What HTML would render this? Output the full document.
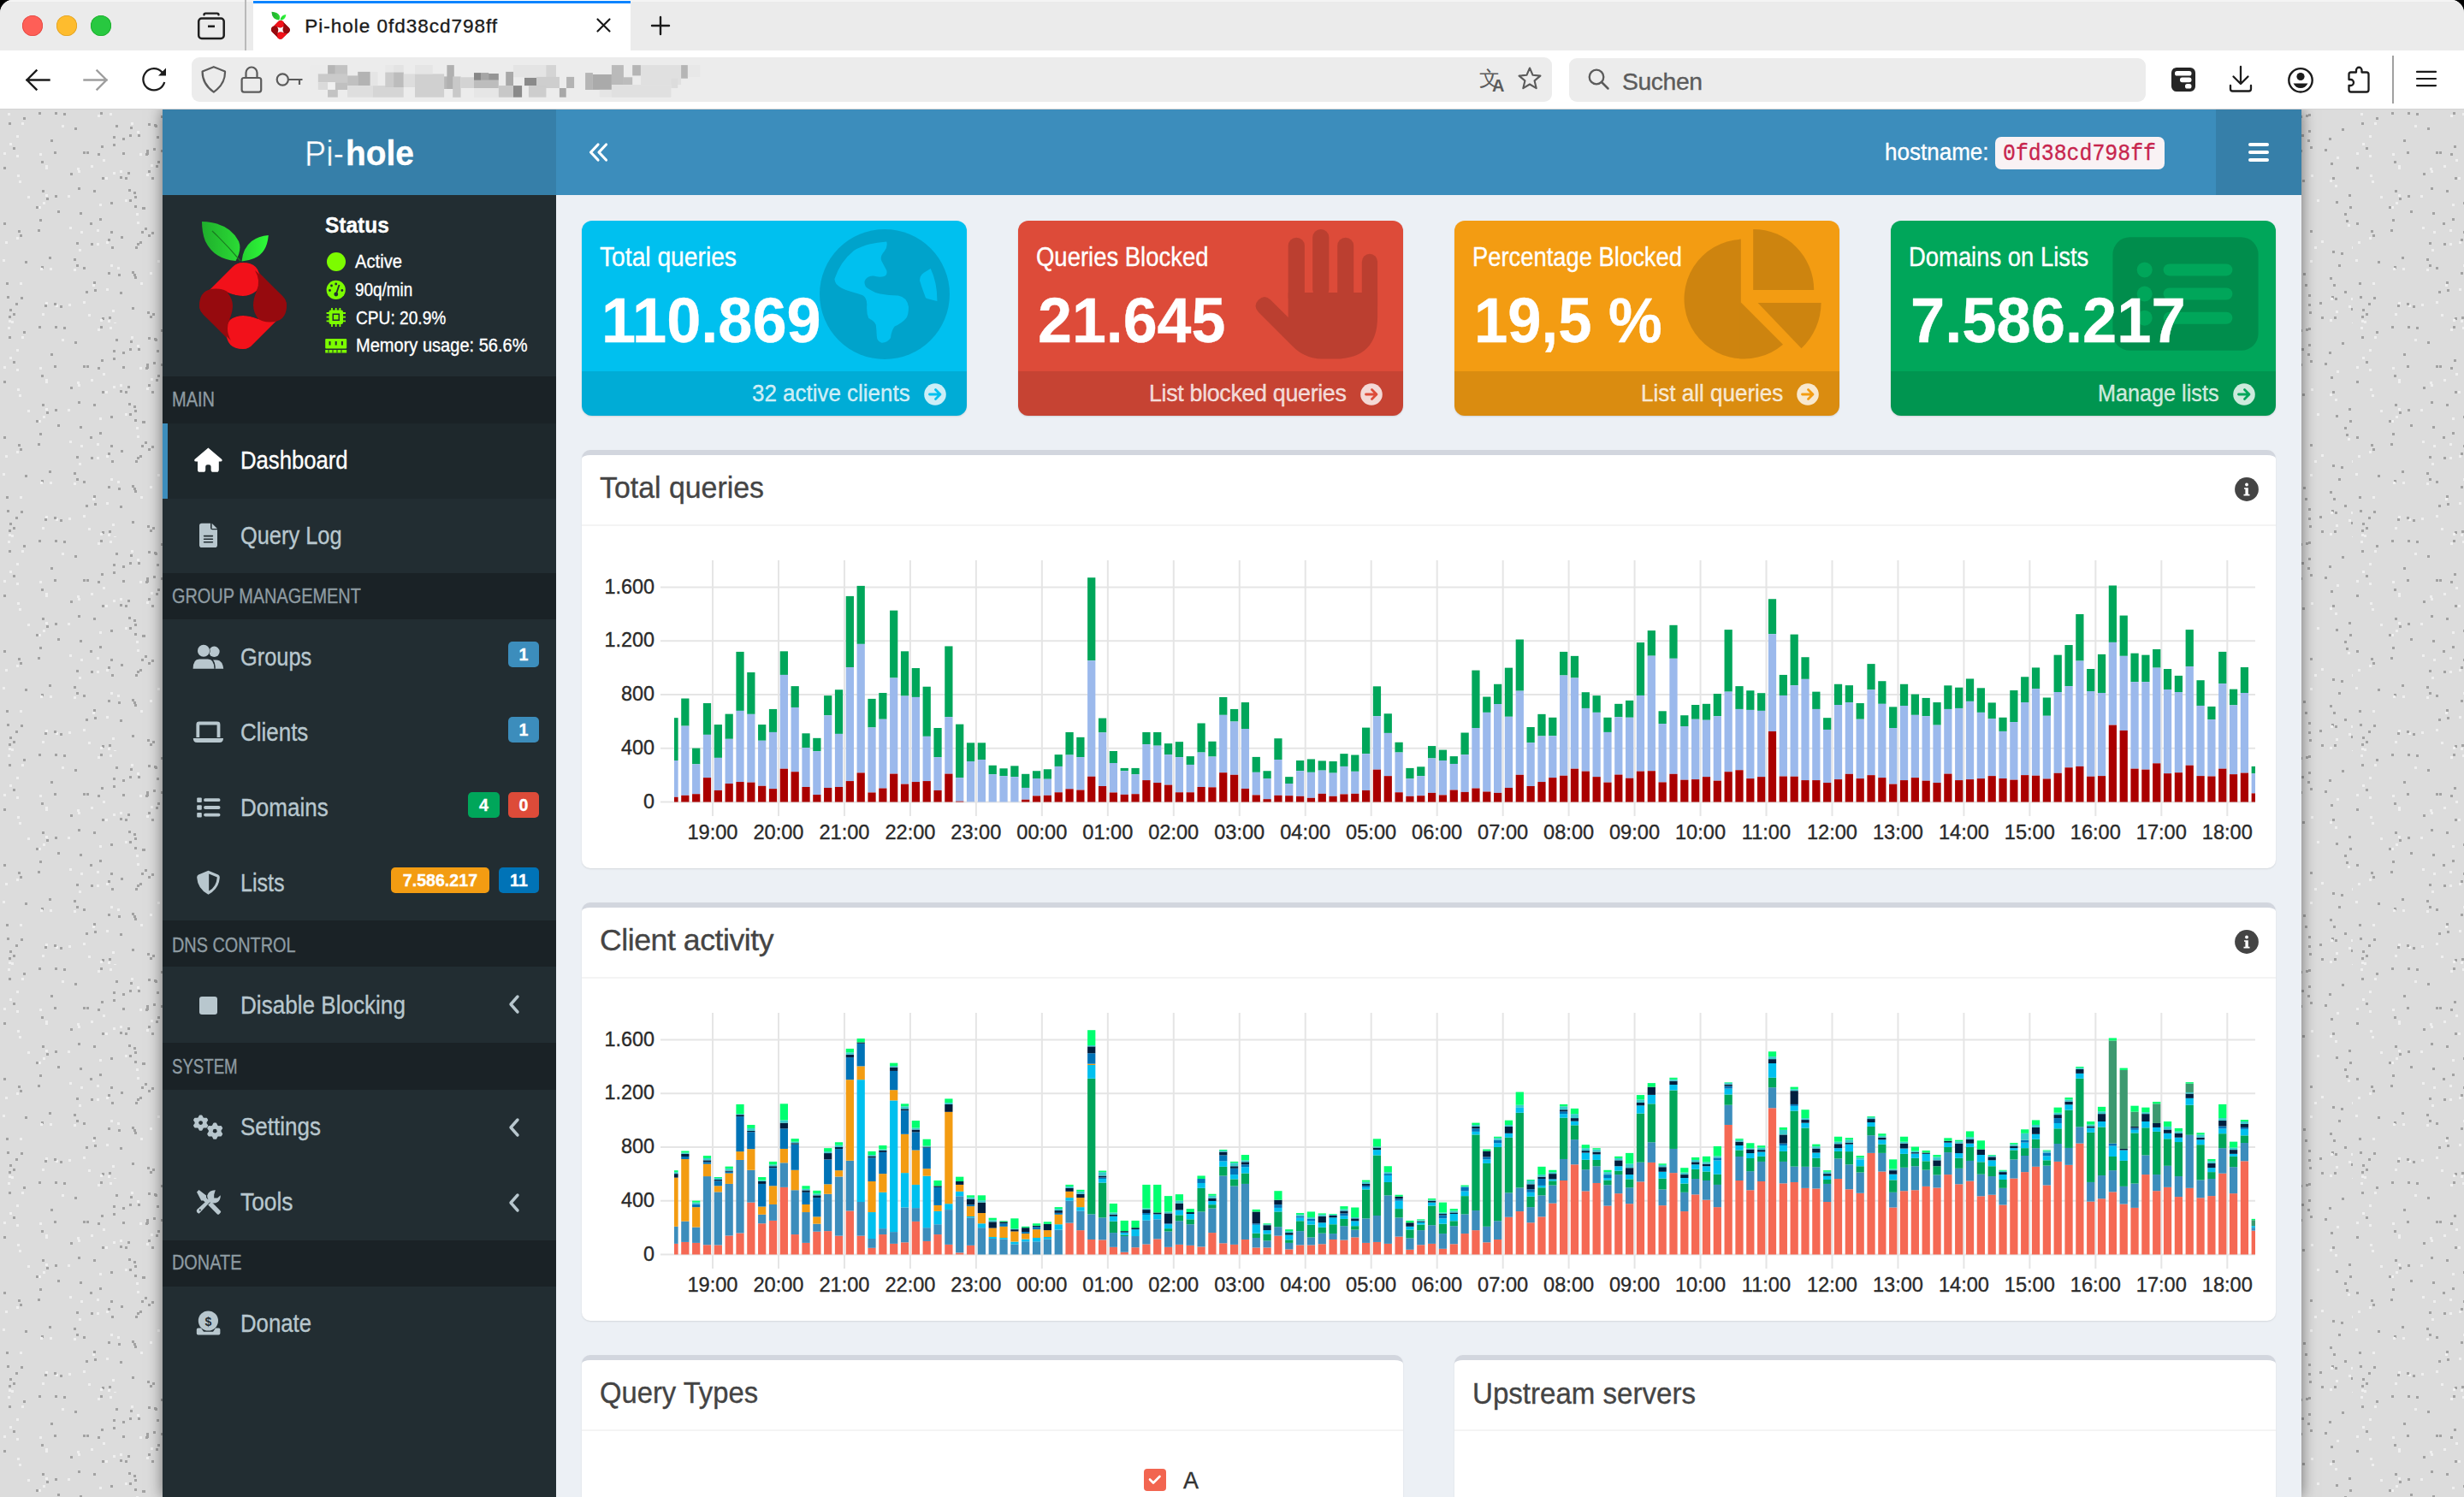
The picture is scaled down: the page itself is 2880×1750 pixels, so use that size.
<!DOCTYPE html><html><head><meta charset="utf-8"><title>Pi-hole</title><style>
*{box-sizing:border-box;margin:0;padding:0}
html,body{width:2880px;height:1750px;overflow:hidden;background:#000}
.t{position:absolute;white-space:nowrap;-webkit-text-stroke:0.35px currentColor}
.abs{position:absolute}
svg{position:absolute;overflow:visible}
</style></head><body>
<div class="abs" style="left:0;top:0;width:2880px;height:1750px;border-radius:15px 15px 0 0;overflow:hidden;background:#dcdcdc">
<div class="abs" style="left:0;top:0;width:2880px;height:59px;background:#ebebeb"></div>
<div class="abs" style="left:0;top:0;width:2880px;height:2px;background:#f4f4f4"></div>
<div class="abs" style="left:25.8px;top:17.7px;width:24px;height:24px;border-radius:50%;background:#fe5f57;box-shadow:inset 0 0 0 0.8px #e14640"></div>
<div class="abs" style="left:65.9px;top:17.7px;width:24px;height:24px;border-radius:50%;background:#febc2e;box-shadow:inset 0 0 0 0.8px #dfa023"></div>
<div class="abs" style="left:106.0px;top:17.7px;width:24px;height:24px;border-radius:50%;background:#28c840;box-shadow:inset 0 0 0 0.8px #1aab29"></div>
<svg style="left:228px;top:12px" width="40" height="38" viewBox="228 12 40 38"><path d="M238.5 17.2 Q238.5 15.6 240.2 15.6 L253.8 15.6 Q255.5 15.6 255.5 17.2" fill="none" stroke="#1f1f1f" stroke-width="2.4" stroke-linecap="round"/><rect x="232.2" y="21.5" width="29.5" height="23.5" rx="3.5" fill="none" stroke="#1f1f1f" stroke-width="2.5"/><rect x="243" y="29.5" width="8" height="2.6" fill="#1f1f1f"/></svg>
<div class="abs" style="left:286px;top:0;width:1.5px;height:59px;background:#b9b9b9"></div>
<div class="abs" style="left:296px;top:0;width:441px;height:59px;background:#fff"></div>
<div class="abs" style="left:296px;top:0.5px;width:441px;height:3.2px;background:#0a84ff"></div>
<div class="t" style="left:356.3px;top:19.9px;font:400 22.53px/22.53px 'Liberation Sans', sans-serif;color:#1b1b1b;letter-spacing:0.98px;">Pi-hole 0fd38cd798ff</div>
<svg style="left:695px;top:19px" width="22" height="22" viewBox="695 19 22 22"><path d="M698.5 22.5 L712.5 36.5 M712.5 22.5 L698.5 36.5" stroke="#1b1b1b" stroke-width="2.2" stroke-linecap="round"/></svg>
<svg style="left:760px;top:18px" width="24" height="24" viewBox="760 18 24 24"><path d="M772 20 V40 M762 30 H782" stroke="#1b1b1b" stroke-width="2.4" stroke-linecap="round"/></svg>
<div class="abs" style="left:0;top:59px;width:2880px;height:68px;background:#fff"></div>
<div class="abs" style="left:0;top:127px;width:2880px;height:1px;background:#d4d4d4"></div>
<svg style="left:26px;top:78px" width="36" height="32" viewBox="26 78 36 32"><path d="M57.5 93.5 H31.5 M42.5 82.5 L31.5 93.5 L42.5 104.5" fill="none" stroke="#1c1c1c" stroke-width="2.4" stroke-linecap="square"/></svg>
<svg style="left:94px;top:78px" width="36" height="32" viewBox="94 78 36 32"><path d="M98.5 93.5 H124.5 M113.5 82.5 L124.5 93.5 L113.5 104.5" fill="none" stroke="#9e9e9e" stroke-width="2.4" stroke-linecap="square"/></svg>
<svg style="left:162px;top:75px" width="36" height="36" viewBox="162 75 36 36"><path d="M192.2 96 A12.6 12.6 0 1 1 189.5 84.5" fill="none" stroke="#1c1c1c" stroke-width="2.3"/><path d="M194 79.5 L194 88.5 L185 88.5Z" fill="#1c1c1c"/></svg>
<div class="abs" style="left:224px;top:67px;width:1590px;height:52px;border-radius:9px;background:#ececec"></div>
<svg style="left:232px;top:74px" width="36" height="38" viewBox="232 74 36 38"><path d="M249.8 78.2 L263 83.5 Q263.5 98 249.8 107.6 Q236.3 98 236.6 83.5Z" fill="none" stroke="#5b5b5b" stroke-width="2.2" stroke-linejoin="round"/></svg>
<svg style="left:279px;top:74px" width="30" height="38" viewBox="279 74 30 38"><path d="M287.5 91 V85 A6.5 6.5 0 0 1 300.5 85 V91" fill="none" stroke="#5b5b5b" stroke-width="2.2"/><rect x="282.6" y="91" width="22.6" height="16.6" rx="2.5" fill="none" stroke="#5b5b5b" stroke-width="2.2"/></svg>
<svg style="left:320px;top:82px" width="38" height="22" viewBox="320 82 38 22"><circle cx="330.3" cy="93" r="6.6" fill="none" stroke="#5b5b5b" stroke-width="2.2"/><path d="M337 93 H353.5 M350 93 V99" fill="none" stroke="#5b5b5b" stroke-width="2.2"/></svg>
<svg style="left:0;top:0" width="2880" height="130" viewBox="0 0 2880 130"><rect x="362.1" y="76.1" width="21.0" height="28.8" fill="#ebebeb"/><rect x="383.1" y="76.1" width="8.8" height="12.3" fill="#b5b5b5"/><rect x="391.9" y="76.1" width="14.2" height="12.3" fill="#c2c2c2"/><rect x="371.8" y="86.4" width="34.3" height="9.7" fill="#cacaca"/><rect x="406.1" y="88.4" width="12.1" height="11.7" fill="#c0c0c0"/><rect x="418.2" y="83.9" width="14.6" height="16.2" fill="#b3b3b3"/><rect x="371.8" y="96.2" width="11.3" height="8.8" fill="#dadada"/><rect x="383.1" y="96.2" width="8.8" height="8.8" fill="#f0f0f0"/><rect x="391.9" y="96.2" width="14.2" height="8.8" fill="#c0c0c0"/><rect x="383.1" y="104.9" width="11.7" height="8.8" fill="#c3c3c3"/><rect x="406.1" y="100.1" width="29.6" height="13.6" fill="#dedede"/><rect x="435.7" y="100.1" width="36.0" height="13.6" fill="#d5d5d5"/><rect x="432.8" y="83.9" width="8.8" height="16.2" fill="#e5e5e5"/><rect x="450.3" y="76.1" width="9.7" height="8.4" fill="#e8e8e8"/><rect x="460.1" y="76.1" width="11.7" height="8.4" fill="#e3e3e3"/><rect x="450.3" y="84.5" width="9.7" height="17.5" fill="#cbcbcb"/><rect x="460.1" y="84.5" width="11.7" height="17.5" fill="#bcbcbc"/><rect x="471.8" y="86.4" width="13.2" height="15.6" fill="#dddddd"/><rect x="485.0" y="86.4" width="34.1" height="27.3" fill="#d0d0d0"/><rect x="485.0" y="76.1" width="20.8" height="10.3" fill="#e5e5e5"/><rect x="519.1" y="89.4" width="10.1" height="14.6" fill="#b8b8b8"/><rect x="522.4" y="76.1" width="8.4" height="27.9" fill="#b0b0b0"/><rect x="529.2" y="89.4" width="9.4" height="24.4" fill="#c8c8c8"/><rect x="538.6" y="90.3" width="15.4" height="12.7" fill="#d3d3d3"/><rect x="554.0" y="85.1" width="8.0" height="8.8" fill="#878787"/><rect x="562.0" y="85.1" width="9.2" height="8.8" fill="#a5a5a5"/><rect x="571.1" y="86.0" width="11.7" height="7.8" fill="#959595"/><rect x="554.0" y="93.8" width="28.8" height="9.2" fill="#bdbdbd"/><rect x="554.0" y="103.0" width="28.8" height="10.7" fill="#e6e6e6"/><rect x="582.8" y="100.1" width="17.5" height="13.6" fill="#c8c8c8"/><rect x="591.2" y="83.9" width="8.8" height="16.2" fill="#a8a8a8"/><rect x="600.0" y="100.1" width="10.1" height="13.6" fill="#8a8a8a"/><rect x="600.0" y="76.1" width="38.4" height="14.2" fill="#e4e4e4"/><rect x="638.3" y="76.1" width="11.7" height="14.2" fill="#d4d4d4"/><rect x="613.0" y="90.9" width="14.0" height="9.2" fill="#8a8a8a"/><rect x="627.0" y="89.9" width="26.9" height="13.1" fill="#cecece"/><rect x="617.9" y="100.1" width="20.5" height="13.6" fill="#cdcdcd"/><rect x="653.9" y="103.0" width="7.8" height="10.7" fill="#a8a8a8"/><rect x="662.1" y="89.9" width="9.0" height="13.1" fill="#b3b3b3"/><rect x="684.1" y="85.1" width="8.8" height="19.9" fill="#b5b5b5"/><rect x="692.9" y="87.0" width="22.0" height="17.9" fill="#aaaaaa"/><rect x="714.9" y="76.1" width="14.0" height="23.0" fill="#bababa"/><rect x="728.9" y="90.3" width="10.3" height="8.8" fill="#bcbcbc"/><rect x="700.7" y="104.9" width="14.2" height="8.8" fill="#e5e5e5"/><rect x="714.9" y="99.1" width="69.5" height="14.6" fill="#e0e0e0"/><rect x="739.2" y="76.1" width="9.7" height="12.3" fill="#b5b5b5"/><rect x="749.0" y="76.1" width="47.1" height="23.0" fill="#e0e0e0"/><rect x="796.1" y="76.1" width="7.8" height="15.6" fill="#b5b5b5"/><rect x="803.9" y="76.1" width="14.6" height="13.8" fill="#e8e8e8"/><rect x="784.4" y="91.7" width="7.8" height="11.3" fill="#dcdcdc"/></svg>
<svg style="left:1728px;top:75px" width="80" height="36" viewBox="1728 75 80 36"><text x="1729" y="100" font-family="Liberation Sans" font-size="24" fill="#5b5b5b">文</text><text x="1744" y="107" font-family="Liberation Sans" font-size="20" font-weight="700" fill="#5b5b5b">A</text><path d="M1788 79.5 L1791.6 87.8 L1800.4 88.6 L1793.6 94.4 L1795.7 103.2 L1788 98.5 L1780.3 103.2 L1782.4 94.4 L1775.6 88.6 L1784.4 87.8Z" fill="none" stroke="#5b5b5b" stroke-width="2.1" stroke-linejoin="round"/></svg>
<div class="abs" style="left:1834px;top:67.5px;width:674px;height:51px;border-radius:9px;background:#ececec"></div>
<svg style="left:1855px;top:78px" width="30" height="30" viewBox="1855 78 30 30"><circle cx="1866" cy="90" r="8.3" fill="none" stroke="#5b5b5b" stroke-width="2.3"/><path d="M1872 96 L1879.5 103.5" stroke="#5b5b5b" stroke-width="2.5" stroke-linecap="round"/></svg>
<div class="t" style="left:1896.0px;top:81.0px;font:400 28.34px/28.34px 'Liberation Sans', sans-serif;color:#5b5b5b;letter-spacing:-0.42px;">Suchen</div>
<svg style="left:2530px;top:72px" width="330" height="50" viewBox="2530 72 330 50"><rect x="2538" y="79" width="28" height="28" rx="6" fill="#252525"/><rect x="2542" y="83" width="19.5" height="5.6" rx="2.6" fill="#fff"/><rect x="2548" y="90.6" width="13.5" height="5.6" rx="2.6" fill="#fff"/><rect x="2554" y="98" width="7.5" height="5.6" rx="2.6" fill="#fff"/><path d="M2619 78 V98 M2610.5 89.5 L2619 98 L2627.5 89.5 M2607 100 V104 Q2607 106.5 2609.5 106.5 H2628.5 Q2631 106.5 2631 104 V100" fill="none" stroke="#1c1c1c" stroke-width="2.3" stroke-linecap="round" stroke-linejoin="round"/><circle cx="2689" cy="93.8" r="13.7" fill="none" stroke="#1c1c1c" stroke-width="2.4"/><circle cx="2689" cy="89.5" r="4.6" fill="#1c1c1c"/><path d="M2680.5 97.5 H2697.5 Q2694.5 103 2689 103 Q2683.5 103 2680.5 97.5Z" fill="#1c1c1c"/><path d="M2754 84.5 V82 A3.2 3.2 0 0 1 2760.5 82 V84.5 H2766 Q2768.5 84.5 2768.5 87 V105 Q2768.5 107.5 2766 107.5 H2748 Q2745.5 107.5 2745.5 105 V100 H2747.5 A3.5 3.5 0 0 0 2747.5 93 H2745.5 V87 Q2745.5 84.5 2748 84.5Z" fill="none" stroke="#1c1c1c" stroke-width="2.3" stroke-linejoin="round"/><rect x="2796.2" y="65" width="1.6" height="56" fill="#8a8a8a"/><path d="M2825 83.9 H2847 M2825 92 H2847 M2825 100.1 H2847" stroke="#1c1c1c" stroke-width="2.2" stroke-linecap="round"/></svg>
<div class="abs" style="left:0;top:128px;width:2880px;height:1622px;overflow:hidden"><div class="abs" style="left:0;top:-128px;width:2880px;height:1750px">
<svg style="left:0;top:128px" width="2880" height="1622"><defs><pattern id="sp" width="250" height="250" patternUnits="userSpaceOnUse"><rect x="113" y="140" width="3" height="3" fill="#efefef"/><rect x="116" y="127" width="3" height="3" fill="#a2a2a2"/><rect x="46" y="128" width="3" height="3" fill="#a2a2a2"/><rect x="198" y="24" width="3" height="3" fill="#a2a2a2"/><rect x="23" y="202" width="3" height="3" fill="#efefef"/><rect x="10" y="246" width="3" height="3" fill="#efefef"/><rect x="163" y="154" width="3" height="3" fill="#a2a2a2"/><rect x="4" y="132" width="3" height="3" fill="#a2a2a2"/><rect x="48" y="60" width="3" height="3" fill="#a2a2a2"/><rect x="116" y="110" width="3" height="3" fill="#efefef"/><rect x="130" y="160" width="3" height="3" fill="#a2a2a2"/><rect x="166" y="114" width="3" height="3" fill="#a2a2a2"/><rect x="249" y="249" width="3" height="3" fill="#efefef"/><rect x="177" y="79" width="3" height="3" fill="#a2a2a2"/><rect x="72" y="18" width="3" height="3" fill="#efefef"/><rect x="100" y="212" width="3" height="3" fill="#a2a2a2"/><rect x="240" y="212" width="3" height="3" fill="#a2a2a2"/><rect x="52" y="228" width="3" height="3" fill="#a2a2a2"/><rect x="245" y="99" width="3" height="3" fill="#a2a2a2"/><rect x="157" y="195" width="3" height="3" fill="#a2a2a2"/><rect x="22" y="83" width="3" height="3" fill="#efefef"/><rect x="190" y="29" width="3" height="3" fill="#a2a2a2"/><rect x="25" y="15" width="3" height="3" fill="#efefef"/><rect x="44" y="140" width="3" height="3" fill="#a2a2a2"/><rect x="48" y="183" width="3" height="3" fill="#a2a2a2"/><rect x="161" y="29" width="3" height="3" fill="#a2a2a2"/><rect x="53" y="67" width="3" height="3" fill="#efefef"/><rect x="201" y="76" width="3" height="3" fill="#efefef"/><rect x="53" y="99" width="3" height="3" fill="#efefef"/><rect x="160" y="25" width="3" height="3" fill="#efefef"/><rect x="53" y="65" width="3" height="3" fill="#efefef"/><rect x="82" y="74" width="3" height="3" fill="#a2a2a2"/><rect x="23" y="146" width="3" height="3" fill="#a2a2a2"/><rect x="150" y="93" width="3" height="3" fill="#a2a2a2"/><rect x="240" y="121" width="3" height="3" fill="#a2a2a2"/><rect x="217" y="46" width="3" height="3" fill="#a2a2a2"/><rect x="227" y="204" width="3" height="3" fill="#a2a2a2"/><rect x="47" y="185" width="3" height="3" fill="#efefef"/><rect x="49" y="238" width="3" height="3" fill="#efefef"/><rect x="151" y="105" width="3" height="3" fill="#a2a2a2"/><rect x="10" y="241" width="3" height="3" fill="#a2a2a2"/><rect x="176" y="64" width="3" height="3" fill="#efefef"/><rect x="149" y="73" width="3" height="3" fill="#a2a2a2"/><rect x="180" y="17" width="3" height="3" fill="#a2a2a2"/><rect x="140" y="213" width="3" height="3" fill="#a2a2a2"/><rect x="70" y="229" width="3" height="3" fill="#a2a2a2"/><rect x="4" y="67" width="3" height="3" fill="#a2a2a2"/><rect x="15" y="44" width="3" height="3" fill="#a2a2a2"/><rect x="143" y="33" width="3" height="3" fill="#a2a2a2"/><rect x="223" y="245" width="3" height="3" fill="#efefef"/><rect x="173" y="146" width="3" height="3" fill="#a2a2a2"/><rect x="9" y="4" width="3" height="3" fill="#efefef"/><rect x="175" y="241" width="3" height="3" fill="#a2a2a2"/><rect x="159" y="121" width="3" height="3" fill="#efefef"/><rect x="80" y="250" width="3" height="3" fill="#a2a2a2"/><rect x="137" y="184" width="3" height="3" fill="#efefef"/><rect x="184" y="176" width="3" height="3" fill="#efefef"/><rect x="229" y="88" width="3" height="3" fill="#efefef"/><rect x="225" y="218" width="3" height="3" fill="#a2a2a2"/><rect x="198" y="216" width="3" height="3" fill="#a2a2a2"/><rect x="156" y="96" width="3" height="3" fill="#a2a2a2"/><rect x="152" y="20" width="3" height="3" fill="#a2a2a2"/><rect x="248" y="220" width="3" height="3" fill="#efefef"/><rect x="97" y="184" width="3" height="3" fill="#a2a2a2"/><rect x="110" y="210" width="3" height="3" fill="#a2a2a2"/><rect x="188" y="7" width="3" height="3" fill="#a2a2a2"/><rect x="120" y="58" width="3" height="3" fill="#efefef"/><rect x="124" y="154" width="3" height="3" fill="#efefef"/><rect x="64" y="3" width="3" height="3" fill="#a2a2a2"/><rect x="170" y="51" width="3" height="3" fill="#a2a2a2"/><rect x="226" y="165" width="3" height="3" fill="#a2a2a2"/><rect x="223" y="82" width="3" height="3" fill="#efefef"/><rect x="50" y="108" width="3" height="3" fill="#efefef"/><rect x="229" y="220" width="3" height="3" fill="#a2a2a2"/><rect x="146" y="79" width="3" height="3" fill="#a2a2a2"/><rect x="124" y="209" width="3" height="3" fill="#efefef"/><rect x="178" y="238" width="3" height="3" fill="#a2a2a2"/><rect x="42" y="113" width="3" height="3" fill="#a2a2a2"/><rect x="54" y="103" width="3" height="3" fill="#a2a2a2"/><rect x="123" y="79" width="3" height="3" fill="#efefef"/><rect x="246" y="113" width="3" height="3" fill="#a2a2a2"/><rect x="8" y="218" width="3" height="3" fill="#a2a2a2"/><rect x="177" y="143" width="3" height="3" fill="#a2a2a2"/><rect x="198" y="5" width="3" height="3" fill="#a2a2a2"/><rect x="114" y="6" width="3" height="3" fill="#efefef"/><rect x="59" y="35" width="3" height="3" fill="#a2a2a2"/><rect x="157" y="112" width="3" height="3" fill="#a2a2a2"/><rect x="164" y="202" width="3" height="3" fill="#efefef"/><rect x="171" y="50" width="3" height="3" fill="#a2a2a2"/><rect x="45" y="3" width="3" height="3" fill="#a2a2a2"/><rect x="179" y="45" width="3" height="3" fill="#a2a2a2"/><rect x="86" y="174" width="3" height="3" fill="#a2a2a2"/><rect x="154" y="189" width="3" height="3" fill="#a2a2a2"/><rect x="198" y="227" width="3" height="3" fill="#a2a2a2"/><rect x="233" y="181" width="3" height="3" fill="#a2a2a2"/><rect x="113" y="156" width="3" height="3" fill="#efefef"/><rect x="94" y="142" width="3" height="3" fill="#efefef"/><rect x="199" y="236" width="3" height="3" fill="#a2a2a2"/><rect x="163" y="51" width="3" height="3" fill="#efefef"/><rect x="205" y="160" width="3" height="3" fill="#efefef"/><rect x="53" y="225" width="3" height="3" fill="#efefef"/><rect x="244" y="134" width="3" height="3" fill="#efefef"/><rect x="80" y="227" width="3" height="3" fill="#efefef"/><rect x="87" y="21" width="3" height="3" fill="#a2a2a2"/><rect x="138" y="192" width="3" height="3" fill="#a2a2a2"/><rect x="7" y="202" width="3" height="3" fill="#a2a2a2"/><rect x="200" y="43" width="3" height="3" fill="#a2a2a2"/><rect x="197" y="35" width="3" height="3" fill="#a2a2a2"/><rect x="129" y="181" width="3" height="3" fill="#efefef"/><rect x="172" y="236" width="3" height="3" fill="#a2a2a2"/><rect x="237" y="22" width="3" height="3" fill="#a2a2a2"/><rect x="132" y="73" width="3" height="3" fill="#efefef"/><rect x="160" y="131" width="3" height="3" fill="#efefef"/><rect x="140" y="78" width="3" height="3" fill="#a2a2a2"/><rect x="211" y="225" width="3" height="3" fill="#a2a2a2"/><rect x="213" y="242" width="3" height="3" fill="#a2a2a2"/><rect x="143" y="50" width="3" height="3" fill="#a2a2a2"/><rect x="126" y="151" width="3" height="3" fill="#a2a2a2"/><rect x="242" y="129" width="3" height="3" fill="#a2a2a2"/><rect x="200" y="141" width="3" height="3" fill="#a2a2a2"/><rect x="173" y="16" width="3" height="3" fill="#a2a2a2"/><rect x="103" y="239" width="3" height="3" fill="#efefef"/><rect x="67" y="118" width="3" height="3" fill="#a2a2a2"/><rect x="108" y="204" width="3" height="3" fill="#efefef"/><rect x="119" y="79" width="3" height="3" fill="#a2a2a2"/><rect x="154" y="231" width="3" height="3" fill="#a2a2a2"/><rect x="195" y="6" width="3" height="3" fill="#a2a2a2"/><rect x="57" y="172" width="3" height="3" fill="#a2a2a2"/><rect x="89" y="155" width="3" height="3" fill="#a2a2a2"/><rect x="183" y="31" width="3" height="3" fill="#a2a2a2"/><rect x="63" y="49" width="3" height="3" fill="#a2a2a2"/><rect x="109" y="94" width="3" height="3" fill="#a2a2a2"/><rect x="132" y="40" width="3" height="3" fill="#a2a2a2"/><rect x="158" y="160" width="3" height="3" fill="#a2a2a2"/><rect x="213" y="153" width="3" height="3" fill="#efefef"/><rect x="58" y="185" width="3" height="3" fill="#efefef"/><rect x="226" y="79" width="3" height="3" fill="#a2a2a2"/><rect x="231" y="55" width="3" height="3" fill="#efefef"/><rect x="222" y="33" width="3" height="3" fill="#a2a2a2"/><rect x="182" y="65" width="3" height="3" fill="#a2a2a2"/><rect x="208" y="105" width="3" height="3" fill="#efefef"/><rect x="32" y="101" width="3" height="3" fill="#efefef"/><rect x="4" y="50" width="3" height="3" fill="#efefef"/><rect x="228" y="242" width="3" height="3" fill="#a2a2a2"/><rect x="126" y="190" width="3" height="3" fill="#a2a2a2"/><rect x="171" y="47" width="3" height="3" fill="#a2a2a2"/><rect x="27" y="9" width="3" height="3" fill="#a2a2a2"/><rect x="129" y="142" width="3" height="3" fill="#a2a2a2"/><rect x="46" y="51" width="3" height="3" fill="#efefef"/><rect x="248" y="232" width="3" height="3" fill="#a2a2a2"/><rect x="15" y="238" width="3" height="3" fill="#a2a2a2"/><rect x="191" y="82" width="3" height="3" fill="#a2a2a2"/><rect x="129" y="108" width="3" height="3" fill="#a2a2a2"/><rect x="3" y="175" width="3" height="3" fill="#efefef"/><rect x="45" y="113" width="3" height="3" fill="#efefef"/><rect x="101" y="49" width="3" height="3" fill="#a2a2a2"/><rect x="128" y="4" width="3" height="3" fill="#efefef"/><rect x="200" y="176" width="3" height="3" fill="#efefef"/><rect x="157" y="101" width="3" height="3" fill="#a2a2a2"/><rect x="126" y="246" width="3" height="3" fill="#efefef"/><rect x="65" y="228" width="3" height="3" fill="#efefef"/><rect x="194" y="204" width="3" height="3" fill="#a2a2a2"/><rect x="224" y="220" width="3" height="3" fill="#efefef"/><rect x="192" y="191" width="3" height="3" fill="#a2a2a2"/><rect x="181" y="18" width="3" height="3" fill="#a2a2a2"/><rect x="117" y="3" width="3" height="3" fill="#a2a2a2"/><rect x="160" y="156" width="3" height="3" fill="#a2a2a2"/><rect x="236" y="167" width="3" height="3" fill="#a2a2a2"/><rect x="165" y="142" width="3" height="3" fill="#a2a2a2"/><rect x="97" y="250" width="3" height="3" fill="#a2a2a2"/><rect x="175" y="190" width="3" height="3" fill="#efefef"/><rect x="6" y="154" width="3" height="3" fill="#efefef"/><rect x="64" y="100" width="3" height="3" fill="#a2a2a2"/><rect x="49" y="94" width="3" height="3" fill="#a2a2a2"/><rect x="63" y="226" width="3" height="3" fill="#a2a2a2"/><rect x="127" y="242" width="3" height="3" fill="#a2a2a2"/><rect x="249" y="160" width="3" height="3" fill="#efefef"/><rect x="19" y="149" width="3" height="3" fill="#efefef"/><rect x="11" y="233" width="3" height="3" fill="#a2a2a2"/><rect x="118" y="42" width="3" height="3" fill="#a2a2a2"/><rect x="153" y="15" width="3" height="3" fill="#efefef"/><rect x="105" y="132" width="3" height="3" fill="#a2a2a2"/><rect x="91" y="71" width="3" height="3" fill="#efefef"/><rect x="140" y="71" width="3" height="3" fill="#efefef"/><rect x="74" y="4" width="3" height="3" fill="#a2a2a2"/><rect x="11" y="39" width="3" height="3" fill="#efefef"/><rect x="97" y="224" width="3" height="3" fill="#efefef"/><rect x="13" y="247" width="3" height="3" fill="#efefef"/><rect x="18" y="226" width="3" height="3" fill="#a2a2a2"/><rect x="119" y="243" width="3" height="3" fill="#a2a2a2"/><rect x="131" y="234" width="3" height="3" fill="#efefef"/><rect x="117" y="245" width="3" height="3" fill="#efefef"/><rect x="151" y="29" width="3" height="3" fill="#a2a2a2"/><rect x="114" y="51" width="3" height="3" fill="#a2a2a2"/><rect x="132" y="31" width="3" height="3" fill="#a2a2a2"/><rect x="167" y="114" width="3" height="3" fill="#a2a2a2"/><rect x="146" y="105" width="3" height="3" fill="#efefef"/><rect x="133" y="249" width="3" height="3" fill="#efefef"/><rect x="184" y="60" width="3" height="3" fill="#a2a2a2"/><rect x="223" y="196" width="3" height="3" fill="#a2a2a2"/><rect x="90" y="68" width="3" height="3" fill="#efefef"/><rect x="141" y="148" width="3" height="3" fill="#a2a2a2"/><rect x="188" y="47" width="3" height="3" fill="#a2a2a2"/><rect x="245" y="229" width="3" height="3" fill="#efefef"/><rect x="10" y="15" width="3" height="3" fill="#a2a2a2"/><rect x="106" y="156" width="3" height="3" fill="#a2a2a2"/><rect x="135" y="18" width="3" height="3" fill="#a2a2a2"/><rect x="169" y="138" width="3" height="3" fill="#a2a2a2"/><rect x="93" y="120" width="3" height="3" fill="#a2a2a2"/><rect x="86" y="186" width="3" height="3" fill="#efefef"/><rect x="19" y="30" width="3" height="3" fill="#efefef"/><rect x="156" y="192" width="3" height="3" fill="#a2a2a2"/><rect x="106" y="65" width="3" height="3" fill="#efefef"/><rect x="92" y="163" width="3" height="3" fill="#efefef"/><rect x="81" y="137" width="3" height="3" fill="#efefef"/><rect x="230" y="107" width="3" height="3" fill="#a2a2a2"/><rect x="24" y="219" width="3" height="3" fill="#a2a2a2"/><rect x="21" y="141" width="3" height="3" fill="#a2a2a2"/><rect x="171" y="75" width="3" height="3" fill="#efefef"/><rect x="19" y="53" width="3" height="3" fill="#efefef"/><rect x="20" y="76" width="3" height="3" fill="#efefef"/><rect x="173" y="71" width="3" height="3" fill="#a2a2a2"/><rect x="89" y="181" width="3" height="3" fill="#a2a2a2"/><rect x="29" y="177" width="3" height="3" fill="#a2a2a2"/><rect x="230" y="235" width="3" height="3" fill="#efefef"/><rect x="109" y="201" width="3" height="3" fill="#a2a2a2"/><rect x="79" y="100" width="3" height="3" fill="#efefef"/><rect x="224" y="62" width="3" height="3" fill="#a2a2a2"/><rect x="91" y="91" width="3" height="3" fill="#a2a2a2"/><rect x="97" y="49" width="3" height="3" fill="#a2a2a2"/></pattern></defs><rect width="2880" height="1622" fill="url(#sp)"/></svg>
<div class="abs" style="left:190px;top:128px;width:2500px;height:1622px;background:#ecf0f5;box-shadow:0 0 16px rgba(0,0,0,.5)"></div>
<div class="abs" style="left:190px;top:128px;width:460px;height:100px;background:#367fa9"></div>
<div class="abs" style="left:650px;top:128px;width:2040px;height:100px;background:#3c8dbc"></div>
<div class="abs" style="left:2590px;top:128px;width:100px;height:100px;background:#367fa9"></div>
<div class="t" style="left:356.0px;top:157.8px;font:400 43.02px/43.02px 'Liberation Sans', sans-serif;color:#fff;letter-spacing:0.00px;-webkit-text-stroke:0.6px #367fa9;transform:scaleX(0.8764);transform-origin:0 0;">Pi-</div>
<div class="t" style="left:403.8px;top:159.1px;font:700 40.70px/40.70px 'Liberation Sans', sans-serif;color:#fff;letter-spacing:0.00px;transform:scaleX(0.9554);transform-origin:0 0;">hole</div>
<svg style="left:680px;top:160px" width="40" height="36" viewBox="680 160 40 36"><path d="M699 169 L690.5 178 L699 187 M708.5 169 L700 178 L708.5 187" fill="none" stroke="#fff" stroke-width="3.2" stroke-linecap="round" stroke-linejoin="round"/></svg>
<div class="t" style="left:2203.4px;top:164.4px;font:400 27.62px/27.62px 'Liberation Sans', sans-serif;color:#fff;letter-spacing:0.00px;transform:scaleX(0.9429);transform-origin:0 0;">hostname:</div>
<div class="abs" style="left:2332px;top:160px;width:198px;height:38px;border-radius:7px;background:#f9f2f4"></div>
<div class="t" style="left:2341.0px;top:165.9px;font:400 28.53px/28.53px 'Liberation Mono', monospace;color:#c7254e;letter-spacing:0.00px;transform:scaleX(0.8715);transform-origin:0 0;">0fd38cd798ff</div>
<svg style="left:2620px;top:160px" width="40" height="36" viewBox="2620 160 40 36"><path d="M2630 169 H2650 M2630 178 H2650 M2630 187 H2650" stroke="#fff" stroke-width="4" stroke-linecap="round"/></svg>
<div class="abs" style="left:190px;top:228px;width:460px;height:1522px;background:#222d32"></div>
<svg style="left:225px;top:250px" width="120" height="165" viewBox="225 250 120 165"><defs><linearGradient id="lg1" x1="0" x2="1"><stop offset="0" stop-color="#1fae2c"/><stop offset="1" stop-color="#2bdb35"/></linearGradient><linearGradient id="lg2" x1="0" x2="1"><stop offset="0" stop-color="#25d232"/><stop offset="1" stop-color="#2efb38"/></linearGradient></defs><path d="M236 259 Q268 260 279 282 Q283 292 275.5 305 Q250 303 240 282 Q236 272 236 259Z" fill="url(#lg1)"/><path d="M248 270 Q265 286 281 305" stroke="#1a7a20" stroke-width="1.2" fill="none"/><path d="M313.8 275 Q312 296 297 302 Q290 305 282.5 305.5 Q284 290 294 282 Q302 276 313.8 275Z" fill="url(#lg2)"/><path d="M284 307 Q291 307 296 312 L330 346 Q335 351 335 357 Q335 363 330 368 L296 402 Q291 408 284 408 Q277 408 272 402 L238 368 Q233 363 233 357 Q233 351 238 346 L272 312 Q277 307 284 307Z" fill="#960a0e"/><path d="M238 346 L272 312 Q277 307 284 307 Q303.5 307 303.5 326.5 Q303.5 346 284 346 Q276 346 266 342 Q254 337 244 342Z" fill="#f2111a"/><path d="M330 368 L296 402 Q291 408 284 408 Q264.5 408 264.5 388.5 Q264.5 369 284 369 Q292 369 302 373 Q314 378 324 373Z" fill="#f2111a"/><path d="M238 368 Q233 363 233 357 Q233 337.5 252.5 337.5 Q272 337.5 272 357 Q272 365 268 374 Q263 386 270 398Z" fill="#960a0e"/><path d="M330 346 Q335 351 335 357 Q335 376.5 315.5 376.5 Q296 376.5 296 357 Q296 349 300 340 Q305 328 298 316Z" fill="#960a0e"/><path d="M284 346 Q276 346 266 342 Q272 350 272 357 Q272 365 268 374 Q276 369 284 369 Q292 369 302 373 Q296 365 296 357 Q296 349 300 340 Q292 346 284 346Z" fill="#222d32"/></svg>
<div class="t" style="left:379.5px;top:251.0px;font:700 25.58px/25.58px 'Liberation Sans', sans-serif;color:#fff;letter-spacing:0.00px;transform:scaleX(0.9571);transform-origin:0 0;">Status</div>
<div class="abs" style="left:381.8px;top:295px;width:22px;height:22px;border-radius:50%;background:#7cfc00"></div>
<div class="t" style="left:415.1px;top:295.4px;font:400 22.24px/22.24px 'Liberation Sans', sans-serif;color:#fff;letter-spacing:0.00px;transform:scaleX(0.9076);transform-origin:0 0;">Active</div>
<svg style="left:380px;top:326px" width="26" height="26" viewBox="380 326 26 26"><circle cx="392.7" cy="338.9" r="11.1" fill="#7cfc00"/><circle cx="392.7" cy="332" r="1.4" fill="#222d32"/><circle cx="387.5" cy="334" r="1.4" fill="#222d32"/><circle cx="385.5" cy="339.5" r="1.4" fill="#222d32"/><circle cx="399.8" cy="339.5" r="1.4" fill="#222d32"/><path d="M396.5 333 L393.5 342" stroke="#222d32" stroke-width="1.8"/><circle cx="392.8" cy="344" r="2.4" fill="#222d32"/></svg>
<div class="t" style="left:415.1px;top:328.4px;font:400 22.24px/22.24px 'Liberation Sans', sans-serif;color:#fff;letter-spacing:0.00px;transform:scaleX(0.8501);transform-origin:0 0;">90q/min</div>
<svg style="left:380px;top:358px" width="26" height="26" viewBox="380 358 26 26"><rect x="384.5" y="362.5" width="16.5" height="16.5" rx="2" fill="#7cfc00"/><rect x="388.5" y="366.5" width="8.5" height="8.5" fill="#222d32"/><rect x="390" y="368" width="5.5" height="5.5" fill="#7cfc00"/><path d="M388 360 V363 M392.7 360 V363 M397.4 360 V363 M388 378.5 V382 M392.7 378.5 V382 M397.4 378.5 V382 M381.6 366 H385 M381.6 370.7 H385 M381.6 375.4 H385 M400.5 366 H404 M400.5 370.7 H404 M400.5 375.4 H404" stroke="#7cfc00" stroke-width="1.8"/></svg>
<div class="t" style="left:415.7px;top:361.0px;font:400 21.80px/21.80px 'Liberation Sans', sans-serif;color:#fff;letter-spacing:0.00px;transform:scaleX(0.8782);transform-origin:0 0;">CPU: 20.9%</div>
<svg style="left:379px;top:394px" width="28" height="20" viewBox="379 394 28 20"><rect x="380.2" y="396" width="25" height="11.5" rx="1" fill="#7cfc00"/><rect x="384.5" y="399" width="2" height="4.5" fill="#222d32"/><rect x="391.7" y="399" width="2" height="4.5" fill="#222d32"/><rect x="398.9" y="399" width="2" height="4.5" fill="#222d32"/><rect x="380.2" y="409" width="25" height="3.5" fill="#7cfc00"/><path d="M384 409 V412.5 M389 409 V412.5 M394 409 V412.5 M399 409 V412.5" stroke="#222d32" stroke-width="1"/></svg>
<div class="t" style="left:415.7px;top:393.8px;font:400 21.37px/21.37px 'Liberation Sans', sans-serif;color:#fff;letter-spacing:0.00px;transform:scaleX(0.9384);transform-origin:0 0;">Memory usage: 56.6%</div>
<div class="abs" style="left:190px;top:440px;width:460px;height:55px;background:#1a2226"></div>
<div class="t" style="left:201.0px;top:456.3px;font:400 23.26px/23.26px 'Liberation Sans', sans-serif;color:#8e9ba2;letter-spacing:0.00px;transform:scaleX(0.8600);transform-origin:0 0;">MAIN</div>
<div class="abs" style="left:190px;top:495px;width:460px;height:88px;background:#1e282c"></div>
<div class="abs" style="left:190px;top:495px;width:6px;height:88px;background:#3c8dbc"></div>
<svg style="left:224px;top:520px" width="40" height="36" viewBox="224 520 40 36"><path d="M243.4 523.6 L259.3 537 Q260.5 539.6 257.6 539.6 H255.8 V549.2 Q255.8 551.8 253.2 551.8 H249.2 Q246.6 551.8 246.6 549.2 V545.6 Q246.6 543.2 244.2 543.2 H242.6 Q240.2 543.2 240.2 545.6 V549.2 Q240.2 551.8 237.6 551.8 H233.6 Q231 551.8 231 549.2 V539.6 H229.2 Q226.3 539.6 227.5 537 Z" fill="#fff"/></svg>
<div class="t" style="left:281.0px;top:524.4px;font:400 29.07px/29.07px 'Liberation Sans', sans-serif;color:#fff;letter-spacing:0.00px;transform:scaleX(0.8836);transform-origin:0 0;">Dashboard</div>
<svg style="left:228px;top:606px" width="32" height="40" viewBox="228 606 32 40"><path d="M235.8 611.8 H246 V617 Q246 619.2 248.2 619.2 H254 V637.2 Q254 640 251.2 640 H235.8 Q233 640 233 637.2 V614.6 Q233 611.8 235.8 611.8Z M247.6 611.8 L254 618 H247.6Z" fill="#b8c7ce"/><path d="M238.6 626.6 H248.4 M238.6 630.2 H248.4 M238.6 633.8 H248.4" stroke="#222d32" stroke-width="1.6" stroke-linecap="round"/></svg>
<div class="t" style="left:281.0px;top:612.4px;font:400 29.07px/29.07px 'Liberation Sans', sans-serif;color:#b8c7ce;letter-spacing:0.00px;transform:scaleX(0.8736);transform-origin:0 0;">Query Log</div>
<div class="abs" style="left:190px;top:670px;width:460px;height:54px;background:#1a2226"></div>
<div class="t" style="left:201.0px;top:685.9px;font:400 23.26px/23.26px 'Liberation Sans', sans-serif;color:#8e9ba2;letter-spacing:0.00px;transform:scaleX(0.8565);transform-origin:0 0;">GROUP MANAGEMENT</div>
<svg style="left:222px;top:750px" width="44" height="36" viewBox="222 750 44 36"><circle cx="250.4" cy="761.8" r="6.2" fill="#b8c7ce"/><path d="M249 771.4 H252.5 Q260 771.4 261.2 781.8 H250.5Z" fill="#b8c7ce"/><circle cx="238" cy="760.8" r="7.6" fill="#222d32"/><circle cx="238" cy="760.8" r="7" fill="#b8c7ce"/><path d="M232.5 769.4 H243.5 Q251.8 769.4 251.8 781.8 H224.2 Q224.2 769.4 232.5 769.4Z" fill="#222d32"/><path d="M233 770.4 H243 Q250.4 770.4 250.4 781.8 H225.6 Q225.6 770.4 233 770.4Z" fill="#b8c7ce"/></svg>
<div class="t" style="left:281.0px;top:754.0px;font:400 29.07px/29.07px 'Liberation Sans', sans-serif;color:#b8c7ce;letter-spacing:0.00px;transform:scaleX(0.8736);transform-origin:0 0;">Groups</div>
<div class="abs" style="left:594px;top:750px;width:36px;height:30px;border-radius:5px;background:#3c8dbc"></div>
<div class="t" style="left:606.6px;top:755.9px;font:700 19.62px/19.62px 'Liberation Sans', sans-serif;color:#fff;letter-spacing:0.00px;">1</div>
<svg style="left:222px;top:838px" width="44" height="36" viewBox="222 838 44 36"><path d="M231.3 862 V847 Q231.3 845.5 232.8 845.5 H254 Q255.5 845.5 255.5 847 V862" fill="none" stroke="#b8c7ce" stroke-width="3.8"/><path d="M225.8 863 H261 Q261 868 256.5 868 H230.3 Q225.8 868 225.8 863Z" fill="#b8c7ce"/></svg>
<div class="t" style="left:281.0px;top:842.0px;font:400 29.07px/29.07px 'Liberation Sans', sans-serif;color:#b8c7ce;letter-spacing:0.00px;transform:scaleX(0.8929);transform-origin:0 0;">Clients</div>
<div class="abs" style="left:594px;top:838px;width:36px;height:30px;border-radius:5px;background:#3c8dbc"></div>
<div class="t" style="left:606.6px;top:843.9px;font:700 19.62px/19.62px 'Liberation Sans', sans-serif;color:#fff;letter-spacing:0.00px;">1</div>
<svg style="left:224px;top:926px" width="40" height="36" viewBox="224 926 40 36"><rect x="230.2" y="932.6" width="5.6" height="5.4" rx="1" fill="#b8c7ce"/><rect x="230.2" y="941.3" width="5.6" height="5.4" rx="1" fill="#b8c7ce"/><rect x="230.2" y="950" width="5.6" height="5.4" rx="1" fill="#b8c7ce"/><path d="M240 935.2 H255.6 M240 944 H255.6 M240 952.6 H255.6" stroke="#b8c7ce" stroke-width="3.8" stroke-linecap="round"/></svg>
<div class="t" style="left:281.0px;top:930.0px;font:400 29.07px/29.07px 'Liberation Sans', sans-serif;color:#b8c7ce;letter-spacing:0.00px;transform:scaleX(0.8955);transform-origin:0 0;">Domains</div>
<div class="abs" style="left:547px;top:926px;width:37px;height:30px;border-radius:5px;background:#00a65a"></div>
<div class="t" style="left:560.1px;top:931.9px;font:700 19.62px/19.62px 'Liberation Sans', sans-serif;color:#fff;letter-spacing:0.00px;">4</div>
<div class="abs" style="left:594px;top:926px;width:36px;height:30px;border-radius:5px;background:#dd4b39"></div>
<div class="t" style="left:606.6px;top:931.9px;font:700 19.62px/19.62px 'Liberation Sans', sans-serif;color:#fff;letter-spacing:0.00px;">0</div>
<svg style="left:224px;top:1012px" width="40" height="40" viewBox="224 1012 40 40"><path d="M243.5 1017.8 L255 1022.6 Q257 1023.6 256.8 1026 Q256 1039 243.5 1045.8 Q231 1039 230.2 1026 Q230 1023.6 232 1022.6Z" fill="#b8c7ce"/><path d="M244.2 1021.4 L253.8 1025.4 Q253 1036.5 244.2 1041.6Z" fill="#222d32"/></svg>
<div class="t" style="left:281.0px;top:1018.0px;font:400 29.07px/29.07px 'Liberation Sans', sans-serif;color:#b8c7ce;letter-spacing:0.00px;transform:scaleX(0.8638);transform-origin:0 0;">Lists</div>
<div class="abs" style="left:457px;top:1014px;width:115px;height:30px;border-radius:5px;background:#f39c12"></div>
<div class="t" style="left:470.8px;top:1019.9px;font:700 19.62px/19.62px 'Liberation Sans', sans-serif;color:#fff;letter-spacing:0.00px;">7.586.217</div>
<div class="abs" style="left:583px;top:1014px;width:47px;height:30px;border-radius:5px;background:#0073b7"></div>
<div class="t" style="left:596.1px;top:1019.9px;font:700 19.62px/19.62px 'Liberation Sans', sans-serif;color:#fff;letter-spacing:0.00px;">11</div>
<div class="abs" style="left:190px;top:1076px;width:460px;height:54px;background:#1a2226"></div>
<div class="t" style="left:201.0px;top:1093.9px;font:400 23.26px/23.26px 'Liberation Sans', sans-serif;color:#8e9ba2;letter-spacing:0.00px;transform:scaleX(0.8541);transform-origin:0 0;">DNS CONTROL</div>
<div class="abs" style="left:232.8px;top:1165px;width:21px;height:20.6px;border-radius:3px;background:#b8c7ce"></div>
<div class="t" style="left:281.0px;top:1161.4px;font:400 29.07px/29.07px 'Liberation Sans', sans-serif;color:#b8c7ce;letter-spacing:0.00px;transform:scaleX(0.8978);transform-origin:0 0;">Disable Blocking</div>
<svg style="left:590px;top:1160px" width="22" height="28" viewBox="0 0 22 28"><path d="M15 5 L7 14 L15 23" fill="none" stroke="#b8c7ce" stroke-width="3.4" stroke-linecap="round" stroke-linejoin="round"/></svg>
<div class="abs" style="left:190px;top:1219px;width:460px;height:55px;background:#1a2226"></div>
<div class="t" style="left:201.0px;top:1235.8px;font:400 23.26px/23.26px 'Liberation Sans', sans-serif;color:#8e9ba2;letter-spacing:0.00px;transform:scaleX(0.8014);transform-origin:0 0;">SYSTEM</div>
<svg style="left:220px;top:1300px" width="46" height="36" viewBox="220 1300 46 36"><path d="M233.50 1304.27 L235.70 1304.27 L236.98 1306.86 L238.38 1307.67 L241.26 1307.49 L242.36 1309.39 L240.76 1311.79 L240.76 1313.41 L242.36 1315.81 L241.26 1317.71 L238.38 1317.53 L236.98 1318.34 L235.70 1320.93 L233.50 1320.93 L232.22 1318.34 L230.82 1317.53 L227.94 1317.71 L226.84 1315.81 L228.44 1313.41 L228.44 1311.79 L226.84 1309.39 L227.94 1307.49 L230.82 1307.67 L232.22 1306.86Z" fill="#b8c7ce" stroke="#b8c7ce" stroke-width="1.6" stroke-linejoin="round"/><circle cx="234.6" cy="1312.6" r="2.4" fill="#222d32"/><path d="M250.04 1313.38 L252.36 1313.38 L253.72 1316.12 L255.21 1316.97 L258.26 1316.78 L259.42 1318.79 L257.73 1321.34 L257.73 1323.06 L259.42 1325.61 L258.26 1327.62 L255.21 1327.43 L253.72 1328.28 L252.36 1331.02 L250.04 1331.02 L248.68 1328.28 L247.19 1327.43 L244.14 1327.62 L242.98 1325.61 L244.67 1323.06 L244.67 1321.34 L242.98 1318.79 L244.14 1316.78 L247.19 1316.97 L248.68 1316.12Z" fill="#b8c7ce" stroke="#b8c7ce" stroke-width="1.6" stroke-linejoin="round"/><circle cx="251.2" cy="1322.2" r="2.4" fill="#222d32"/></svg>
<div class="t" style="left:281.0px;top:1302.9px;font:400 29.07px/29.07px 'Liberation Sans', sans-serif;color:#b8c7ce;letter-spacing:0.00px;transform:scaleX(0.8945);transform-origin:0 0;">Settings</div>
<svg style="left:590px;top:1304px" width="22" height="28" viewBox="0 0 22 28"><path d="M15 5 L7 14 L15 23" fill="none" stroke="#b8c7ce" stroke-width="3.4" stroke-linecap="round" stroke-linejoin="round"/></svg>
<svg style="left:224px;top:1386px" width="40" height="38" viewBox="224 1386 40 38"><path d="M230 1393.5 L232.5 1391 L241 1397.6 V1400 L244.2 1403.2 L240.8 1406.6 L237.6 1403.4 H235.2Z" fill="#b8c7ce"/><path d="M243.2 1408.6 L253.8 1419.2 Q255 1420.4 256.2 1419.2 L257.6 1417.8 Q258.8 1416.6 257.6 1415.4 L247 1404.8Z" fill="#b8c7ce"/><path d="M251.8 1391.2 Q244.5 1391 242.2 1397.4 Q242 1400 243.4 1402 L230.2 1414 Q228.6 1417.5 232.6 1418.8 L245.2 1405.4 Q250 1407.8 254.8 1405 Q257.8 1402.4 257.8 1397.2 L254.2 1400.6 H250.2 V1396.6Z" fill="#b8c7ce"/><circle cx="233.8" cy="1414.5" r="1" fill="#222d32"/></svg>
<div class="t" style="left:281.0px;top:1391.1px;font:400 29.07px/29.07px 'Liberation Sans', sans-serif;color:#b8c7ce;letter-spacing:0.00px;transform:scaleX(0.9060);transform-origin:0 0;">Tools</div>
<svg style="left:590px;top:1392px" width="22" height="28" viewBox="0 0 22 28"><path d="M15 5 L7 14 L15 23" fill="none" stroke="#b8c7ce" stroke-width="3.4" stroke-linecap="round" stroke-linejoin="round"/></svg>
<div class="abs" style="left:190px;top:1450px;width:460px;height:54px;background:#1a2226"></div>
<div class="t" style="left:201.0px;top:1465.3px;font:400 23.26px/23.26px 'Liberation Sans', sans-serif;color:#8e9ba2;letter-spacing:0.00px;transform:scaleX(0.8558);transform-origin:0 0;">DONATE</div>
<svg style="left:224px;top:1528px" width="40" height="36" viewBox="224 1528 40 36"><path d="M231.6 1552.4 H235 L238 1556.8 H249 L252 1552.4 H255.6 Q257.4 1552.4 257.4 1554.2 V1558.8 Q257.4 1560.6 255.6 1560.6 H231.6 Q229.8 1560.6 229.8 1558.8 V1554.2 Q229.8 1552.4 231.6 1552.4Z" fill="#b8c7ce"/><circle cx="243.4" cy="1544" r="11.6" fill="#b8c7ce"/><text x="243.4" y="1549.6" font-family="Liberation Sans" font-weight="700" font-size="14" text-anchor="middle" fill="#222d32">$</text></svg>
<div class="t" style="left:281.0px;top:1533.4px;font:400 29.07px/29.07px 'Liberation Sans', sans-serif;color:#b8c7ce;letter-spacing:0.00px;transform:scaleX(0.8853);transform-origin:0 0;">Donate</div>
<div class="abs" style="left:680px;top:258px;width:450px;height:228px;border-radius:12px;background:#00c0ef;overflow:hidden;box-shadow:0 1px 2px rgba(0,0,0,.12)"><div class="abs" style="left:0;top:176px;width:450px;height:52px;background:rgba(0,0,0,.1)"></div></div>
<svg style="left:955px;top:265px" width="160" height="160" viewBox="955 265 160 160"><circle cx="1034" cy="344" r="76" fill="rgba(0,0,0,.15)"/><path d="M1036.2 282.4 Q1038 288 1033.5 294 Q1028 300 1030.5 305.3 Q1033 310 1036.2 316 Q1038 322.5 1031 323.5 Q1026 324 1021 322.6 Q1013 322 1010.5 329 Q1010 335 1015.3 337.7 Q1022 342 1028.6 343.5 Q1040 345.5 1049.6 345.4 Q1060 347 1062 358.7 Q1062 368 1059.1 372.1 Q1054 378 1045.8 381.6 Q1042 386 1041 395 Q1037 401 1030.5 400.7 Q1025 399 1024.8 393 Q1024.5 386 1023.8 379.7 Q1022 375 1015.3 372.1 Q1012.5 366 1013.3 356 Q1013.3 348 1008 345 Q1003.8 343.5 995 341 Q983 338 977.5 332 Q975.2 328 975.5 326 Q982 306 998 293 Q1012 284 1036.2 282.4Z" fill="#00c0ef"/><path d="M1087.7 313.9 Q1095.5 330 1095.4 352 Q1086 350 1082 348.2 Q1078 338 1075 328 Q1075 322 1080 318.7Z" fill="#00c0ef"/></svg>
<div class="t" style="left:700.5px;top:284.5px;font:400 30.52px/30.52px 'Liberation Sans', sans-serif;color:#fff;letter-spacing:0.00px;transform:scaleX(0.9245);transform-origin:0 0;">Total queries</div>
<div class="t" style="left:703.0px;top:338.4px;font:700 73.55px/73.55px 'Liberation Sans', sans-serif;color:#fff;letter-spacing:0.00px;transform:scaleX(0.9800);transform-origin:0 0;">110.869</div>
<div class="t" style="left:879.2px;top:446.9px;font:400 26.89px/26.89px 'Liberation Sans', sans-serif;color:rgba(255,255,255,.8);letter-spacing:0.00px;transform:scaleX(0.9659);transform-origin:0 0;">32 active clients</div>
<svg style="left:1079px;top:447px" width="28" height="28" viewBox="1079 447 28 28"><circle cx="1093" cy="461" r="12.8" fill="rgba(255,255,255,.8)"/><path d="M1086.5 461 H1098.5 M1093.5 455.5 L1099 461 L1093.5 466.5" fill="none" stroke="#00c0ef" stroke-width="2.8" stroke-linecap="round" stroke-linejoin="round"/></svg>
<div class="abs" style="left:1190px;top:258px;width:450px;height:228px;border-radius:12px;background:#dd4b39;overflow:hidden;box-shadow:0 1px 2px rgba(0,0,0,.12)"><div class="abs" style="left:0;top:176px;width:450px;height:52px;background:rgba(0,0,0,.1)"></div></div>
<svg style="left:1460px;top:262px" width="160" height="165" viewBox="1460 262 160 165"><g fill="#000" opacity="0.15"><rect x="1505.7" y="277.7" width="19.2" height="80" rx="9.6"/><rect x="1534.2" y="267.9" width="19.2" height="80" rx="9.6"/><rect x="1563.2" y="277.7" width="19" height="80" rx="9.5"/><rect x="1591.8" y="296.8" width="18.3" height="70" rx="9.15"/><path d="M1505.7 342 H1610.1 V370 Q1610.1 419.6 1560 419.6 H1545 Q1525 419.6 1510 404 L1471 365 Q1464 357.5 1471 350.5 Q1478 343.5 1485 350.5 L1505.7 371Z"/></g></svg>
<div class="t" style="left:1210.5px;top:284.5px;font:400 30.52px/30.52px 'Liberation Sans', sans-serif;color:#fff;letter-spacing:0.00px;transform:scaleX(0.9000);transform-origin:0 0;">Queries Blocked</div>
<div class="t" style="left:1213.0px;top:338.4px;font:700 73.55px/73.55px 'Liberation Sans', sans-serif;color:#fff;letter-spacing:0.00px;transform:scaleX(0.9753);transform-origin:0 0;">21.645</div>
<div class="t" style="left:1343.0px;top:446.9px;font:400 26.89px/26.89px 'Liberation Sans', sans-serif;color:rgba(255,255,255,.8);letter-spacing:-0.35px;">List blocked queries</div>
<svg style="left:1589px;top:447px" width="28" height="28" viewBox="1589 447 28 28"><circle cx="1603" cy="461" r="12.8" fill="rgba(255,255,255,.8)"/><path d="M1596.5 461 H1608.5 M1603.5 455.5 L1609 461 L1603.5 466.5" fill="none" stroke="#dd4b39" stroke-width="2.8" stroke-linecap="round" stroke-linejoin="round"/></svg>
<div class="abs" style="left:1700px;top:258px;width:450px;height:228px;border-radius:12px;background:#f39c12;overflow:hidden;box-shadow:0 1px 2px rgba(0,0,0,.12)"><div class="abs" style="left:0;top:176px;width:450px;height:52px;background:rgba(0,0,0,.1)"></div></div>
<svg style="left:1960px;top:262px" width="175" height="165" viewBox="1960 262 175 165"><g fill="#000" opacity="0.15"><path d="M2034.8 279.6 V353.5 L2084 402.7 A70 70 0 1 1 2034.8 279.6Z"/><path d="M2049.2 338.9 V267.9 A71 71 0 0 1 2120.2 338.9Z"/><path d="M2054.6 353.9 H2128.6 A74 74 0 0 1 2105.5 407.2Z"/></g></svg>
<div class="t" style="left:1720.5px;top:284.5px;font:400 30.52px/30.52px 'Liberation Sans', sans-serif;color:#fff;letter-spacing:0.00px;transform:scaleX(0.8968);transform-origin:0 0;">Percentage Blocked</div>
<div class="t" style="left:1723.0px;top:338.4px;font:700 73.55px/73.55px 'Liberation Sans', sans-serif;color:#fff;letter-spacing:0.00px;transform:scaleX(0.9603);transform-origin:0 0;">19,5 %</div>
<div class="t" style="left:1917.6px;top:446.9px;font:400 26.89px/26.89px 'Liberation Sans', sans-serif;color:rgba(255,255,255,.8);letter-spacing:0.00px;transform:scaleX(0.9684);transform-origin:0 0;">List all queries</div>
<svg style="left:2099px;top:447px" width="28" height="28" viewBox="2099 447 28 28"><circle cx="2113" cy="461" r="12.8" fill="rgba(255,255,255,.8)"/><path d="M2106.5 461 H2118.5 M2113.5 455.5 L2119 461 L2113.5 466.5" fill="none" stroke="#f39c12" stroke-width="2.8" stroke-linecap="round" stroke-linejoin="round"/></svg>
<div class="abs" style="left:2210px;top:258px;width:450px;height:228px;border-radius:12px;background:#00a65a;overflow:hidden;box-shadow:0 1px 2px rgba(0,0,0,.12)"><div class="abs" style="left:0;top:176px;width:450px;height:52px;background:rgba(0,0,0,.1)"></div></div>
<svg style="left:2465px;top:272px" width="180" height="142" viewBox="2465 272 180 142"><rect x="2469.4" y="277.3" width="170.2" height="132.5" rx="20" fill="rgba(0,0,0,.15)"/><g fill="#00a65a"><circle cx="2506.7" cy="315.4" r="9"/><circle cx="2506.7" cy="343.5" r="9"/><circle cx="2506.7" cy="371.7" r="9"/><rect x="2528.6" y="308.4" width="80.8" height="14" rx="7"/><rect x="2528.6" y="336.5" width="80.8" height="14" rx="7"/><rect x="2528.6" y="364.7" width="80.8" height="14" rx="7"/></g></svg>
<div class="t" style="left:2230.5px;top:284.5px;font:400 30.52px/30.52px 'Liberation Sans', sans-serif;color:#fff;letter-spacing:0.00px;transform:scaleX(0.8983);transform-origin:0 0;">Domains on Lists</div>
<div class="t" style="left:2233.0px;top:338.4px;font:700 73.55px/73.55px 'Liberation Sans', sans-serif;color:#fff;letter-spacing:0.00px;transform:scaleX(0.9829);transform-origin:0 0;">7.586.217</div>
<div class="t" style="left:2452.4px;top:446.9px;font:400 26.89px/26.89px 'Liberation Sans', sans-serif;color:rgba(255,255,255,.8);letter-spacing:0.00px;transform:scaleX(0.9378);transform-origin:0 0;">Manage lists</div>
<svg style="left:2609px;top:447px" width="28" height="28" viewBox="2609 447 28 28"><circle cx="2623" cy="461" r="12.8" fill="rgba(255,255,255,.8)"/><path d="M2616.5 461 H2628.5 M2623.5 455.5 L2629 461 L2623.5 466.5" fill="none" stroke="#00a65a" stroke-width="2.8" stroke-linecap="round" stroke-linejoin="round"/></svg>
<div class="abs" style="left:680px;top:526px;width:1980px;height:489px;border-radius:10px;background:#fff;border-top:6px solid #d2d6de;box-shadow:0 1px 2px rgba(0,0,0,.1)"></div>
<div class="abs" style="left:680px;top:613px;width:1980px;height:2px;background:#f4f4f4"></div>
<div class="t" style="left:701.0px;top:552.9px;font:400 35.61px/35.61px 'Liberation Sans', sans-serif;color:#444;letter-spacing:0.00px;transform:scaleX(0.9509);transform-origin:0 0;">Total queries</div>
<svg style="left:2611px;top:557px" width="30" height="30" viewBox="2611 557 30 30"><circle cx="2626" cy="572" r="13.9" fill="#444"/><circle cx="2626" cy="566.5" r="1.9" fill="#fff"/><path d="M2623 570.2 H2627.8 V577.8 H2629.5 V579.4 H2622.5 V577.8 H2624.4 V571.8 H2623Z" fill="#fff"/></svg>
<div class="abs" style="left:680px;top:1055px;width:1980px;height:489px;border-radius:10px;background:#fff;border-top:6px solid #d2d6de;box-shadow:0 1px 2px rgba(0,0,0,.1)"></div>
<div class="abs" style="left:680px;top:1142px;width:1980px;height:2px;background:#f4f4f4"></div>
<div class="t" style="left:701.0px;top:1082.1px;font:400 35.61px/35.61px 'Liberation Sans', sans-serif;color:#444;letter-spacing:-0.44px;">Client activity</div>
<svg style="left:2611px;top:1086px" width="30" height="30" viewBox="2611 1086 30 30"><circle cx="2626" cy="1101" r="13.9" fill="#444"/><circle cx="2626" cy="1095.5" r="1.9" fill="#fff"/><path d="M2623 1099.2 H2627.8 V1106.8 H2629.5 V1108.4 H2622.5 V1106.8 H2624.4 V1100.8 H2623Z" fill="#fff"/></svg>
<div class="abs" style="left:680px;top:1584px;width:960px;height:300px;border-radius:10px;background:#fff;border-top:6px solid #d2d6de;box-shadow:0 1px 2px rgba(0,0,0,.1)"></div>
<div class="abs" style="left:680px;top:1671px;width:960px;height:2px;background:#f4f4f4"></div>
<div class="t" style="left:701.0px;top:1610.6px;font:400 35.61px/35.61px 'Liberation Sans', sans-serif;color:#444;letter-spacing:0.00px;transform:scaleX(0.9195);transform-origin:0 0;">Query Types</div>
<div class="abs" style="left:1700px;top:1584px;width:960px;height:300px;border-radius:10px;background:#fff;border-top:6px solid #d2d6de;box-shadow:0 1px 2px rgba(0,0,0,.1)"></div>
<div class="abs" style="left:1700px;top:1671px;width:960px;height:2px;background:#f4f4f4"></div>
<div class="t" style="left:1721.0px;top:1611.6px;font:400 35.61px/35.61px 'Liberation Sans', sans-serif;color:#444;letter-spacing:0.00px;transform:scaleX(0.9289);transform-origin:0 0;">Upstream servers</div>
<div class="abs" style="left:1337px;top:1717px;width:26px;height:26px;border-radius:4px;background:#f26550"></div>
<svg style="left:1337px;top:1717px" width="26" height="26" viewBox="0 0 26 26"><path d="M7 12.5 L11 16.5 L18.5 9" fill="none" stroke="#fff" stroke-width="2.6" stroke-linecap="round" stroke-linejoin="round"/></svg>
<div class="t" style="left:1383.1px;top:1717.8px;font:400 26.89px/26.89px 'Liberation Sans', sans-serif;color:#333;letter-spacing:0.00px;">A</div>
<svg style="left:0;top:0" width="2880" height="1750" viewBox="0 0 2880 1750">
<rect x="772" y="936.50" width="1864" height="2" fill="#e5e5e5"/>
<rect x="772" y="873.75" width="1864" height="2" fill="#e5e5e5"/>
<rect x="772" y="811.00" width="1864" height="2" fill="#e5e5e5"/>
<rect x="772" y="748.25" width="1864" height="2" fill="#e5e5e5"/>
<rect x="772" y="685.50" width="1864" height="2" fill="#e5e5e5"/>
<rect x="832.00" y="655" width="2" height="299" fill="#e5e5e5"/>
<rect x="908.97" y="655" width="2" height="299" fill="#e5e5e5"/>
<rect x="985.94" y="655" width="2" height="299" fill="#e5e5e5"/>
<rect x="1062.91" y="655" width="2" height="299" fill="#e5e5e5"/>
<rect x="1139.88" y="655" width="2" height="299" fill="#e5e5e5"/>
<rect x="1216.85" y="655" width="2" height="299" fill="#e5e5e5"/>
<rect x="1293.82" y="655" width="2" height="299" fill="#e5e5e5"/>
<rect x="1370.79" y="655" width="2" height="299" fill="#e5e5e5"/>
<rect x="1447.76" y="655" width="2" height="299" fill="#e5e5e5"/>
<rect x="1524.73" y="655" width="2" height="299" fill="#e5e5e5"/>
<rect x="1601.70" y="655" width="2" height="299" fill="#e5e5e5"/>
<rect x="1678.67" y="655" width="2" height="299" fill="#e5e5e5"/>
<rect x="1755.64" y="655" width="2" height="299" fill="#e5e5e5"/>
<rect x="1832.61" y="655" width="2" height="299" fill="#e5e5e5"/>
<rect x="1909.58" y="655" width="2" height="299" fill="#e5e5e5"/>
<rect x="1986.55" y="655" width="2" height="299" fill="#e5e5e5"/>
<rect x="2063.52" y="655" width="2" height="299" fill="#e5e5e5"/>
<rect x="2140.49" y="655" width="2" height="299" fill="#e5e5e5"/>
<rect x="2217.46" y="655" width="2" height="299" fill="#e5e5e5"/>
<rect x="2294.43" y="655" width="2" height="299" fill="#e5e5e5"/>
<rect x="2371.40" y="655" width="2" height="299" fill="#e5e5e5"/>
<rect x="2448.37" y="655" width="2" height="299" fill="#e5e5e5"/>
<rect x="2525.34" y="655" width="2" height="299" fill="#e5e5e5"/>
<rect x="2602.31" y="655" width="2" height="299" fill="#e5e5e5"/>
<clipPath id="cp1"><rect x="788" y="600" width="1848" height="340"/></clipPath><g clip-path="url(#cp1)">
<rect x="783.38" y="839.17" width="9.24" height="49.86" fill="#00a65a"/>
<rect x="783.38" y="889.03" width="9.24" height="42.76" fill="#9bb9ec"/>
<rect x="783.38" y="931.79" width="9.24" height="5.71" fill="#aa0000"/>
<rect x="796.22" y="816.51" width="9.24" height="32.12" fill="#00a65a"/>
<rect x="796.22" y="848.63" width="9.24" height="81.19" fill="#9bb9ec"/>
<rect x="796.22" y="929.82" width="9.24" height="7.68" fill="#aa0000"/>
<rect x="809.05" y="874.64" width="9.24" height="18.72" fill="#00a65a"/>
<rect x="809.05" y="893.37" width="9.24" height="34.88" fill="#9bb9ec"/>
<rect x="809.05" y="928.24" width="9.24" height="9.26" fill="#aa0000"/>
<rect x="821.88" y="822.03" width="9.24" height="36.85" fill="#00a65a"/>
<rect x="821.88" y="858.88" width="9.24" height="50.25" fill="#9bb9ec"/>
<rect x="821.88" y="909.13" width="9.24" height="28.37" fill="#aa0000"/>
<rect x="834.72" y="847.06" width="9.24" height="38.82" fill="#00a65a"/>
<rect x="834.72" y="885.88" width="9.24" height="38.03" fill="#9bb9ec"/>
<rect x="834.72" y="923.91" width="9.24" height="13.59" fill="#aa0000"/>
<rect x="847.55" y="834.64" width="9.24" height="29.16" fill="#00a65a"/>
<rect x="847.55" y="863.81" width="9.24" height="52.22" fill="#9bb9ec"/>
<rect x="847.55" y="916.03" width="9.24" height="21.47" fill="#aa0000"/>
<rect x="860.39" y="761.93" width="9.24" height="68.97" fill="#00a65a"/>
<rect x="860.39" y="830.90" width="9.24" height="83.16" fill="#9bb9ec"/>
<rect x="860.39" y="914.06" width="9.24" height="23.44" fill="#aa0000"/>
<rect x="873.23" y="785.97" width="9.24" height="48.87" fill="#00a65a"/>
<rect x="873.23" y="834.84" width="9.24" height="79.81" fill="#9bb9ec"/>
<rect x="873.23" y="914.65" width="9.24" height="22.85" fill="#aa0000"/>
<rect x="886.06" y="847.06" width="9.24" height="18.72" fill="#00a65a"/>
<rect x="886.06" y="865.78" width="9.24" height="53.01" fill="#9bb9ec"/>
<rect x="886.06" y="918.79" width="9.24" height="18.71" fill="#aa0000"/>
<rect x="898.89" y="828.93" width="9.24" height="27.00" fill="#00a65a"/>
<rect x="898.89" y="855.92" width="9.24" height="66.21" fill="#9bb9ec"/>
<rect x="898.89" y="922.14" width="9.24" height="15.36" fill="#aa0000"/>
<rect x="911.73" y="761.34" width="9.24" height="27.59" fill="#00a65a"/>
<rect x="911.73" y="788.93" width="9.24" height="109.76" fill="#9bb9ec"/>
<rect x="911.73" y="898.69" width="9.24" height="38.81" fill="#aa0000"/>
<rect x="924.56" y="802.13" width="9.24" height="24.83" fill="#00a65a"/>
<rect x="924.56" y="826.96" width="9.24" height="75.28" fill="#9bb9ec"/>
<rect x="924.56" y="902.23" width="9.24" height="35.27" fill="#aa0000"/>
<rect x="937.40" y="857.30" width="9.24" height="16.75" fill="#00a65a"/>
<rect x="937.40" y="874.05" width="9.24" height="45.91" fill="#9bb9ec"/>
<rect x="937.40" y="919.97" width="9.24" height="17.53" fill="#aa0000"/>
<rect x="950.24" y="862.82" width="9.24" height="15.37" fill="#00a65a"/>
<rect x="950.24" y="878.19" width="9.24" height="50.84" fill="#9bb9ec"/>
<rect x="950.24" y="929.03" width="9.24" height="8.47" fill="#aa0000"/>
<rect x="963.07" y="813.16" width="9.24" height="23.06" fill="#00a65a"/>
<rect x="963.07" y="836.22" width="9.24" height="84.73" fill="#9bb9ec"/>
<rect x="963.07" y="920.95" width="9.24" height="16.55" fill="#aa0000"/>
<rect x="975.90" y="806.27" width="9.24" height="51.63" fill="#00a65a"/>
<rect x="975.90" y="857.90" width="9.24" height="62.07" fill="#9bb9ec"/>
<rect x="975.90" y="919.97" width="9.24" height="17.53" fill="#aa0000"/>
<rect x="988.74" y="696.90" width="9.24" height="83.16" fill="#00a65a"/>
<rect x="988.74" y="780.06" width="9.24" height="133.01" fill="#9bb9ec"/>
<rect x="988.74" y="913.07" width="9.24" height="24.43" fill="#aa0000"/>
<rect x="1001.58" y="684.88" width="9.24" height="67.98" fill="#00a65a"/>
<rect x="1001.58" y="752.86" width="9.24" height="150.55" fill="#9bb9ec"/>
<rect x="1001.58" y="903.42" width="9.24" height="34.08" fill="#aa0000"/>
<rect x="1014.41" y="816.91" width="9.24" height="33.50" fill="#00a65a"/>
<rect x="1014.41" y="850.41" width="9.24" height="76.06" fill="#9bb9ec"/>
<rect x="1014.41" y="926.47" width="9.24" height="11.03" fill="#aa0000"/>
<rect x="1027.25" y="810.01" width="9.24" height="30.74" fill="#00a65a"/>
<rect x="1027.25" y="840.75" width="9.24" height="80.79" fill="#9bb9ec"/>
<rect x="1027.25" y="921.54" width="9.24" height="15.96" fill="#aa0000"/>
<rect x="1040.08" y="713.65" width="9.24" height="78.82" fill="#00a65a"/>
<rect x="1040.08" y="792.47" width="9.24" height="112.13" fill="#9bb9ec"/>
<rect x="1040.08" y="904.60" width="9.24" height="32.90" fill="#aa0000"/>
<rect x="1052.92" y="761.34" width="9.24" height="52.22" fill="#00a65a"/>
<rect x="1052.92" y="813.56" width="9.24" height="103.06" fill="#9bb9ec"/>
<rect x="1052.92" y="916.62" width="9.24" height="20.88" fill="#aa0000"/>
<rect x="1065.75" y="781.04" width="9.24" height="33.89" fill="#00a65a"/>
<rect x="1065.75" y="814.94" width="9.24" height="99.12" fill="#9bb9ec"/>
<rect x="1065.75" y="914.06" width="9.24" height="23.44" fill="#aa0000"/>
<rect x="1078.59" y="802.72" width="9.24" height="58.13" fill="#00a65a"/>
<rect x="1078.59" y="860.85" width="9.24" height="52.22" fill="#9bb9ec"/>
<rect x="1078.59" y="913.07" width="9.24" height="24.43" fill="#aa0000"/>
<rect x="1091.42" y="851.00" width="9.24" height="34.09" fill="#00a65a"/>
<rect x="1091.42" y="885.09" width="9.24" height="38.82" fill="#9bb9ec"/>
<rect x="1091.42" y="923.91" width="9.24" height="13.59" fill="#aa0000"/>
<rect x="1104.26" y="755.43" width="9.24" height="82.76" fill="#00a65a"/>
<rect x="1104.26" y="838.19" width="9.24" height="66.41" fill="#9bb9ec"/>
<rect x="1104.26" y="904.60" width="9.24" height="32.90" fill="#aa0000"/>
<rect x="1117.09" y="846.66" width="9.24" height="62.47" fill="#00a65a"/>
<rect x="1117.09" y="909.13" width="9.24" height="27.59" fill="#9bb9ec"/>
<rect x="1117.09" y="936.72" width="9.24" height="0.78" fill="#aa0000"/>
<rect x="1129.93" y="868.34" width="9.24" height="21.68" fill="#00a65a"/>
<rect x="1129.93" y="890.02" width="9.24" height="47.29" fill="#9bb9ec"/>
<rect x="1142.76" y="868.34" width="9.24" height="19.71" fill="#00a65a"/>
<rect x="1142.76" y="888.04" width="9.24" height="49.46" fill="#9bb9ec"/>
<rect x="1155.60" y="894.74" width="9.24" height="10.44" fill="#00a65a"/>
<rect x="1155.60" y="905.19" width="9.24" height="32.31" fill="#9bb9ec"/>
<rect x="1168.43" y="898.29" width="9.24" height="8.87" fill="#00a65a"/>
<rect x="1168.43" y="907.16" width="9.24" height="30.34" fill="#9bb9ec"/>
<rect x="1181.27" y="895.34" width="9.24" height="12.81" fill="#00a65a"/>
<rect x="1181.27" y="908.14" width="9.24" height="29.36" fill="#9bb9ec"/>
<rect x="1194.10" y="904.79" width="9.24" height="16.16" fill="#00a65a"/>
<rect x="1194.10" y="920.95" width="9.24" height="13.79" fill="#9bb9ec"/>
<rect x="1194.10" y="934.75" width="9.24" height="2.75" fill="#aa0000"/>
<rect x="1206.94" y="901.25" width="9.24" height="8.87" fill="#00a65a"/>
<rect x="1206.94" y="910.12" width="9.24" height="20.30" fill="#9bb9ec"/>
<rect x="1206.94" y="930.41" width="9.24" height="7.09" fill="#aa0000"/>
<rect x="1219.77" y="899.28" width="9.24" height="11.43" fill="#00a65a"/>
<rect x="1219.77" y="910.71" width="9.24" height="19.11" fill="#9bb9ec"/>
<rect x="1219.77" y="929.82" width="9.24" height="7.68" fill="#aa0000"/>
<rect x="1232.61" y="882.13" width="9.24" height="13.79" fill="#00a65a"/>
<rect x="1232.61" y="895.93" width="9.24" height="30.35" fill="#9bb9ec"/>
<rect x="1232.61" y="926.27" width="9.24" height="11.23" fill="#aa0000"/>
<rect x="1245.44" y="855.92" width="9.24" height="26.60" fill="#00a65a"/>
<rect x="1245.44" y="882.53" width="9.24" height="39.81" fill="#9bb9ec"/>
<rect x="1245.44" y="922.33" width="9.24" height="15.17" fill="#aa0000"/>
<rect x="1258.28" y="861.84" width="9.24" height="23.25" fill="#00a65a"/>
<rect x="1258.28" y="885.09" width="9.24" height="38.43" fill="#9bb9ec"/>
<rect x="1258.28" y="923.52" width="9.24" height="13.98" fill="#aa0000"/>
<rect x="1271.11" y="675.22" width="9.24" height="96.95" fill="#00a65a"/>
<rect x="1271.11" y="772.18" width="9.24" height="135.58" fill="#9bb9ec"/>
<rect x="1271.11" y="907.75" width="9.24" height="29.75" fill="#aa0000"/>
<rect x="1283.95" y="839.57" width="9.24" height="16.75" fill="#00a65a"/>
<rect x="1283.95" y="856.32" width="9.24" height="62.66" fill="#9bb9ec"/>
<rect x="1283.95" y="918.98" width="9.24" height="18.52" fill="#aa0000"/>
<rect x="1296.78" y="877.99" width="9.24" height="13.99" fill="#00a65a"/>
<rect x="1296.78" y="891.99" width="9.24" height="34.48" fill="#9bb9ec"/>
<rect x="1296.78" y="926.47" width="9.24" height="11.03" fill="#aa0000"/>
<rect x="1309.62" y="897.90" width="9.24" height="3.35" fill="#00a65a"/>
<rect x="1309.62" y="901.25" width="9.24" height="27.59" fill="#9bb9ec"/>
<rect x="1309.62" y="928.84" width="9.24" height="8.66" fill="#aa0000"/>
<rect x="1322.45" y="897.90" width="9.24" height="7.29" fill="#00a65a"/>
<rect x="1322.45" y="905.19" width="9.24" height="23.06" fill="#9bb9ec"/>
<rect x="1322.45" y="928.24" width="9.24" height="9.26" fill="#aa0000"/>
<rect x="1335.29" y="855.92" width="9.24" height="14.19" fill="#00a65a"/>
<rect x="1335.29" y="870.11" width="9.24" height="41.97" fill="#9bb9ec"/>
<rect x="1335.29" y="912.09" width="9.24" height="25.41" fill="#aa0000"/>
<rect x="1348.12" y="855.92" width="9.24" height="15.76" fill="#00a65a"/>
<rect x="1348.12" y="871.69" width="9.24" height="43.35" fill="#9bb9ec"/>
<rect x="1348.12" y="915.04" width="9.24" height="22.46" fill="#aa0000"/>
<rect x="1360.96" y="869.13" width="9.24" height="13.01" fill="#00a65a"/>
<rect x="1360.96" y="882.13" width="9.24" height="35.47" fill="#9bb9ec"/>
<rect x="1360.96" y="917.60" width="9.24" height="19.90" fill="#aa0000"/>
<rect x="1373.79" y="867.16" width="9.24" height="17.93" fill="#00a65a"/>
<rect x="1373.79" y="885.09" width="9.24" height="41.18" fill="#9bb9ec"/>
<rect x="1373.79" y="926.27" width="9.24" height="11.23" fill="#aa0000"/>
<rect x="1386.62" y="884.10" width="9.24" height="9.85" fill="#00a65a"/>
<rect x="1386.62" y="893.96" width="9.24" height="32.32" fill="#9bb9ec"/>
<rect x="1386.62" y="926.27" width="9.24" height="11.23" fill="#aa0000"/>
<rect x="1399.46" y="845.48" width="9.24" height="34.09" fill="#00a65a"/>
<rect x="1399.46" y="879.57" width="9.24" height="40.40" fill="#9bb9ec"/>
<rect x="1399.46" y="919.97" width="9.24" height="17.53" fill="#aa0000"/>
<rect x="1412.30" y="866.76" width="9.24" height="17.74" fill="#00a65a"/>
<rect x="1412.30" y="884.50" width="9.24" height="35.86" fill="#9bb9ec"/>
<rect x="1412.30" y="920.36" width="9.24" height="17.14" fill="#aa0000"/>
<rect x="1425.13" y="814.94" width="9.24" height="20.89" fill="#00a65a"/>
<rect x="1425.13" y="835.82" width="9.24" height="67.39" fill="#9bb9ec"/>
<rect x="1425.13" y="903.22" width="9.24" height="34.28" fill="#aa0000"/>
<rect x="1437.97" y="828.93" width="9.24" height="14.58" fill="#00a65a"/>
<rect x="1437.97" y="843.51" width="9.24" height="62.27" fill="#9bb9ec"/>
<rect x="1437.97" y="905.78" width="9.24" height="31.72" fill="#aa0000"/>
<rect x="1450.80" y="821.05" width="9.24" height="30.94" fill="#00a65a"/>
<rect x="1450.80" y="851.98" width="9.24" height="69.96" fill="#9bb9ec"/>
<rect x="1450.80" y="921.94" width="9.24" height="15.56" fill="#aa0000"/>
<rect x="1463.64" y="884.89" width="9.24" height="17.93" fill="#00a65a"/>
<rect x="1463.64" y="902.82" width="9.24" height="26.60" fill="#9bb9ec"/>
<rect x="1463.64" y="929.43" width="9.24" height="8.07" fill="#aa0000"/>
<rect x="1476.47" y="901.25" width="9.24" height="8.87" fill="#00a65a"/>
<rect x="1476.47" y="910.12" width="9.24" height="24.04" fill="#9bb9ec"/>
<rect x="1476.47" y="934.16" width="9.24" height="3.34" fill="#aa0000"/>
<rect x="1489.31" y="863.22" width="9.24" height="24.83" fill="#00a65a"/>
<rect x="1489.31" y="888.04" width="9.24" height="41.78" fill="#9bb9ec"/>
<rect x="1489.31" y="929.82" width="9.24" height="7.68" fill="#aa0000"/>
<rect x="1502.14" y="908.14" width="9.24" height="7.88" fill="#00a65a"/>
<rect x="1502.14" y="916.03" width="9.24" height="14.19" fill="#9bb9ec"/>
<rect x="1502.14" y="930.21" width="9.24" height="7.29" fill="#aa0000"/>
<rect x="1514.98" y="889.03" width="9.24" height="12.22" fill="#00a65a"/>
<rect x="1514.98" y="901.25" width="9.24" height="29.56" fill="#9bb9ec"/>
<rect x="1514.98" y="930.81" width="9.24" height="6.69" fill="#aa0000"/>
<rect x="1527.81" y="887.45" width="9.24" height="15.37" fill="#00a65a"/>
<rect x="1527.81" y="902.82" width="9.24" height="29.95" fill="#9bb9ec"/>
<rect x="1527.81" y="932.78" width="9.24" height="4.72" fill="#aa0000"/>
<rect x="1540.65" y="889.42" width="9.24" height="11.23" fill="#00a65a"/>
<rect x="1540.65" y="900.66" width="9.24" height="27.19" fill="#9bb9ec"/>
<rect x="1540.65" y="927.85" width="9.24" height="9.65" fill="#aa0000"/>
<rect x="1553.48" y="890.02" width="9.24" height="13.60" fill="#00a65a"/>
<rect x="1553.48" y="903.61" width="9.24" height="27.19" fill="#9bb9ec"/>
<rect x="1553.48" y="930.81" width="9.24" height="6.69" fill="#aa0000"/>
<rect x="1566.32" y="881.15" width="9.24" height="14.78" fill="#00a65a"/>
<rect x="1566.32" y="895.93" width="9.24" height="32.51" fill="#9bb9ec"/>
<rect x="1566.32" y="928.44" width="9.24" height="9.06" fill="#aa0000"/>
<rect x="1579.15" y="882.53" width="9.24" height="19.31" fill="#00a65a"/>
<rect x="1579.15" y="901.84" width="9.24" height="26.01" fill="#9bb9ec"/>
<rect x="1579.15" y="927.85" width="9.24" height="9.65" fill="#aa0000"/>
<rect x="1591.99" y="850.60" width="9.24" height="30.54" fill="#00a65a"/>
<rect x="1591.99" y="881.15" width="9.24" height="42.76" fill="#9bb9ec"/>
<rect x="1591.99" y="923.91" width="9.24" height="13.59" fill="#aa0000"/>
<rect x="1604.82" y="802.33" width="9.24" height="34.88" fill="#00a65a"/>
<rect x="1604.82" y="837.20" width="9.24" height="62.47" fill="#9bb9ec"/>
<rect x="1604.82" y="899.67" width="9.24" height="37.83" fill="#aa0000"/>
<rect x="1617.66" y="834.25" width="9.24" height="22.66" fill="#00a65a"/>
<rect x="1617.66" y="856.91" width="9.24" height="50.25" fill="#9bb9ec"/>
<rect x="1617.66" y="907.16" width="9.24" height="30.34" fill="#aa0000"/>
<rect x="1630.49" y="867.75" width="9.24" height="11.82" fill="#00a65a"/>
<rect x="1630.49" y="879.57" width="9.24" height="46.70" fill="#9bb9ec"/>
<rect x="1630.49" y="926.27" width="9.24" height="11.23" fill="#aa0000"/>
<rect x="1643.33" y="897.90" width="9.24" height="12.22" fill="#00a65a"/>
<rect x="1643.33" y="910.12" width="9.24" height="20.69" fill="#9bb9ec"/>
<rect x="1643.33" y="930.81" width="9.24" height="6.69" fill="#aa0000"/>
<rect x="1656.16" y="896.32" width="9.24" height="10.84" fill="#00a65a"/>
<rect x="1656.16" y="907.16" width="9.24" height="23.06" fill="#9bb9ec"/>
<rect x="1656.16" y="930.21" width="9.24" height="7.29" fill="#aa0000"/>
<rect x="1669.00" y="872.08" width="9.24" height="14.39" fill="#00a65a"/>
<rect x="1669.00" y="886.47" width="9.24" height="40.40" fill="#9bb9ec"/>
<rect x="1669.00" y="926.87" width="9.24" height="10.63" fill="#aa0000"/>
<rect x="1681.83" y="876.62" width="9.24" height="12.41" fill="#00a65a"/>
<rect x="1681.83" y="889.03" width="9.24" height="40.40" fill="#9bb9ec"/>
<rect x="1681.83" y="929.43" width="9.24" height="8.07" fill="#aa0000"/>
<rect x="1694.67" y="884.10" width="9.24" height="8.87" fill="#00a65a"/>
<rect x="1694.67" y="892.97" width="9.24" height="30.54" fill="#9bb9ec"/>
<rect x="1694.67" y="923.52" width="9.24" height="13.98" fill="#aa0000"/>
<rect x="1707.50" y="856.52" width="9.24" height="25.62" fill="#00a65a"/>
<rect x="1707.50" y="882.13" width="9.24" height="43.75" fill="#9bb9ec"/>
<rect x="1707.50" y="925.88" width="9.24" height="11.62" fill="#aa0000"/>
<rect x="1720.34" y="783.60" width="9.24" height="67.39" fill="#00a65a"/>
<rect x="1720.34" y="851.00" width="9.24" height="70.55" fill="#9bb9ec"/>
<rect x="1720.34" y="921.54" width="9.24" height="15.96" fill="#aa0000"/>
<rect x="1733.17" y="814.54" width="9.24" height="18.33" fill="#00a65a"/>
<rect x="1733.17" y="832.87" width="9.24" height="92.62" fill="#9bb9ec"/>
<rect x="1733.17" y="925.49" width="9.24" height="12.01" fill="#aa0000"/>
<rect x="1746.01" y="799.76" width="9.24" height="23.25" fill="#00a65a"/>
<rect x="1746.01" y="823.02" width="9.24" height="103.85" fill="#9bb9ec"/>
<rect x="1746.01" y="926.87" width="9.24" height="10.63" fill="#aa0000"/>
<rect x="1758.84" y="780.65" width="9.24" height="57.15" fill="#00a65a"/>
<rect x="1758.84" y="837.80" width="9.24" height="83.16" fill="#9bb9ec"/>
<rect x="1758.84" y="920.95" width="9.24" height="16.55" fill="#aa0000"/>
<rect x="1771.68" y="747.54" width="9.24" height="60.10" fill="#00a65a"/>
<rect x="1771.68" y="807.65" width="9.24" height="98.13" fill="#9bb9ec"/>
<rect x="1771.68" y="905.78" width="9.24" height="31.72" fill="#aa0000"/>
<rect x="1784.51" y="850.01" width="9.24" height="18.13" fill="#00a65a"/>
<rect x="1784.51" y="868.14" width="9.24" height="50.84" fill="#9bb9ec"/>
<rect x="1784.51" y="918.98" width="9.24" height="18.52" fill="#aa0000"/>
<rect x="1797.35" y="834.84" width="9.24" height="25.62" fill="#00a65a"/>
<rect x="1797.35" y="860.46" width="9.24" height="53.60" fill="#9bb9ec"/>
<rect x="1797.35" y="914.06" width="9.24" height="23.44" fill="#aa0000"/>
<rect x="1810.18" y="838.78" width="9.24" height="21.48" fill="#00a65a"/>
<rect x="1810.18" y="860.26" width="9.24" height="48.87" fill="#9bb9ec"/>
<rect x="1810.18" y="909.13" width="9.24" height="28.37" fill="#aa0000"/>
<rect x="1823.02" y="761.93" width="9.24" height="27.59" fill="#00a65a"/>
<rect x="1823.02" y="789.52" width="9.24" height="117.25" fill="#9bb9ec"/>
<rect x="1823.02" y="906.77" width="9.24" height="30.73" fill="#aa0000"/>
<rect x="1835.85" y="766.85" width="9.24" height="25.62" fill="#00a65a"/>
<rect x="1835.85" y="792.47" width="9.24" height="106.21" fill="#9bb9ec"/>
<rect x="1835.85" y="898.69" width="9.24" height="38.81" fill="#aa0000"/>
<rect x="1848.69" y="809.22" width="9.24" height="18.72" fill="#00a65a"/>
<rect x="1848.69" y="827.94" width="9.24" height="73.70" fill="#9bb9ec"/>
<rect x="1848.69" y="901.64" width="9.24" height="35.86" fill="#aa0000"/>
<rect x="1861.52" y="813.16" width="9.24" height="19.71" fill="#00a65a"/>
<rect x="1861.52" y="832.87" width="9.24" height="75.28" fill="#9bb9ec"/>
<rect x="1861.52" y="908.14" width="9.24" height="29.36" fill="#aa0000"/>
<rect x="1874.36" y="838.78" width="9.24" height="17.14" fill="#00a65a"/>
<rect x="1874.36" y="855.92" width="9.24" height="58.72" fill="#9bb9ec"/>
<rect x="1874.36" y="914.65" width="9.24" height="22.85" fill="#aa0000"/>
<rect x="1887.19" y="822.82" width="9.24" height="15.37" fill="#00a65a"/>
<rect x="1887.19" y="838.19" width="9.24" height="67.39" fill="#9bb9ec"/>
<rect x="1887.19" y="905.58" width="9.24" height="31.92" fill="#aa0000"/>
<rect x="1900.03" y="818.88" width="9.24" height="19.90" fill="#00a65a"/>
<rect x="1900.03" y="838.78" width="9.24" height="70.94" fill="#9bb9ec"/>
<rect x="1900.03" y="909.72" width="9.24" height="27.78" fill="#aa0000"/>
<rect x="1912.86" y="751.09" width="9.24" height="61.88" fill="#00a65a"/>
<rect x="1912.86" y="812.97" width="9.24" height="88.68" fill="#9bb9ec"/>
<rect x="1912.86" y="901.64" width="9.24" height="35.86" fill="#aa0000"/>
<rect x="1925.70" y="737.10" width="9.24" height="29.56" fill="#00a65a"/>
<rect x="1925.70" y="766.66" width="9.24" height="134.59" fill="#9bb9ec"/>
<rect x="1925.70" y="901.25" width="9.24" height="36.25" fill="#aa0000"/>
<rect x="1938.53" y="831.29" width="9.24" height="14.78" fill="#00a65a"/>
<rect x="1938.53" y="846.07" width="9.24" height="68.38" fill="#9bb9ec"/>
<rect x="1938.53" y="914.45" width="9.24" height="23.05" fill="#aa0000"/>
<rect x="1951.37" y="730.79" width="9.24" height="39.02" fill="#00a65a"/>
<rect x="1951.37" y="769.81" width="9.24" height="134.98" fill="#9bb9ec"/>
<rect x="1951.37" y="904.79" width="9.24" height="32.71" fill="#aa0000"/>
<rect x="1964.20" y="836.22" width="9.24" height="12.81" fill="#00a65a"/>
<rect x="1964.20" y="849.03" width="9.24" height="62.66" fill="#9bb9ec"/>
<rect x="1964.20" y="911.69" width="9.24" height="25.81" fill="#aa0000"/>
<rect x="1977.04" y="824.00" width="9.24" height="16.75" fill="#00a65a"/>
<rect x="1977.04" y="840.75" width="9.24" height="70.35" fill="#9bb9ec"/>
<rect x="1977.04" y="911.10" width="9.24" height="26.40" fill="#aa0000"/>
<rect x="1989.87" y="822.82" width="9.24" height="18.92" fill="#00a65a"/>
<rect x="1989.87" y="841.74" width="9.24" height="66.41" fill="#9bb9ec"/>
<rect x="1989.87" y="908.14" width="9.24" height="29.36" fill="#aa0000"/>
<rect x="2002.71" y="811.00" width="9.24" height="26.21" fill="#00a65a"/>
<rect x="2002.71" y="837.20" width="9.24" height="75.47" fill="#9bb9ec"/>
<rect x="2002.71" y="912.68" width="9.24" height="24.82" fill="#aa0000"/>
<rect x="2015.54" y="736.11" width="9.24" height="72.52" fill="#00a65a"/>
<rect x="2015.54" y="808.63" width="9.24" height="93.60" fill="#9bb9ec"/>
<rect x="2015.54" y="902.23" width="9.24" height="35.27" fill="#aa0000"/>
<rect x="2028.38" y="802.13" width="9.24" height="26.80" fill="#00a65a"/>
<rect x="2028.38" y="828.93" width="9.24" height="71.33" fill="#9bb9ec"/>
<rect x="2028.38" y="900.26" width="9.24" height="37.24" fill="#aa0000"/>
<rect x="2041.21" y="807.25" width="9.24" height="22.66" fill="#00a65a"/>
<rect x="2041.21" y="829.91" width="9.24" height="80.20" fill="#9bb9ec"/>
<rect x="2041.21" y="910.12" width="9.24" height="27.38" fill="#aa0000"/>
<rect x="2054.05" y="810.21" width="9.24" height="20.69" fill="#00a65a"/>
<rect x="2054.05" y="830.90" width="9.24" height="77.25" fill="#9bb9ec"/>
<rect x="2054.05" y="908.14" width="9.24" height="29.36" fill="#aa0000"/>
<rect x="2066.88" y="700.25" width="9.24" height="40.99" fill="#00a65a"/>
<rect x="2066.88" y="741.24" width="9.24" height="113.70" fill="#9bb9ec"/>
<rect x="2066.88" y="854.94" width="9.24" height="82.56" fill="#aa0000"/>
<rect x="2079.72" y="788.93" width="9.24" height="24.04" fill="#00a65a"/>
<rect x="2079.72" y="812.97" width="9.24" height="94.59" fill="#9bb9ec"/>
<rect x="2079.72" y="907.55" width="9.24" height="29.95" fill="#aa0000"/>
<rect x="2092.55" y="741.63" width="9.24" height="59.51" fill="#00a65a"/>
<rect x="2092.55" y="801.14" width="9.24" height="106.61" fill="#9bb9ec"/>
<rect x="2092.55" y="907.75" width="9.24" height="29.75" fill="#aa0000"/>
<rect x="2105.39" y="768.23" width="9.24" height="25.62" fill="#00a65a"/>
<rect x="2105.39" y="793.85" width="9.24" height="118.23" fill="#9bb9ec"/>
<rect x="2105.39" y="912.09" width="9.24" height="25.41" fill="#aa0000"/>
<rect x="2118.22" y="808.63" width="9.24" height="20.30" fill="#00a65a"/>
<rect x="2118.22" y="828.93" width="9.24" height="83.16" fill="#9bb9ec"/>
<rect x="2118.22" y="912.09" width="9.24" height="25.41" fill="#aa0000"/>
<rect x="2131.06" y="839.17" width="9.24" height="13.79" fill="#00a65a"/>
<rect x="2131.06" y="852.97" width="9.24" height="62.07" fill="#9bb9ec"/>
<rect x="2131.06" y="915.04" width="9.24" height="22.46" fill="#aa0000"/>
<rect x="2143.89" y="799.76" width="9.24" height="24.24" fill="#00a65a"/>
<rect x="2143.89" y="824.00" width="9.24" height="87.10" fill="#9bb9ec"/>
<rect x="2143.89" y="911.10" width="9.24" height="26.40" fill="#aa0000"/>
<rect x="2156.73" y="801.14" width="9.24" height="19.90" fill="#00a65a"/>
<rect x="2156.73" y="821.05" width="9.24" height="83.75" fill="#9bb9ec"/>
<rect x="2156.73" y="904.79" width="9.24" height="32.71" fill="#aa0000"/>
<rect x="2169.56" y="822.03" width="9.24" height="18.72" fill="#00a65a"/>
<rect x="2169.56" y="840.75" width="9.24" height="69.36" fill="#9bb9ec"/>
<rect x="2169.56" y="910.12" width="9.24" height="27.38" fill="#aa0000"/>
<rect x="2182.40" y="776.12" width="9.24" height="30.15" fill="#00a65a"/>
<rect x="2182.40" y="806.27" width="9.24" height="99.91" fill="#9bb9ec"/>
<rect x="2182.40" y="906.17" width="9.24" height="31.33" fill="#aa0000"/>
<rect x="2195.23" y="796.22" width="9.24" height="26.60" fill="#00a65a"/>
<rect x="2195.23" y="822.82" width="9.24" height="86.31" fill="#9bb9ec"/>
<rect x="2195.23" y="909.13" width="9.24" height="28.37" fill="#aa0000"/>
<rect x="2208.07" y="826.37" width="9.24" height="24.63" fill="#00a65a"/>
<rect x="2208.07" y="851.00" width="9.24" height="65.62" fill="#9bb9ec"/>
<rect x="2208.07" y="916.62" width="9.24" height="20.88" fill="#aa0000"/>
<rect x="2220.90" y="799.76" width="9.24" height="25.22" fill="#00a65a"/>
<rect x="2220.90" y="824.99" width="9.24" height="87.10" fill="#9bb9ec"/>
<rect x="2220.90" y="912.09" width="9.24" height="25.41" fill="#aa0000"/>
<rect x="2233.74" y="811.59" width="9.24" height="24.24" fill="#00a65a"/>
<rect x="2233.74" y="835.82" width="9.24" height="73.31" fill="#9bb9ec"/>
<rect x="2233.74" y="909.13" width="9.24" height="28.37" fill="#aa0000"/>
<rect x="2246.57" y="815.92" width="9.24" height="21.28" fill="#00a65a"/>
<rect x="2246.57" y="837.20" width="9.24" height="75.47" fill="#9bb9ec"/>
<rect x="2246.57" y="912.68" width="9.24" height="24.82" fill="#aa0000"/>
<rect x="2259.41" y="821.05" width="9.24" height="26.60" fill="#00a65a"/>
<rect x="2259.41" y="847.65" width="9.24" height="67.39" fill="#9bb9ec"/>
<rect x="2259.41" y="915.04" width="9.24" height="22.46" fill="#aa0000"/>
<rect x="2272.24" y="801.34" width="9.24" height="27.59" fill="#00a65a"/>
<rect x="2272.24" y="828.93" width="9.24" height="75.67" fill="#9bb9ec"/>
<rect x="2272.24" y="904.60" width="9.24" height="32.90" fill="#aa0000"/>
<rect x="2285.08" y="803.70" width="9.24" height="24.24" fill="#00a65a"/>
<rect x="2285.08" y="827.94" width="9.24" height="84.14" fill="#9bb9ec"/>
<rect x="2285.08" y="912.09" width="9.24" height="25.41" fill="#aa0000"/>
<rect x="2297.91" y="793.46" width="9.24" height="26.41" fill="#00a65a"/>
<rect x="2297.91" y="819.86" width="9.24" height="91.24" fill="#9bb9ec"/>
<rect x="2297.91" y="911.10" width="9.24" height="26.40" fill="#aa0000"/>
<rect x="2310.74" y="804.30" width="9.24" height="28.57" fill="#00a65a"/>
<rect x="2310.74" y="832.87" width="9.24" height="77.25" fill="#9bb9ec"/>
<rect x="2310.74" y="910.12" width="9.24" height="27.38" fill="#aa0000"/>
<rect x="2323.58" y="821.41" width="9.24" height="18.72" fill="#00a65a"/>
<rect x="2323.58" y="840.13" width="9.24" height="66.99" fill="#9bb9ec"/>
<rect x="2323.58" y="907.12" width="9.24" height="30.38" fill="#aa0000"/>
<rect x="2336.41" y="838.75" width="9.24" height="16.16" fill="#00a65a"/>
<rect x="2336.41" y="854.91" width="9.24" height="55.17" fill="#9bb9ec"/>
<rect x="2336.41" y="910.07" width="9.24" height="27.43" fill="#aa0000"/>
<rect x="2349.25" y="807.03" width="9.24" height="37.04" fill="#00a65a"/>
<rect x="2349.25" y="844.07" width="9.24" height="67.58" fill="#9bb9ec"/>
<rect x="2349.25" y="911.65" width="9.24" height="25.85" fill="#aa0000"/>
<rect x="2362.09" y="791.27" width="9.24" height="29.75" fill="#00a65a"/>
<rect x="2362.09" y="821.02" width="9.24" height="85.12" fill="#9bb9ec"/>
<rect x="2362.09" y="906.13" width="9.24" height="31.37" fill="#aa0000"/>
<rect x="2374.92" y="780.43" width="9.24" height="24.63" fill="#00a65a"/>
<rect x="2374.92" y="805.06" width="9.24" height="101.67" fill="#9bb9ec"/>
<rect x="2374.92" y="906.72" width="9.24" height="30.78" fill="#aa0000"/>
<rect x="2387.76" y="815.50" width="9.24" height="21.28" fill="#00a65a"/>
<rect x="2387.76" y="836.78" width="9.24" height="73.69" fill="#9bb9ec"/>
<rect x="2387.76" y="910.47" width="9.24" height="27.03" fill="#aa0000"/>
<rect x="2400.59" y="765.65" width="9.24" height="43.35" fill="#00a65a"/>
<rect x="2400.59" y="809.00" width="9.24" height="94.77" fill="#9bb9ec"/>
<rect x="2400.59" y="903.77" width="9.24" height="33.73" fill="#aa0000"/>
<rect x="2413.43" y="754.03" width="9.24" height="48.07" fill="#00a65a"/>
<rect x="2413.43" y="802.10" width="9.24" height="95.16" fill="#9bb9ec"/>
<rect x="2413.43" y="897.27" width="9.24" height="40.23" fill="#aa0000"/>
<rect x="2426.26" y="717.97" width="9.24" height="54.58" fill="#00a65a"/>
<rect x="2426.26" y="772.55" width="9.24" height="123.34" fill="#9bb9ec"/>
<rect x="2426.26" y="895.89" width="9.24" height="41.61" fill="#aa0000"/>
<rect x="2439.10" y="782.01" width="9.24" height="26.01" fill="#00a65a"/>
<rect x="2439.10" y="808.01" width="9.24" height="99.70" fill="#9bb9ec"/>
<rect x="2439.10" y="907.71" width="9.24" height="29.79" fill="#aa0000"/>
<rect x="2451.93" y="764.87" width="9.24" height="45.12" fill="#00a65a"/>
<rect x="2451.93" y="809.99" width="9.24" height="97.13" fill="#9bb9ec"/>
<rect x="2451.93" y="907.12" width="9.24" height="30.38" fill="#aa0000"/>
<rect x="2464.77" y="684.48" width="9.24" height="66.40" fill="#00a65a"/>
<rect x="2464.77" y="750.88" width="9.24" height="96.74" fill="#9bb9ec"/>
<rect x="2464.77" y="847.62" width="9.24" height="89.88" fill="#aa0000"/>
<rect x="2477.60" y="719.55" width="9.24" height="47.29" fill="#00a65a"/>
<rect x="2477.60" y="766.84" width="9.24" height="87.09" fill="#9bb9ec"/>
<rect x="2477.60" y="853.92" width="9.24" height="83.58" fill="#aa0000"/>
<rect x="2490.44" y="763.68" width="9.24" height="33.49" fill="#00a65a"/>
<rect x="2490.44" y="797.18" width="9.24" height="101.47" fill="#9bb9ec"/>
<rect x="2490.44" y="898.65" width="9.24" height="38.85" fill="#aa0000"/>
<rect x="2503.27" y="765.65" width="9.24" height="31.52" fill="#00a65a"/>
<rect x="2503.27" y="797.18" width="9.24" height="102.45" fill="#9bb9ec"/>
<rect x="2503.27" y="899.63" width="9.24" height="37.87" fill="#aa0000"/>
<rect x="2516.11" y="758.96" width="9.24" height="21.67" fill="#00a65a"/>
<rect x="2516.11" y="780.63" width="9.24" height="111.71" fill="#9bb9ec"/>
<rect x="2516.11" y="892.34" width="9.24" height="45.16" fill="#aa0000"/>
<rect x="2528.94" y="782.01" width="9.24" height="24.04" fill="#00a65a"/>
<rect x="2528.94" y="806.04" width="9.24" height="98.12" fill="#9bb9ec"/>
<rect x="2528.94" y="904.16" width="9.24" height="33.34" fill="#aa0000"/>
<rect x="2541.78" y="789.89" width="9.24" height="19.11" fill="#00a65a"/>
<rect x="2541.78" y="809.00" width="9.24" height="94.18" fill="#9bb9ec"/>
<rect x="2541.78" y="903.18" width="9.24" height="34.32" fill="#aa0000"/>
<rect x="2554.61" y="736.10" width="9.24" height="42.95" fill="#00a65a"/>
<rect x="2554.61" y="779.05" width="9.24" height="115.65" fill="#9bb9ec"/>
<rect x="2554.61" y="894.71" width="9.24" height="42.79" fill="#aa0000"/>
<rect x="2567.45" y="795.21" width="9.24" height="29.75" fill="#00a65a"/>
<rect x="2567.45" y="824.96" width="9.24" height="82.16" fill="#9bb9ec"/>
<rect x="2567.45" y="907.12" width="9.24" height="30.38" fill="#aa0000"/>
<rect x="2580.28" y="825.94" width="9.24" height="15.17" fill="#00a65a"/>
<rect x="2580.28" y="841.12" width="9.24" height="66.40" fill="#9bb9ec"/>
<rect x="2580.28" y="907.51" width="9.24" height="29.99" fill="#aa0000"/>
<rect x="2593.12" y="761.91" width="9.24" height="37.24" fill="#00a65a"/>
<rect x="2593.12" y="799.15" width="9.24" height="99.50" fill="#9bb9ec"/>
<rect x="2593.12" y="898.65" width="9.24" height="38.85" fill="#aa0000"/>
<rect x="2605.95" y="805.65" width="9.24" height="18.72" fill="#00a65a"/>
<rect x="2605.95" y="824.37" width="9.24" height="80.78" fill="#9bb9ec"/>
<rect x="2605.95" y="905.15" width="9.24" height="32.35" fill="#aa0000"/>
<rect x="2618.79" y="780.04" width="9.24" height="29.95" fill="#00a65a"/>
<rect x="2618.79" y="809.99" width="9.24" height="93.59" fill="#9bb9ec"/>
<rect x="2618.79" y="903.57" width="9.24" height="33.93" fill="#aa0000"/>
<rect x="2631.62" y="895.89" width="9.24" height="8.28" fill="#00a65a"/>
<rect x="2631.62" y="904.16" width="9.24" height="23.25" fill="#9bb9ec"/>
<rect x="2631.62" y="927.41" width="9.24" height="10.09" fill="#aa0000"/>
</g></svg>
<div class="t" style="left:752.0px;top:925.5px;font:400 23.40px/23.40px 'Liberation Sans', sans-serif;color:#2a2a2a;letter-spacing:0.00px;">0</div>
<div class="t" style="left:725.9px;top:862.7px;font:400 23.40px/23.40px 'Liberation Sans', sans-serif;color:#2a2a2a;letter-spacing:0.00px;">400</div>
<div class="t" style="left:725.9px;top:800.0px;font:400 23.40px/23.40px 'Liberation Sans', sans-serif;color:#2a2a2a;letter-spacing:0.00px;">800</div>
<div class="t" style="left:706.4px;top:737.2px;font:400 23.40px/23.40px 'Liberation Sans', sans-serif;color:#2a2a2a;letter-spacing:0.00px;">1.200</div>
<div class="t" style="left:706.4px;top:674.5px;font:400 23.40px/23.40px 'Liberation Sans', sans-serif;color:#2a2a2a;letter-spacing:0.00px;">1.600</div>
<div class="t" style="left:803.4px;top:961.6px;font:400 23.60px/23.60px 'Liberation Sans', sans-serif;color:#2a2a2a;letter-spacing:0.00px;">19:00</div>
<div class="t" style="left:880.4px;top:961.6px;font:400 23.60px/23.60px 'Liberation Sans', sans-serif;color:#2a2a2a;letter-spacing:0.00px;">20:00</div>
<div class="t" style="left:957.4px;top:961.6px;font:400 23.60px/23.60px 'Liberation Sans', sans-serif;color:#2a2a2a;letter-spacing:0.00px;">21:00</div>
<div class="t" style="left:1034.4px;top:961.6px;font:400 23.60px/23.60px 'Liberation Sans', sans-serif;color:#2a2a2a;letter-spacing:0.00px;">22:00</div>
<div class="t" style="left:1111.3px;top:961.6px;font:400 23.60px/23.60px 'Liberation Sans', sans-serif;color:#2a2a2a;letter-spacing:0.00px;">23:00</div>
<div class="t" style="left:1188.3px;top:961.6px;font:400 23.60px/23.60px 'Liberation Sans', sans-serif;color:#2a2a2a;letter-spacing:0.00px;">00:00</div>
<div class="t" style="left:1265.3px;top:961.6px;font:400 23.60px/23.60px 'Liberation Sans', sans-serif;color:#2a2a2a;letter-spacing:0.00px;">01:00</div>
<div class="t" style="left:1342.2px;top:961.6px;font:400 23.60px/23.60px 'Liberation Sans', sans-serif;color:#2a2a2a;letter-spacing:0.00px;">02:00</div>
<div class="t" style="left:1419.2px;top:961.6px;font:400 23.60px/23.60px 'Liberation Sans', sans-serif;color:#2a2a2a;letter-spacing:0.00px;">03:00</div>
<div class="t" style="left:1496.2px;top:961.6px;font:400 23.60px/23.60px 'Liberation Sans', sans-serif;color:#2a2a2a;letter-spacing:0.00px;">04:00</div>
<div class="t" style="left:1573.1px;top:961.6px;font:400 23.60px/23.60px 'Liberation Sans', sans-serif;color:#2a2a2a;letter-spacing:0.00px;">05:00</div>
<div class="t" style="left:1650.1px;top:961.6px;font:400 23.60px/23.60px 'Liberation Sans', sans-serif;color:#2a2a2a;letter-spacing:0.00px;">06:00</div>
<div class="t" style="left:1727.1px;top:961.6px;font:400 23.60px/23.60px 'Liberation Sans', sans-serif;color:#2a2a2a;letter-spacing:0.00px;">07:00</div>
<div class="t" style="left:1804.1px;top:961.6px;font:400 23.60px/23.60px 'Liberation Sans', sans-serif;color:#2a2a2a;letter-spacing:0.00px;">08:00</div>
<div class="t" style="left:1881.0px;top:961.6px;font:400 23.60px/23.60px 'Liberation Sans', sans-serif;color:#2a2a2a;letter-spacing:0.00px;">09:00</div>
<div class="t" style="left:1958.0px;top:961.6px;font:400 23.60px/23.60px 'Liberation Sans', sans-serif;color:#2a2a2a;letter-spacing:0.00px;">10:00</div>
<div class="t" style="left:2035.8px;top:961.6px;font:400 23.60px/23.60px 'Liberation Sans', sans-serif;color:#2a2a2a;letter-spacing:0.00px;">11:00</div>
<div class="t" style="left:2111.9px;top:961.6px;font:400 23.60px/23.60px 'Liberation Sans', sans-serif;color:#2a2a2a;letter-spacing:0.00px;">12:00</div>
<div class="t" style="left:2188.9px;top:961.6px;font:400 23.60px/23.60px 'Liberation Sans', sans-serif;color:#2a2a2a;letter-spacing:0.00px;">13:00</div>
<div class="t" style="left:2265.9px;top:961.6px;font:400 23.60px/23.60px 'Liberation Sans', sans-serif;color:#2a2a2a;letter-spacing:0.00px;">14:00</div>
<div class="t" style="left:2342.8px;top:961.6px;font:400 23.60px/23.60px 'Liberation Sans', sans-serif;color:#2a2a2a;letter-spacing:0.00px;">15:00</div>
<div class="t" style="left:2419.8px;top:961.6px;font:400 23.60px/23.60px 'Liberation Sans', sans-serif;color:#2a2a2a;letter-spacing:0.00px;">16:00</div>
<div class="t" style="left:2496.8px;top:961.6px;font:400 23.60px/23.60px 'Liberation Sans', sans-serif;color:#2a2a2a;letter-spacing:0.00px;">17:00</div>
<div class="t" style="left:2573.8px;top:961.6px;font:400 23.60px/23.60px 'Liberation Sans', sans-serif;color:#2a2a2a;letter-spacing:0.00px;">18:00</div>
<svg style="left:0;top:0" width="2880" height="1750" viewBox="0 0 2880 1750">
<rect x="772" y="1465.50" width="1864" height="2" fill="#e5e5e5"/>
<rect x="772" y="1402.75" width="1864" height="2" fill="#e5e5e5"/>
<rect x="772" y="1340.00" width="1864" height="2" fill="#e5e5e5"/>
<rect x="772" y="1277.25" width="1864" height="2" fill="#e5e5e5"/>
<rect x="772" y="1214.50" width="1864" height="2" fill="#e5e5e5"/>
<rect x="832.00" y="1184" width="2" height="299" fill="#e5e5e5"/>
<rect x="908.97" y="1184" width="2" height="299" fill="#e5e5e5"/>
<rect x="985.94" y="1184" width="2" height="299" fill="#e5e5e5"/>
<rect x="1062.91" y="1184" width="2" height="299" fill="#e5e5e5"/>
<rect x="1139.88" y="1184" width="2" height="299" fill="#e5e5e5"/>
<rect x="1216.85" y="1184" width="2" height="299" fill="#e5e5e5"/>
<rect x="1293.82" y="1184" width="2" height="299" fill="#e5e5e5"/>
<rect x="1370.79" y="1184" width="2" height="299" fill="#e5e5e5"/>
<rect x="1447.76" y="1184" width="2" height="299" fill="#e5e5e5"/>
<rect x="1524.73" y="1184" width="2" height="299" fill="#e5e5e5"/>
<rect x="1601.70" y="1184" width="2" height="299" fill="#e5e5e5"/>
<rect x="1678.67" y="1184" width="2" height="299" fill="#e5e5e5"/>
<rect x="1755.64" y="1184" width="2" height="299" fill="#e5e5e5"/>
<rect x="1832.61" y="1184" width="2" height="299" fill="#e5e5e5"/>
<rect x="1909.58" y="1184" width="2" height="299" fill="#e5e5e5"/>
<rect x="1986.55" y="1184" width="2" height="299" fill="#e5e5e5"/>
<rect x="2063.52" y="1184" width="2" height="299" fill="#e5e5e5"/>
<rect x="2140.49" y="1184" width="2" height="299" fill="#e5e5e5"/>
<rect x="2217.46" y="1184" width="2" height="299" fill="#e5e5e5"/>
<rect x="2294.43" y="1184" width="2" height="299" fill="#e5e5e5"/>
<rect x="2371.40" y="1184" width="2" height="299" fill="#e5e5e5"/>
<rect x="2448.37" y="1184" width="2" height="299" fill="#e5e5e5"/>
<rect x="2525.34" y="1184" width="2" height="299" fill="#e5e5e5"/>
<rect x="2602.31" y="1184" width="2" height="299" fill="#e5e5e5"/>
<clipPath id="cp2"><rect x="788" y="1129" width="1848" height="340"/></clipPath><g clip-path="url(#cp2)">
<rect x="783.38" y="1453.89" width="9.24" height="12.61" fill="#f56954"/>
<rect x="783.38" y="1433.79" width="9.24" height="20.10" fill="#3c8dbc"/>
<rect x="783.38" y="1376.65" width="9.24" height="57.15" fill="#f39c12"/>
<rect x="783.38" y="1372.12" width="9.24" height="4.53" fill="#001f3f"/>
<rect x="783.38" y="1370.15" width="9.24" height="1.97" fill="#39cccc"/>
<rect x="783.38" y="1368.17" width="9.24" height="1.97" fill="#01ff70"/>
<rect x="796.22" y="1451.92" width="9.24" height="14.58" fill="#f56954"/>
<rect x="796.22" y="1427.69" width="9.24" height="24.24" fill="#3c8dbc"/>
<rect x="796.22" y="1354.97" width="9.24" height="72.71" fill="#f39c12"/>
<rect x="796.22" y="1352.02" width="9.24" height="2.96" fill="#0073b7"/>
<rect x="796.22" y="1348.86" width="9.24" height="3.15" fill="#001f3f"/>
<rect x="796.22" y="1347.48" width="9.24" height="1.38" fill="#39cccc"/>
<rect x="796.22" y="1345.51" width="9.24" height="1.97" fill="#01ff70"/>
<rect x="809.05" y="1452.91" width="9.24" height="13.59" fill="#f56954"/>
<rect x="809.05" y="1434.58" width="9.24" height="18.33" fill="#3c8dbc"/>
<rect x="809.05" y="1411.13" width="9.24" height="23.45" fill="#f39c12"/>
<rect x="809.05" y="1407.59" width="9.24" height="3.55" fill="#0073b7"/>
<rect x="809.05" y="1405.62" width="9.24" height="1.97" fill="#39cccc"/>
<rect x="809.05" y="1403.64" width="9.24" height="1.97" fill="#01ff70"/>
<rect x="821.88" y="1455.27" width="9.24" height="11.23" fill="#f56954"/>
<rect x="821.88" y="1375.07" width="9.24" height="80.20" fill="#3c8dbc"/>
<rect x="821.88" y="1360.69" width="9.24" height="14.39" fill="#f39c12"/>
<rect x="821.88" y="1358.32" width="9.24" height="2.36" fill="#0073b7"/>
<rect x="821.88" y="1356.35" width="9.24" height="1.97" fill="#001f3f"/>
<rect x="821.88" y="1353.99" width="9.24" height="2.36" fill="#39cccc"/>
<rect x="821.88" y="1351.03" width="9.24" height="2.96" fill="#01ff70"/>
<rect x="834.72" y="1455.47" width="9.24" height="11.03" fill="#f56954"/>
<rect x="834.72" y="1393.40" width="9.24" height="62.07" fill="#3c8dbc"/>
<rect x="834.72" y="1386.30" width="9.24" height="7.09" fill="#f39c12"/>
<rect x="834.72" y="1380.39" width="9.24" height="5.91" fill="#0073b7"/>
<rect x="834.72" y="1379.01" width="9.24" height="1.38" fill="#001f3f"/>
<rect x="834.72" y="1377.04" width="9.24" height="1.97" fill="#39cccc"/>
<rect x="834.72" y="1376.06" width="9.24" height="0.99" fill="#01ff70"/>
<rect x="847.55" y="1444.44" width="9.24" height="22.06" fill="#f56954"/>
<rect x="847.55" y="1383.94" width="9.24" height="60.50" fill="#3c8dbc"/>
<rect x="847.55" y="1371.52" width="9.24" height="12.41" fill="#f39c12"/>
<rect x="847.55" y="1369.75" width="9.24" height="1.77" fill="#0073b7"/>
<rect x="847.55" y="1368.57" width="9.24" height="1.18" fill="#001f3f"/>
<rect x="847.55" y="1366.20" width="9.24" height="2.36" fill="#39cccc"/>
<rect x="847.55" y="1363.64" width="9.24" height="2.56" fill="#01ff70"/>
<rect x="860.39" y="1441.48" width="9.24" height="25.02" fill="#f56954"/>
<rect x="860.39" y="1355.96" width="9.24" height="85.52" fill="#3c8dbc"/>
<rect x="860.39" y="1346.10" width="9.24" height="9.85" fill="#f39c12"/>
<rect x="860.39" y="1305.12" width="9.24" height="40.99" fill="#0073b7"/>
<rect x="860.39" y="1303.15" width="9.24" height="1.97" fill="#001f3f"/>
<rect x="860.39" y="1302.16" width="9.24" height="0.99" fill="#39cccc"/>
<rect x="860.39" y="1290.93" width="9.24" height="11.23" fill="#01ff70"/>
<rect x="873.23" y="1405.62" width="9.24" height="60.88" fill="#f56954"/>
<rect x="873.23" y="1367.78" width="9.24" height="37.83" fill="#3c8dbc"/>
<rect x="873.23" y="1343.15" width="9.24" height="24.63" fill="#f39c12"/>
<rect x="873.23" y="1323.25" width="9.24" height="19.90" fill="#0073b7"/>
<rect x="873.23" y="1321.87" width="9.24" height="1.38" fill="#001f3f"/>
<rect x="873.23" y="1318.91" width="9.24" height="2.96" fill="#39cccc"/>
<rect x="873.23" y="1314.97" width="9.24" height="3.94" fill="#01ff70"/>
<rect x="886.06" y="1430.25" width="9.24" height="36.25" fill="#f56954"/>
<rect x="886.06" y="1419.80" width="9.24" height="10.44" fill="#3c8dbc"/>
<rect x="886.06" y="1410.54" width="9.24" height="9.26" fill="#f39c12"/>
<rect x="886.06" y="1383.94" width="9.24" height="26.60" fill="#0073b7"/>
<rect x="886.06" y="1380.98" width="9.24" height="2.96" fill="#001f3f"/>
<rect x="886.06" y="1379.60" width="9.24" height="1.38" fill="#39cccc"/>
<rect x="886.06" y="1376.06" width="9.24" height="3.55" fill="#01ff70"/>
<rect x="898.89" y="1426.90" width="9.24" height="39.60" fill="#f56954"/>
<rect x="898.89" y="1407.98" width="9.24" height="18.92" fill="#3c8dbc"/>
<rect x="898.89" y="1386.30" width="9.24" height="21.68" fill="#f39c12"/>
<rect x="898.89" y="1365.22" width="9.24" height="21.09" fill="#0073b7"/>
<rect x="898.89" y="1363.25" width="9.24" height="1.97" fill="#001f3f"/>
<rect x="898.89" y="1361.28" width="9.24" height="1.97" fill="#39cccc"/>
<rect x="898.89" y="1357.93" width="9.24" height="3.35" fill="#01ff70"/>
<rect x="911.73" y="1387.88" width="9.24" height="78.62" fill="#f56954"/>
<rect x="911.73" y="1359.31" width="9.24" height="28.57" fill="#3c8dbc"/>
<rect x="911.73" y="1342.95" width="9.24" height="16.36" fill="#f39c12"/>
<rect x="911.73" y="1319.30" width="9.24" height="23.65" fill="#0073b7"/>
<rect x="911.73" y="1312.60" width="9.24" height="6.70" fill="#001f3f"/>
<rect x="911.73" y="1309.45" width="9.24" height="3.15" fill="#39cccc"/>
<rect x="911.73" y="1290.34" width="9.24" height="19.11" fill="#01ff70"/>
<rect x="924.56" y="1443.06" width="9.24" height="23.44" fill="#f56954"/>
<rect x="924.56" y="1391.23" width="9.24" height="51.83" fill="#3c8dbc"/>
<rect x="924.56" y="1367.78" width="9.24" height="23.45" fill="#f39c12"/>
<rect x="924.56" y="1337.63" width="9.24" height="30.15" fill="#0073b7"/>
<rect x="924.56" y="1336.25" width="9.24" height="1.38" fill="#001f3f"/>
<rect x="924.56" y="1334.67" width="9.24" height="1.58" fill="#39cccc"/>
<rect x="924.56" y="1331.13" width="9.24" height="3.55" fill="#01ff70"/>
<rect x="937.40" y="1452.91" width="9.24" height="13.59" fill="#f56954"/>
<rect x="937.40" y="1417.04" width="9.24" height="35.86" fill="#3c8dbc"/>
<rect x="937.40" y="1407.98" width="9.24" height="9.06" fill="#f39c12"/>
<rect x="937.40" y="1393.79" width="9.24" height="14.19" fill="#0073b7"/>
<rect x="937.40" y="1391.43" width="9.24" height="2.36" fill="#001f3f"/>
<rect x="937.40" y="1389.85" width="9.24" height="1.58" fill="#39cccc"/>
<rect x="937.40" y="1386.30" width="9.24" height="3.55" fill="#01ff70"/>
<rect x="950.24" y="1439.71" width="9.24" height="26.79" fill="#f56954"/>
<rect x="950.24" y="1430.64" width="9.24" height="9.06" fill="#3c8dbc"/>
<rect x="950.24" y="1422.37" width="9.24" height="8.28" fill="#f39c12"/>
<rect x="950.24" y="1400.10" width="9.24" height="22.27" fill="#0073b7"/>
<rect x="950.24" y="1397.34" width="9.24" height="2.76" fill="#001f3f"/>
<rect x="950.24" y="1395.37" width="9.24" height="1.97" fill="#39cccc"/>
<rect x="950.24" y="1391.82" width="9.24" height="3.55" fill="#01ff70"/>
<rect x="963.07" y="1439.12" width="9.24" height="27.38" fill="#f56954"/>
<rect x="963.07" y="1395.76" width="9.24" height="43.35" fill="#3c8dbc"/>
<rect x="963.07" y="1384.33" width="9.24" height="11.43" fill="#f39c12"/>
<rect x="963.07" y="1355.37" width="9.24" height="28.97" fill="#0073b7"/>
<rect x="963.07" y="1348.07" width="9.24" height="7.29" fill="#001f3f"/>
<rect x="963.07" y="1346.10" width="9.24" height="1.97" fill="#39cccc"/>
<rect x="963.07" y="1342.16" width="9.24" height="3.94" fill="#01ff70"/>
<rect x="975.90" y="1444.63" width="9.24" height="21.87" fill="#f56954"/>
<rect x="975.90" y="1375.47" width="9.24" height="69.17" fill="#3c8dbc"/>
<rect x="975.90" y="1368.17" width="9.24" height="7.29" fill="#f39c12"/>
<rect x="975.90" y="1343.15" width="9.24" height="25.03" fill="#0073b7"/>
<rect x="975.90" y="1340.98" width="9.24" height="2.17" fill="#001f3f"/>
<rect x="975.90" y="1338.62" width="9.24" height="2.36" fill="#39cccc"/>
<rect x="975.90" y="1335.27" width="9.24" height="3.35" fill="#01ff70"/>
<rect x="988.74" y="1415.47" width="9.24" height="51.03" fill="#f56954"/>
<rect x="988.74" y="1356.75" width="9.24" height="58.72" fill="#3c8dbc"/>
<rect x="988.74" y="1262.16" width="9.24" height="94.59" fill="#f39c12"/>
<rect x="988.74" y="1236.15" width="9.24" height="26.01" fill="#0073b7"/>
<rect x="988.74" y="1232.80" width="9.24" height="3.35" fill="#001f3f"/>
<rect x="988.74" y="1230.23" width="9.24" height="2.56" fill="#39cccc"/>
<rect x="988.74" y="1225.90" width="9.24" height="4.34" fill="#01ff70"/>
<rect x="1001.58" y="1444.63" width="9.24" height="21.87" fill="#f56954"/>
<rect x="1001.58" y="1405.02" width="9.24" height="39.61" fill="#3c8dbc"/>
<rect x="1001.58" y="1262.16" width="9.24" height="142.87" fill="#00c0ef"/>
<rect x="1001.58" y="1246.39" width="9.24" height="15.76" fill="#f39c12"/>
<rect x="1001.58" y="1219.79" width="9.24" height="26.60" fill="#0073b7"/>
<rect x="1001.58" y="1218.41" width="9.24" height="1.38" fill="#001f3f"/>
<rect x="1001.58" y="1214.08" width="9.24" height="4.34" fill="#01ff70"/>
<rect x="1014.41" y="1458.82" width="9.24" height="7.68" fill="#f56954"/>
<rect x="1014.41" y="1447.98" width="9.24" height="10.84" fill="#3c8dbc"/>
<rect x="1014.41" y="1417.04" width="9.24" height="30.94" fill="#00c0ef"/>
<rect x="1014.41" y="1380.98" width="9.24" height="36.06" fill="#f39c12"/>
<rect x="1014.41" y="1353.40" width="9.24" height="27.59" fill="#0073b7"/>
<rect x="1014.41" y="1351.42" width="9.24" height="1.97" fill="#001f3f"/>
<rect x="1014.41" y="1350.05" width="9.24" height="1.38" fill="#39cccc"/>
<rect x="1014.41" y="1345.91" width="9.24" height="4.14" fill="#01ff70"/>
<rect x="1027.25" y="1443.06" width="9.24" height="23.44" fill="#f56954"/>
<rect x="1027.25" y="1436.16" width="9.24" height="6.90" fill="#3c8dbc"/>
<rect x="1027.25" y="1393.79" width="9.24" height="42.37" fill="#00c0ef"/>
<rect x="1027.25" y="1372.12" width="9.24" height="21.68" fill="#f39c12"/>
<rect x="1027.25" y="1346.89" width="9.24" height="25.22" fill="#0073b7"/>
<rect x="1027.25" y="1344.92" width="9.24" height="1.97" fill="#001f3f"/>
<rect x="1027.25" y="1343.54" width="9.24" height="1.38" fill="#39cccc"/>
<rect x="1027.25" y="1339.01" width="9.24" height="4.53" fill="#01ff70"/>
<rect x="1040.08" y="1453.89" width="9.24" height="12.61" fill="#f56954"/>
<rect x="1040.08" y="1440.10" width="9.24" height="13.79" fill="#3c8dbc"/>
<rect x="1040.08" y="1286.40" width="9.24" height="153.70" fill="#00c0ef"/>
<rect x="1040.08" y="1274.18" width="9.24" height="12.22" fill="#f39c12"/>
<rect x="1040.08" y="1251.91" width="9.24" height="22.27" fill="#0073b7"/>
<rect x="1040.08" y="1247.58" width="9.24" height="4.34" fill="#001f3f"/>
<rect x="1040.08" y="1246.00" width="9.24" height="1.58" fill="#39cccc"/>
<rect x="1040.08" y="1242.65" width="9.24" height="3.35" fill="#01ff70"/>
<rect x="1052.92" y="1452.32" width="9.24" height="14.18" fill="#f56954"/>
<rect x="1052.92" y="1411.53" width="9.24" height="40.79" fill="#3c8dbc"/>
<rect x="1052.92" y="1371.13" width="9.24" height="40.40" fill="#00c0ef"/>
<rect x="1052.92" y="1325.81" width="9.24" height="45.32" fill="#f39c12"/>
<rect x="1052.92" y="1298.22" width="9.24" height="27.59" fill="#0073b7"/>
<rect x="1052.92" y="1296.25" width="9.24" height="1.97" fill="#001f3f"/>
<rect x="1052.92" y="1293.29" width="9.24" height="2.96" fill="#39cccc"/>
<rect x="1052.92" y="1290.34" width="9.24" height="2.96" fill="#01ff70"/>
<rect x="1065.75" y="1427.88" width="9.24" height="38.62" fill="#f56954"/>
<rect x="1065.75" y="1412.12" width="9.24" height="15.76" fill="#3c8dbc"/>
<rect x="1065.75" y="1384.92" width="9.24" height="27.19" fill="#00c0ef"/>
<rect x="1065.75" y="1344.53" width="9.24" height="40.40" fill="#f39c12"/>
<rect x="1065.75" y="1323.44" width="9.24" height="21.09" fill="#0073b7"/>
<rect x="1065.75" y="1320.49" width="9.24" height="2.96" fill="#001f3f"/>
<rect x="1065.75" y="1318.52" width="9.24" height="1.97" fill="#39cccc"/>
<rect x="1065.75" y="1310.04" width="9.24" height="8.47" fill="#01ff70"/>
<rect x="1078.59" y="1450.94" width="9.24" height="15.56" fill="#f56954"/>
<rect x="1078.59" y="1435.17" width="9.24" height="15.76" fill="#3c8dbc"/>
<rect x="1078.59" y="1374.68" width="9.24" height="60.50" fill="#00c0ef"/>
<rect x="1078.59" y="1366.20" width="9.24" height="8.47" fill="#f39c12"/>
<rect x="1078.59" y="1341.57" width="9.24" height="24.63" fill="#0073b7"/>
<rect x="1078.59" y="1340.59" width="9.24" height="0.99" fill="#001f3f"/>
<rect x="1078.59" y="1339.60" width="9.24" height="0.99" fill="#39cccc"/>
<rect x="1078.59" y="1331.72" width="9.24" height="7.88" fill="#01ff70"/>
<rect x="1091.42" y="1443.06" width="9.24" height="23.44" fill="#f56954"/>
<rect x="1091.42" y="1431.23" width="9.24" height="11.82" fill="#3c8dbc"/>
<rect x="1091.42" y="1415.86" width="9.24" height="15.37" fill="#00c0ef"/>
<rect x="1091.42" y="1408.97" width="9.24" height="6.90" fill="#f39c12"/>
<rect x="1091.42" y="1387.88" width="9.24" height="21.09" fill="#0073b7"/>
<rect x="1091.42" y="1386.30" width="9.24" height="1.58" fill="#001f3f"/>
<rect x="1091.42" y="1380.00" width="9.24" height="6.31" fill="#01ff70"/>
<rect x="1104.26" y="1454.88" width="9.24" height="11.62" fill="#f56954"/>
<rect x="1104.26" y="1414.09" width="9.24" height="40.79" fill="#3c8dbc"/>
<rect x="1104.26" y="1407.19" width="9.24" height="6.90" fill="#00c0ef"/>
<rect x="1104.26" y="1299.80" width="9.24" height="107.40" fill="#f39c12"/>
<rect x="1104.26" y="1290.93" width="9.24" height="8.87" fill="#001f3f"/>
<rect x="1104.26" y="1288.96" width="9.24" height="1.97" fill="#39cccc"/>
<rect x="1104.26" y="1284.43" width="9.24" height="4.53" fill="#01ff70"/>
<rect x="1117.09" y="1464.34" width="9.24" height="2.16" fill="#f56954"/>
<rect x="1117.09" y="1398.32" width="9.24" height="66.01" fill="#3c8dbc"/>
<rect x="1117.09" y="1392.81" width="9.24" height="5.52" fill="#00c0ef"/>
<rect x="1117.09" y="1384.92" width="9.24" height="7.88" fill="#f39c12"/>
<rect x="1117.09" y="1380.98" width="9.24" height="3.94" fill="#001f3f"/>
<rect x="1117.09" y="1375.66" width="9.24" height="5.32" fill="#01ff70"/>
<rect x="1129.93" y="1455.87" width="9.24" height="10.63" fill="#f56954"/>
<rect x="1129.93" y="1423.35" width="9.24" height="32.51" fill="#3c8dbc"/>
<rect x="1129.93" y="1421.97" width="9.24" height="1.38" fill="#00c0ef"/>
<rect x="1129.93" y="1410.15" width="9.24" height="11.82" fill="#f39c12"/>
<rect x="1129.93" y="1408.18" width="9.24" height="1.97" fill="#0073b7"/>
<rect x="1129.93" y="1401.67" width="9.24" height="6.50" fill="#001f3f"/>
<rect x="1129.93" y="1399.70" width="9.24" height="1.97" fill="#39cccc"/>
<rect x="1129.93" y="1397.34" width="9.24" height="2.36" fill="#01ff70"/>
<rect x="1142.76" y="1435.17" width="9.24" height="31.33" fill="#3c8dbc"/>
<rect x="1142.76" y="1430.25" width="9.24" height="4.93" fill="#00c0ef"/>
<rect x="1142.76" y="1418.03" width="9.24" height="12.22" fill="#f39c12"/>
<rect x="1142.76" y="1405.62" width="9.24" height="12.41" fill="#001f3f"/>
<rect x="1142.76" y="1403.25" width="9.24" height="2.36" fill="#39cccc"/>
<rect x="1142.76" y="1397.34" width="9.24" height="5.91" fill="#01ff70"/>
<rect x="1155.60" y="1447.98" width="9.24" height="18.52" fill="#3c8dbc"/>
<rect x="1155.60" y="1446.01" width="9.24" height="1.97" fill="#00c0ef"/>
<rect x="1155.60" y="1435.57" width="9.24" height="10.44" fill="#f39c12"/>
<rect x="1155.60" y="1428.28" width="9.24" height="7.29" fill="#001f3f"/>
<rect x="1155.60" y="1426.31" width="9.24" height="1.97" fill="#39cccc"/>
<rect x="1155.60" y="1423.74" width="9.24" height="2.56" fill="#01ff70"/>
<rect x="1168.43" y="1448.57" width="9.24" height="17.93" fill="#3c8dbc"/>
<rect x="1168.43" y="1447.00" width="9.24" height="1.58" fill="#00c0ef"/>
<rect x="1168.43" y="1433.79" width="9.24" height="13.20" fill="#f39c12"/>
<rect x="1168.43" y="1430.25" width="9.24" height="3.55" fill="#0073b7"/>
<rect x="1168.43" y="1428.28" width="9.24" height="1.97" fill="#001f3f"/>
<rect x="1168.43" y="1427.29" width="9.24" height="0.99" fill="#01ff70"/>
<rect x="1181.27" y="1454.49" width="9.24" height="12.01" fill="#3c8dbc"/>
<rect x="1181.27" y="1451.53" width="9.24" height="2.96" fill="#00c0ef"/>
<rect x="1181.27" y="1439.51" width="9.24" height="12.02" fill="#f39c12"/>
<rect x="1181.27" y="1437.14" width="9.24" height="2.36" fill="#001f3f"/>
<rect x="1181.27" y="1436.16" width="9.24" height="0.99" fill="#39cccc"/>
<rect x="1181.27" y="1424.34" width="9.24" height="11.82" fill="#01ff70"/>
<rect x="1194.10" y="1451.33" width="9.24" height="15.17" fill="#3c8dbc"/>
<rect x="1194.10" y="1448.57" width="9.24" height="2.76" fill="#00c0ef"/>
<rect x="1194.10" y="1442.07" width="9.24" height="6.50" fill="#f39c12"/>
<rect x="1194.10" y="1440.10" width="9.24" height="1.97" fill="#0073b7"/>
<rect x="1194.10" y="1435.17" width="9.24" height="4.93" fill="#001f3f"/>
<rect x="1194.10" y="1433.79" width="9.24" height="1.38" fill="#01ff70"/>
<rect x="1206.94" y="1451.33" width="9.24" height="15.17" fill="#3c8dbc"/>
<rect x="1206.94" y="1447.00" width="9.24" height="4.34" fill="#00c0ef"/>
<rect x="1206.94" y="1437.14" width="9.24" height="9.85" fill="#f39c12"/>
<rect x="1206.94" y="1434.19" width="9.24" height="2.96" fill="#0073b7"/>
<rect x="1206.94" y="1432.81" width="9.24" height="1.38" fill="#001f3f"/>
<rect x="1206.94" y="1430.25" width="9.24" height="2.56" fill="#01ff70"/>
<rect x="1219.77" y="1448.57" width="9.24" height="17.93" fill="#3c8dbc"/>
<rect x="1219.77" y="1446.01" width="9.24" height="2.56" fill="#00c0ef"/>
<rect x="1219.77" y="1438.13" width="9.24" height="7.88" fill="#f39c12"/>
<rect x="1219.77" y="1430.84" width="9.24" height="7.29" fill="#001f3f"/>
<rect x="1219.77" y="1428.28" width="9.24" height="2.56" fill="#01ff70"/>
<rect x="1232.61" y="1437.54" width="9.24" height="28.96" fill="#3c8dbc"/>
<rect x="1232.61" y="1431.23" width="9.24" height="6.31" fill="#00c0ef"/>
<rect x="1232.61" y="1419.80" width="9.24" height="11.43" fill="#f39c12"/>
<rect x="1232.61" y="1417.83" width="9.24" height="1.97" fill="#0073b7"/>
<rect x="1232.61" y="1415.07" width="9.24" height="2.76" fill="#001f3f"/>
<rect x="1232.61" y="1413.10" width="9.24" height="1.97" fill="#39cccc"/>
<rect x="1232.61" y="1411.13" width="9.24" height="1.97" fill="#01ff70"/>
<rect x="1245.44" y="1429.66" width="9.24" height="36.84" fill="#f56954"/>
<rect x="1245.44" y="1403.64" width="9.24" height="26.01" fill="#3c8dbc"/>
<rect x="1245.44" y="1400.10" width="9.24" height="3.55" fill="#00c0ef"/>
<rect x="1245.44" y="1392.81" width="9.24" height="7.29" fill="#f39c12"/>
<rect x="1245.44" y="1388.87" width="9.24" height="3.94" fill="#001f3f"/>
<rect x="1245.44" y="1386.90" width="9.24" height="1.97" fill="#39cccc"/>
<rect x="1245.44" y="1384.92" width="9.24" height="1.97" fill="#01ff70"/>
<rect x="1258.28" y="1438.13" width="9.24" height="28.37" fill="#f56954"/>
<rect x="1258.28" y="1415.47" width="9.24" height="22.66" fill="#3c8dbc"/>
<rect x="1258.28" y="1411.13" width="9.24" height="4.34" fill="#00c0ef"/>
<rect x="1258.28" y="1400.10" width="9.24" height="11.04" fill="#f39c12"/>
<rect x="1258.28" y="1395.76" width="9.24" height="4.34" fill="#001f3f"/>
<rect x="1258.28" y="1392.81" width="9.24" height="2.96" fill="#39cccc"/>
<rect x="1258.28" y="1390.84" width="9.24" height="1.97" fill="#01ff70"/>
<rect x="1271.11" y="1448.97" width="9.24" height="17.53" fill="#f56954"/>
<rect x="1271.11" y="1419.41" width="9.24" height="29.56" fill="#3c8dbc"/>
<rect x="1271.11" y="1260.78" width="9.24" height="158.63" fill="#00a65a"/>
<rect x="1271.11" y="1245.01" width="9.24" height="15.76" fill="#00c0ef"/>
<rect x="1271.11" y="1243.63" width="9.24" height="1.38" fill="#f39c12"/>
<rect x="1271.11" y="1231.22" width="9.24" height="12.41" fill="#0073b7"/>
<rect x="1271.11" y="1223.34" width="9.24" height="7.88" fill="#001f3f"/>
<rect x="1271.11" y="1221.96" width="9.24" height="1.38" fill="#39cccc"/>
<rect x="1271.11" y="1204.22" width="9.24" height="17.74" fill="#01ff70"/>
<rect x="1283.95" y="1449.36" width="9.24" height="17.14" fill="#f56954"/>
<rect x="1283.95" y="1423.35" width="9.24" height="26.01" fill="#3c8dbc"/>
<rect x="1283.95" y="1382.56" width="9.24" height="40.79" fill="#00a65a"/>
<rect x="1283.95" y="1378.03" width="9.24" height="4.53" fill="#00c0ef"/>
<rect x="1283.95" y="1376.45" width="9.24" height="1.58" fill="#0073b7"/>
<rect x="1283.95" y="1374.48" width="9.24" height="1.97" fill="#001f3f"/>
<rect x="1283.95" y="1370.15" width="9.24" height="4.34" fill="#39cccc"/>
<rect x="1283.95" y="1368.57" width="9.24" height="1.58" fill="#01ff70"/>
<rect x="1296.78" y="1457.84" width="9.24" height="8.66" fill="#f56954"/>
<rect x="1296.78" y="1441.09" width="9.24" height="16.75" fill="#3c8dbc"/>
<rect x="1296.78" y="1427.69" width="9.24" height="13.40" fill="#00a65a"/>
<rect x="1296.78" y="1421.77" width="9.24" height="5.91" fill="#00c0ef"/>
<rect x="1296.78" y="1419.80" width="9.24" height="1.97" fill="#001f3f"/>
<rect x="1296.78" y="1417.44" width="9.24" height="2.36" fill="#39cccc"/>
<rect x="1296.78" y="1406.99" width="9.24" height="10.44" fill="#01ff70"/>
<rect x="1309.62" y="1463.75" width="9.24" height="2.75" fill="#f56954"/>
<rect x="1309.62" y="1445.03" width="9.24" height="18.72" fill="#3c8dbc"/>
<rect x="1309.62" y="1443.65" width="9.24" height="1.38" fill="#00a65a"/>
<rect x="1309.62" y="1440.69" width="9.24" height="2.96" fill="#00c0ef"/>
<rect x="1309.62" y="1439.12" width="9.24" height="1.58" fill="#001f3f"/>
<rect x="1309.62" y="1426.90" width="9.24" height="12.22" fill="#01ff70"/>
<rect x="1322.45" y="1458.23" width="9.24" height="8.27" fill="#f56954"/>
<rect x="1322.45" y="1445.03" width="9.24" height="13.20" fill="#3c8dbc"/>
<rect x="1322.45" y="1437.14" width="9.24" height="7.88" fill="#00c0ef"/>
<rect x="1322.45" y="1435.17" width="9.24" height="1.97" fill="#001f3f"/>
<rect x="1322.45" y="1426.90" width="9.24" height="8.28" fill="#01ff70"/>
<rect x="1335.29" y="1454.49" width="9.24" height="12.01" fill="#f56954"/>
<rect x="1335.29" y="1426.70" width="9.24" height="27.79" fill="#3c8dbc"/>
<rect x="1335.29" y="1420.00" width="9.24" height="6.70" fill="#00c0ef"/>
<rect x="1335.29" y="1418.03" width="9.24" height="1.97" fill="#0073b7"/>
<rect x="1335.29" y="1414.09" width="9.24" height="3.94" fill="#001f3f"/>
<rect x="1335.29" y="1412.51" width="9.24" height="1.58" fill="#39cccc"/>
<rect x="1335.29" y="1384.92" width="9.24" height="27.59" fill="#01ff70"/>
<rect x="1348.12" y="1448.38" width="9.24" height="18.12" fill="#f56954"/>
<rect x="1348.12" y="1425.32" width="9.24" height="23.06" fill="#3c8dbc"/>
<rect x="1348.12" y="1419.41" width="9.24" height="5.91" fill="#00c0ef"/>
<rect x="1348.12" y="1417.44" width="9.24" height="1.97" fill="#001f3f"/>
<rect x="1348.12" y="1384.92" width="9.24" height="32.51" fill="#01ff70"/>
<rect x="1360.96" y="1457.84" width="9.24" height="8.66" fill="#f56954"/>
<rect x="1360.96" y="1439.51" width="9.24" height="18.33" fill="#3c8dbc"/>
<rect x="1360.96" y="1436.16" width="9.24" height="3.35" fill="#00a65a"/>
<rect x="1360.96" y="1431.23" width="9.24" height="4.93" fill="#00c0ef"/>
<rect x="1360.96" y="1430.25" width="9.24" height="0.99" fill="#0073b7"/>
<rect x="1360.96" y="1418.42" width="9.24" height="11.82" fill="#001f3f"/>
<rect x="1360.96" y="1416.45" width="9.24" height="1.97" fill="#39cccc"/>
<rect x="1360.96" y="1398.13" width="9.24" height="18.33" fill="#01ff70"/>
<rect x="1373.79" y="1454.88" width="9.24" height="11.62" fill="#f56954"/>
<rect x="1373.79" y="1427.29" width="9.24" height="27.59" fill="#3c8dbc"/>
<rect x="1373.79" y="1420.39" width="9.24" height="6.90" fill="#00a65a"/>
<rect x="1373.79" y="1414.48" width="9.24" height="5.91" fill="#00c0ef"/>
<rect x="1373.79" y="1406.60" width="9.24" height="7.88" fill="#001f3f"/>
<rect x="1373.79" y="1403.64" width="9.24" height="2.96" fill="#39cccc"/>
<rect x="1373.79" y="1396.16" width="9.24" height="7.49" fill="#01ff70"/>
<rect x="1386.62" y="1455.87" width="9.24" height="10.63" fill="#f56954"/>
<rect x="1386.62" y="1431.23" width="9.24" height="24.63" fill="#3c8dbc"/>
<rect x="1386.62" y="1425.32" width="9.24" height="5.91" fill="#00a65a"/>
<rect x="1386.62" y="1419.02" width="9.24" height="6.31" fill="#00c0ef"/>
<rect x="1386.62" y="1417.04" width="9.24" height="1.97" fill="#001f3f"/>
<rect x="1386.62" y="1413.10" width="9.24" height="3.94" fill="#01ff70"/>
<rect x="1399.46" y="1457.44" width="9.24" height="9.06" fill="#f56954"/>
<rect x="1399.46" y="1416.45" width="9.24" height="40.99" fill="#3c8dbc"/>
<rect x="1399.46" y="1388.87" width="9.24" height="27.59" fill="#00a65a"/>
<rect x="1399.46" y="1382.95" width="9.24" height="5.91" fill="#00c0ef"/>
<rect x="1399.46" y="1378.03" width="9.24" height="4.93" fill="#0073b7"/>
<rect x="1399.46" y="1374.48" width="9.24" height="3.55" fill="#01ff70"/>
<rect x="1412.30" y="1441.09" width="9.24" height="25.41" fill="#f56954"/>
<rect x="1412.30" y="1412.51" width="9.24" height="28.57" fill="#3c8dbc"/>
<rect x="1412.30" y="1408.18" width="9.24" height="4.34" fill="#00a65a"/>
<rect x="1412.30" y="1404.04" width="9.24" height="4.14" fill="#00c0ef"/>
<rect x="1412.30" y="1400.69" width="9.24" height="3.35" fill="#001f3f"/>
<rect x="1412.30" y="1397.73" width="9.24" height="2.96" fill="#39cccc"/>
<rect x="1412.30" y="1395.76" width="9.24" height="1.97" fill="#01ff70"/>
<rect x="1425.13" y="1453.30" width="9.24" height="13.20" fill="#f56954"/>
<rect x="1425.13" y="1374.48" width="9.24" height="78.82" fill="#3c8dbc"/>
<rect x="1425.13" y="1363.84" width="9.24" height="10.64" fill="#00a65a"/>
<rect x="1425.13" y="1357.34" width="9.24" height="6.50" fill="#00c0ef"/>
<rect x="1425.13" y="1350.44" width="9.24" height="6.90" fill="#0073b7"/>
<rect x="1425.13" y="1346.50" width="9.24" height="3.94" fill="#001f3f"/>
<rect x="1425.13" y="1344.92" width="9.24" height="1.58" fill="#39cccc"/>
<rect x="1425.13" y="1343.94" width="9.24" height="0.99" fill="#01ff70"/>
<rect x="1437.97" y="1454.88" width="9.24" height="11.62" fill="#f56954"/>
<rect x="1437.97" y="1386.50" width="9.24" height="68.38" fill="#3c8dbc"/>
<rect x="1437.97" y="1378.42" width="9.24" height="8.08" fill="#00a65a"/>
<rect x="1437.97" y="1373.10" width="9.24" height="5.32" fill="#00c0ef"/>
<rect x="1437.97" y="1365.81" width="9.24" height="7.29" fill="#0073b7"/>
<rect x="1437.97" y="1363.25" width="9.24" height="2.56" fill="#001f3f"/>
<rect x="1437.97" y="1359.31" width="9.24" height="3.94" fill="#39cccc"/>
<rect x="1437.97" y="1357.93" width="9.24" height="1.38" fill="#01ff70"/>
<rect x="1450.80" y="1448.97" width="9.24" height="17.53" fill="#f56954"/>
<rect x="1450.80" y="1383.94" width="9.24" height="65.03" fill="#3c8dbc"/>
<rect x="1450.80" y="1371.52" width="9.24" height="12.41" fill="#00a65a"/>
<rect x="1450.80" y="1364.23" width="9.24" height="7.29" fill="#00c0ef"/>
<rect x="1450.80" y="1361.28" width="9.24" height="2.96" fill="#0073b7"/>
<rect x="1450.80" y="1358.32" width="9.24" height="2.96" fill="#001f3f"/>
<rect x="1450.80" y="1356.35" width="9.24" height="1.97" fill="#39cccc"/>
<rect x="1450.80" y="1350.05" width="9.24" height="6.31" fill="#01ff70"/>
<rect x="1463.64" y="1458.43" width="9.24" height="8.07" fill="#f56954"/>
<rect x="1463.64" y="1447.00" width="9.24" height="11.43" fill="#3c8dbc"/>
<rect x="1463.64" y="1441.68" width="9.24" height="5.32" fill="#00a65a"/>
<rect x="1463.64" y="1431.82" width="9.24" height="9.85" fill="#00c0ef"/>
<rect x="1463.64" y="1430.25" width="9.24" height="1.58" fill="#0073b7"/>
<rect x="1463.64" y="1416.45" width="9.24" height="13.79" fill="#001f3f"/>
<rect x="1463.64" y="1413.89" width="9.24" height="2.56" fill="#01ff70"/>
<rect x="1476.47" y="1458.43" width="9.24" height="8.07" fill="#f56954"/>
<rect x="1476.47" y="1450.35" width="9.24" height="8.08" fill="#3c8dbc"/>
<rect x="1476.47" y="1442.47" width="9.24" height="7.88" fill="#00a65a"/>
<rect x="1476.47" y="1438.13" width="9.24" height="4.34" fill="#00c0ef"/>
<rect x="1476.47" y="1432.22" width="9.24" height="5.91" fill="#001f3f"/>
<rect x="1476.47" y="1431.23" width="9.24" height="0.99" fill="#39cccc"/>
<rect x="1476.47" y="1430.25" width="9.24" height="0.99" fill="#01ff70"/>
<rect x="1489.31" y="1444.63" width="9.24" height="21.87" fill="#f56954"/>
<rect x="1489.31" y="1434.19" width="9.24" height="10.44" fill="#3c8dbc"/>
<rect x="1489.31" y="1416.45" width="9.24" height="17.74" fill="#00a65a"/>
<rect x="1489.31" y="1411.92" width="9.24" height="4.53" fill="#00c0ef"/>
<rect x="1489.31" y="1408.18" width="9.24" height="3.74" fill="#0073b7"/>
<rect x="1489.31" y="1402.66" width="9.24" height="5.52" fill="#001f3f"/>
<rect x="1489.31" y="1392.22" width="9.24" height="10.44" fill="#01ff70"/>
<rect x="1502.14" y="1460.40" width="9.24" height="6.10" fill="#f56954"/>
<rect x="1502.14" y="1452.91" width="9.24" height="7.49" fill="#3c8dbc"/>
<rect x="1502.14" y="1449.36" width="9.24" height="3.55" fill="#00a65a"/>
<rect x="1502.14" y="1443.65" width="9.24" height="5.71" fill="#00c0ef"/>
<rect x="1502.14" y="1441.09" width="9.24" height="2.56" fill="#001f3f"/>
<rect x="1502.14" y="1439.12" width="9.24" height="1.97" fill="#39cccc"/>
<rect x="1502.14" y="1437.14" width="9.24" height="1.97" fill="#01ff70"/>
<rect x="1514.98" y="1455.47" width="9.24" height="11.03" fill="#f56954"/>
<rect x="1514.98" y="1439.12" width="9.24" height="16.36" fill="#3c8dbc"/>
<rect x="1514.98" y="1427.29" width="9.24" height="11.82" fill="#00a65a"/>
<rect x="1514.98" y="1423.35" width="9.24" height="3.94" fill="#00c0ef"/>
<rect x="1514.98" y="1421.77" width="9.24" height="1.58" fill="#0073b7"/>
<rect x="1514.98" y="1419.80" width="9.24" height="1.97" fill="#39cccc"/>
<rect x="1514.98" y="1418.03" width="9.24" height="1.77" fill="#01ff70"/>
<rect x="1527.81" y="1455.47" width="9.24" height="11.03" fill="#f56954"/>
<rect x="1527.81" y="1446.41" width="9.24" height="9.06" fill="#3c8dbc"/>
<rect x="1527.81" y="1431.63" width="9.24" height="14.78" fill="#00a65a"/>
<rect x="1527.81" y="1427.29" width="9.24" height="4.34" fill="#00c0ef"/>
<rect x="1527.81" y="1424.93" width="9.24" height="2.36" fill="#0073b7"/>
<rect x="1527.81" y="1422.96" width="9.24" height="1.97" fill="#39cccc"/>
<rect x="1527.81" y="1416.45" width="9.24" height="6.50" fill="#01ff70"/>
<rect x="1540.65" y="1454.29" width="9.24" height="12.21" fill="#f56954"/>
<rect x="1540.65" y="1441.68" width="9.24" height="12.61" fill="#3c8dbc"/>
<rect x="1540.65" y="1434.78" width="9.24" height="6.90" fill="#00a65a"/>
<rect x="1540.65" y="1429.26" width="9.24" height="5.52" fill="#00c0ef"/>
<rect x="1540.65" y="1421.77" width="9.24" height="7.49" fill="#001f3f"/>
<rect x="1540.65" y="1419.80" width="9.24" height="1.97" fill="#39cccc"/>
<rect x="1540.65" y="1418.42" width="9.24" height="1.38" fill="#01ff70"/>
<rect x="1553.48" y="1448.97" width="9.24" height="17.53" fill="#f56954"/>
<rect x="1553.48" y="1442.07" width="9.24" height="6.90" fill="#3c8dbc"/>
<rect x="1553.48" y="1431.23" width="9.24" height="10.84" fill="#00a65a"/>
<rect x="1553.48" y="1423.35" width="9.24" height="7.88" fill="#00c0ef"/>
<rect x="1553.48" y="1420.99" width="9.24" height="2.36" fill="#001f3f"/>
<rect x="1553.48" y="1419.80" width="9.24" height="1.18" fill="#39cccc"/>
<rect x="1553.48" y="1419.02" width="9.24" height="0.79" fill="#01ff70"/>
<rect x="1566.32" y="1449.56" width="9.24" height="16.94" fill="#f56954"/>
<rect x="1566.32" y="1433.20" width="9.24" height="16.36" fill="#3c8dbc"/>
<rect x="1566.32" y="1424.93" width="9.24" height="8.28" fill="#00a65a"/>
<rect x="1566.32" y="1421.38" width="9.24" height="3.55" fill="#00c0ef"/>
<rect x="1566.32" y="1418.42" width="9.24" height="2.96" fill="#0073b7"/>
<rect x="1566.32" y="1415.47" width="9.24" height="2.96" fill="#001f3f"/>
<rect x="1566.32" y="1413.50" width="9.24" height="1.97" fill="#39cccc"/>
<rect x="1566.32" y="1410.15" width="9.24" height="3.35" fill="#01ff70"/>
<rect x="1579.15" y="1446.41" width="9.24" height="20.09" fill="#f56954"/>
<rect x="1579.15" y="1437.54" width="9.24" height="8.87" fill="#3c8dbc"/>
<rect x="1579.15" y="1433.20" width="9.24" height="4.34" fill="#00a65a"/>
<rect x="1579.15" y="1427.29" width="9.24" height="5.91" fill="#00c0ef"/>
<rect x="1579.15" y="1424.34" width="9.24" height="2.96" fill="#001f3f"/>
<rect x="1579.15" y="1422.96" width="9.24" height="1.38" fill="#39cccc"/>
<rect x="1579.15" y="1411.53" width="9.24" height="11.43" fill="#01ff70"/>
<rect x="1591.99" y="1452.91" width="9.24" height="13.59" fill="#f56954"/>
<rect x="1591.99" y="1424.34" width="9.24" height="28.57" fill="#3c8dbc"/>
<rect x="1591.99" y="1390.44" width="9.24" height="33.89" fill="#00a65a"/>
<rect x="1591.99" y="1387.88" width="9.24" height="2.56" fill="#00c0ef"/>
<rect x="1591.99" y="1385.91" width="9.24" height="1.97" fill="#0073b7"/>
<rect x="1591.99" y="1383.94" width="9.24" height="1.97" fill="#001f3f"/>
<rect x="1591.99" y="1381.57" width="9.24" height="2.36" fill="#39cccc"/>
<rect x="1591.99" y="1379.60" width="9.24" height="1.97" fill="#01ff70"/>
<rect x="1604.82" y="1451.92" width="9.24" height="14.58" fill="#f56954"/>
<rect x="1604.82" y="1420.99" width="9.24" height="30.94" fill="#3c8dbc"/>
<rect x="1604.82" y="1350.44" width="9.24" height="70.55" fill="#00a65a"/>
<rect x="1604.82" y="1344.13" width="9.24" height="6.31" fill="#00c0ef"/>
<rect x="1604.82" y="1341.57" width="9.24" height="2.56" fill="#001f3f"/>
<rect x="1604.82" y="1340.19" width="9.24" height="1.38" fill="#39cccc"/>
<rect x="1604.82" y="1331.33" width="9.24" height="8.87" fill="#01ff70"/>
<rect x="1617.66" y="1453.89" width="9.24" height="12.61" fill="#f56954"/>
<rect x="1617.66" y="1397.34" width="9.24" height="56.56" fill="#3c8dbc"/>
<rect x="1617.66" y="1381.97" width="9.24" height="15.37" fill="#00a65a"/>
<rect x="1617.66" y="1374.09" width="9.24" height="7.88" fill="#00c0ef"/>
<rect x="1617.66" y="1372.12" width="9.24" height="1.97" fill="#0073b7"/>
<rect x="1617.66" y="1370.15" width="9.24" height="1.97" fill="#39cccc"/>
<rect x="1617.66" y="1363.25" width="9.24" height="6.90" fill="#01ff70"/>
<rect x="1630.49" y="1445.62" width="9.24" height="20.88" fill="#f56954"/>
<rect x="1630.49" y="1423.35" width="9.24" height="22.27" fill="#3c8dbc"/>
<rect x="1630.49" y="1413.10" width="9.24" height="10.25" fill="#00a65a"/>
<rect x="1630.49" y="1403.64" width="9.24" height="9.46" fill="#00c0ef"/>
<rect x="1630.49" y="1401.28" width="9.24" height="2.36" fill="#0073b7"/>
<rect x="1630.49" y="1398.72" width="9.24" height="2.56" fill="#001f3f"/>
<rect x="1630.49" y="1396.75" width="9.24" height="1.97" fill="#01ff70"/>
<rect x="1643.33" y="1460.79" width="9.24" height="5.71" fill="#f56954"/>
<rect x="1643.33" y="1447.39" width="9.24" height="13.40" fill="#3c8dbc"/>
<rect x="1643.33" y="1437.54" width="9.24" height="9.85" fill="#00a65a"/>
<rect x="1643.33" y="1433.79" width="9.24" height="3.74" fill="#00c0ef"/>
<rect x="1643.33" y="1429.26" width="9.24" height="4.53" fill="#001f3f"/>
<rect x="1643.33" y="1426.90" width="9.24" height="2.36" fill="#01ff70"/>
<rect x="1656.16" y="1455.27" width="9.24" height="11.23" fill="#f56954"/>
<rect x="1656.16" y="1438.13" width="9.24" height="17.14" fill="#3c8dbc"/>
<rect x="1656.16" y="1431.63" width="9.24" height="6.50" fill="#00a65a"/>
<rect x="1656.16" y="1428.87" width="9.24" height="2.76" fill="#00c0ef"/>
<rect x="1656.16" y="1427.69" width="9.24" height="1.18" fill="#001f3f"/>
<rect x="1656.16" y="1426.31" width="9.24" height="1.38" fill="#39cccc"/>
<rect x="1656.16" y="1425.32" width="9.24" height="0.99" fill="#01ff70"/>
<rect x="1669.00" y="1453.89" width="9.24" height="12.61" fill="#f56954"/>
<rect x="1669.00" y="1432.22" width="9.24" height="21.68" fill="#3c8dbc"/>
<rect x="1669.00" y="1409.56" width="9.24" height="22.66" fill="#00a65a"/>
<rect x="1669.00" y="1405.62" width="9.24" height="3.94" fill="#00c0ef"/>
<rect x="1669.00" y="1403.64" width="9.24" height="1.97" fill="#001f3f"/>
<rect x="1669.00" y="1402.66" width="9.24" height="0.99" fill="#39cccc"/>
<rect x="1669.00" y="1401.08" width="9.24" height="1.58" fill="#01ff70"/>
<rect x="1681.83" y="1459.81" width="9.24" height="6.69" fill="#f56954"/>
<rect x="1681.83" y="1442.07" width="9.24" height="17.74" fill="#3c8dbc"/>
<rect x="1681.83" y="1430.64" width="9.24" height="11.43" fill="#00a65a"/>
<rect x="1681.83" y="1424.34" width="9.24" height="6.31" fill="#00c0ef"/>
<rect x="1681.83" y="1420.39" width="9.24" height="3.94" fill="#0073b7"/>
<rect x="1681.83" y="1419.02" width="9.24" height="1.38" fill="#001f3f"/>
<rect x="1681.83" y="1417.44" width="9.24" height="1.58" fill="#39cccc"/>
<rect x="1681.83" y="1405.62" width="9.24" height="11.82" fill="#01ff70"/>
<rect x="1694.67" y="1454.29" width="9.24" height="12.21" fill="#f56954"/>
<rect x="1694.67" y="1433.20" width="9.24" height="21.09" fill="#3c8dbc"/>
<rect x="1694.67" y="1427.29" width="9.24" height="5.91" fill="#00a65a"/>
<rect x="1694.67" y="1419.02" width="9.24" height="8.28" fill="#00c0ef"/>
<rect x="1694.67" y="1417.44" width="9.24" height="1.58" fill="#001f3f"/>
<rect x="1694.67" y="1415.47" width="9.24" height="1.97" fill="#39cccc"/>
<rect x="1694.67" y="1413.10" width="9.24" height="2.36" fill="#01ff70"/>
<rect x="1707.50" y="1442.07" width="9.24" height="24.43" fill="#f56954"/>
<rect x="1707.50" y="1419.41" width="9.24" height="22.66" fill="#3c8dbc"/>
<rect x="1707.50" y="1398.13" width="9.24" height="21.28" fill="#00a65a"/>
<rect x="1707.50" y="1392.41" width="9.24" height="5.71" fill="#00c0ef"/>
<rect x="1707.50" y="1387.88" width="9.24" height="4.53" fill="#0073b7"/>
<rect x="1707.50" y="1386.90" width="9.24" height="0.99" fill="#39cccc"/>
<rect x="1707.50" y="1385.52" width="9.24" height="1.38" fill="#01ff70"/>
<rect x="1720.34" y="1438.13" width="9.24" height="28.37" fill="#f56954"/>
<rect x="1720.34" y="1415.07" width="9.24" height="23.06" fill="#3c8dbc"/>
<rect x="1720.34" y="1326.40" width="9.24" height="88.68" fill="#00a65a"/>
<rect x="1720.34" y="1322.85" width="9.24" height="3.55" fill="#00c0ef"/>
<rect x="1720.34" y="1319.30" width="9.24" height="3.55" fill="#0073b7"/>
<rect x="1720.34" y="1316.94" width="9.24" height="2.36" fill="#001f3f"/>
<rect x="1720.34" y="1314.97" width="9.24" height="1.97" fill="#39cccc"/>
<rect x="1720.34" y="1312.60" width="9.24" height="2.36" fill="#01ff70"/>
<rect x="1733.17" y="1452.32" width="9.24" height="14.18" fill="#f56954"/>
<rect x="1733.17" y="1433.79" width="9.24" height="18.52" fill="#3c8dbc"/>
<rect x="1733.17" y="1359.90" width="9.24" height="73.90" fill="#00a65a"/>
<rect x="1733.17" y="1355.37" width="9.24" height="4.53" fill="#00c0ef"/>
<rect x="1733.17" y="1352.41" width="9.24" height="2.96" fill="#0073b7"/>
<rect x="1733.17" y="1345.51" width="9.24" height="6.90" fill="#001f3f"/>
<rect x="1733.17" y="1343.54" width="9.24" height="1.97" fill="#01ff70"/>
<rect x="1746.01" y="1448.97" width="9.24" height="17.53" fill="#f56954"/>
<rect x="1746.01" y="1427.29" width="9.24" height="21.68" fill="#3c8dbc"/>
<rect x="1746.01" y="1340.98" width="9.24" height="86.31" fill="#00a65a"/>
<rect x="1746.01" y="1336.25" width="9.24" height="4.73" fill="#00c0ef"/>
<rect x="1746.01" y="1332.70" width="9.24" height="3.55" fill="#0073b7"/>
<rect x="1746.01" y="1330.34" width="9.24" height="2.36" fill="#39cccc"/>
<rect x="1746.01" y="1328.76" width="9.24" height="1.58" fill="#01ff70"/>
<rect x="1758.84" y="1422.76" width="9.24" height="43.74" fill="#f56954"/>
<rect x="1758.84" y="1394.38" width="9.24" height="28.38" fill="#3c8dbc"/>
<rect x="1758.84" y="1329.75" width="9.24" height="64.63" fill="#00a65a"/>
<rect x="1758.84" y="1324.82" width="9.24" height="4.93" fill="#00c0ef"/>
<rect x="1758.84" y="1316.94" width="9.24" height="7.88" fill="#001f3f"/>
<rect x="1758.84" y="1314.97" width="9.24" height="1.97" fill="#39cccc"/>
<rect x="1758.84" y="1309.65" width="9.24" height="5.32" fill="#01ff70"/>
<rect x="1771.68" y="1416.06" width="9.24" height="50.44" fill="#f56954"/>
<rect x="1771.68" y="1388.47" width="9.24" height="27.59" fill="#3c8dbc"/>
<rect x="1771.68" y="1300.78" width="9.24" height="87.69" fill="#00a65a"/>
<rect x="1771.68" y="1294.87" width="9.24" height="5.91" fill="#00c0ef"/>
<rect x="1771.68" y="1291.72" width="9.24" height="3.15" fill="#39cccc"/>
<rect x="1771.68" y="1276.54" width="9.24" height="15.17" fill="#01ff70"/>
<rect x="1784.51" y="1429.26" width="9.24" height="37.24" fill="#f56954"/>
<rect x="1784.51" y="1411.13" width="9.24" height="18.13" fill="#3c8dbc"/>
<rect x="1784.51" y="1398.72" width="9.24" height="12.41" fill="#00a65a"/>
<rect x="1784.51" y="1393.79" width="9.24" height="4.93" fill="#00c0ef"/>
<rect x="1784.51" y="1390.25" width="9.24" height="3.55" fill="#0073b7"/>
<rect x="1784.51" y="1384.33" width="9.24" height="5.91" fill="#001f3f"/>
<rect x="1784.51" y="1380.00" width="9.24" height="4.34" fill="#39cccc"/>
<rect x="1784.51" y="1379.01" width="9.24" height="0.99" fill="#01ff70"/>
<rect x="1797.35" y="1422.37" width="9.24" height="44.13" fill="#f56954"/>
<rect x="1797.35" y="1397.34" width="9.24" height="25.03" fill="#3c8dbc"/>
<rect x="1797.35" y="1388.27" width="9.24" height="9.06" fill="#00a65a"/>
<rect x="1797.35" y="1385.91" width="9.24" height="2.36" fill="#00c0ef"/>
<rect x="1797.35" y="1378.03" width="9.24" height="7.88" fill="#0073b7"/>
<rect x="1797.35" y="1375.66" width="9.24" height="2.36" fill="#001f3f"/>
<rect x="1797.35" y="1373.10" width="9.24" height="2.56" fill="#39cccc"/>
<rect x="1797.35" y="1363.84" width="9.24" height="9.26" fill="#01ff70"/>
<rect x="1810.18" y="1406.60" width="9.24" height="59.90" fill="#f56954"/>
<rect x="1810.18" y="1385.52" width="9.24" height="21.09" fill="#3c8dbc"/>
<rect x="1810.18" y="1380.39" width="9.24" height="5.12" fill="#00a65a"/>
<rect x="1810.18" y="1378.42" width="9.24" height="1.97" fill="#00c0ef"/>
<rect x="1810.18" y="1372.12" width="9.24" height="6.31" fill="#001f3f"/>
<rect x="1810.18" y="1370.15" width="9.24" height="1.97" fill="#39cccc"/>
<rect x="1810.18" y="1367.78" width="9.24" height="2.36" fill="#01ff70"/>
<rect x="1823.02" y="1380.00" width="9.24" height="86.50" fill="#f56954"/>
<rect x="1823.02" y="1354.97" width="9.24" height="25.03" fill="#3c8dbc"/>
<rect x="1823.02" y="1306.69" width="9.24" height="48.28" fill="#00a65a"/>
<rect x="1823.02" y="1302.16" width="9.24" height="4.53" fill="#00c0ef"/>
<rect x="1823.02" y="1299.20" width="9.24" height="2.96" fill="#0073b7"/>
<rect x="1823.02" y="1297.23" width="9.24" height="1.97" fill="#001f3f"/>
<rect x="1823.02" y="1293.29" width="9.24" height="3.94" fill="#39cccc"/>
<rect x="1823.02" y="1290.93" width="9.24" height="2.36" fill="#01ff70"/>
<rect x="1835.85" y="1361.28" width="9.24" height="105.22" fill="#f56954"/>
<rect x="1835.85" y="1332.11" width="9.24" height="29.16" fill="#3c8dbc"/>
<rect x="1835.85" y="1315.36" width="9.24" height="16.75" fill="#00a65a"/>
<rect x="1835.85" y="1310.63" width="9.24" height="4.73" fill="#00c0ef"/>
<rect x="1835.85" y="1307.09" width="9.24" height="3.55" fill="#001f3f"/>
<rect x="1835.85" y="1302.16" width="9.24" height="4.93" fill="#39cccc"/>
<rect x="1835.85" y="1295.85" width="9.24" height="6.31" fill="#01ff70"/>
<rect x="1848.69" y="1392.41" width="9.24" height="74.09" fill="#f56954"/>
<rect x="1848.69" y="1367.19" width="9.24" height="25.22" fill="#3c8dbc"/>
<rect x="1848.69" y="1355.76" width="9.24" height="11.43" fill="#00a65a"/>
<rect x="1848.69" y="1347.48" width="9.24" height="8.28" fill="#00c0ef"/>
<rect x="1848.69" y="1345.12" width="9.24" height="2.36" fill="#001f3f"/>
<rect x="1848.69" y="1342.16" width="9.24" height="2.96" fill="#39cccc"/>
<rect x="1848.69" y="1338.22" width="9.24" height="3.94" fill="#01ff70"/>
<rect x="1861.52" y="1382.95" width="9.24" height="83.55" fill="#f56954"/>
<rect x="1861.52" y="1363.25" width="9.24" height="19.71" fill="#3c8dbc"/>
<rect x="1861.52" y="1355.96" width="9.24" height="7.29" fill="#00a65a"/>
<rect x="1861.52" y="1349.45" width="9.24" height="6.50" fill="#00c0ef"/>
<rect x="1861.52" y="1346.50" width="9.24" height="2.96" fill="#001f3f"/>
<rect x="1861.52" y="1343.54" width="9.24" height="2.96" fill="#39cccc"/>
<rect x="1861.52" y="1342.16" width="9.24" height="1.38" fill="#01ff70"/>
<rect x="1874.36" y="1409.56" width="9.24" height="56.94" fill="#f56954"/>
<rect x="1874.36" y="1385.32" width="9.24" height="24.24" fill="#3c8dbc"/>
<rect x="1874.36" y="1379.60" width="9.24" height="5.71" fill="#00a65a"/>
<rect x="1874.36" y="1377.04" width="9.24" height="2.56" fill="#00c0ef"/>
<rect x="1874.36" y="1373.10" width="9.24" height="3.94" fill="#0073b7"/>
<rect x="1874.36" y="1370.15" width="9.24" height="2.96" fill="#39cccc"/>
<rect x="1874.36" y="1367.78" width="9.24" height="2.36" fill="#01ff70"/>
<rect x="1887.19" y="1395.17" width="9.24" height="71.33" fill="#f56954"/>
<rect x="1887.19" y="1373.10" width="9.24" height="22.07" fill="#3c8dbc"/>
<rect x="1887.19" y="1368.57" width="9.24" height="4.53" fill="#00a65a"/>
<rect x="1887.19" y="1363.25" width="9.24" height="5.32" fill="#00c0ef"/>
<rect x="1887.19" y="1356.35" width="9.24" height="6.90" fill="#001f3f"/>
<rect x="1887.19" y="1353.99" width="9.24" height="2.36" fill="#39cccc"/>
<rect x="1887.19" y="1351.82" width="9.24" height="2.17" fill="#01ff70"/>
<rect x="1900.03" y="1407.19" width="9.24" height="59.31" fill="#f56954"/>
<rect x="1900.03" y="1388.27" width="9.24" height="18.92" fill="#3c8dbc"/>
<rect x="1900.03" y="1378.42" width="9.24" height="9.85" fill="#00a65a"/>
<rect x="1900.03" y="1373.10" width="9.24" height="5.32" fill="#00c0ef"/>
<rect x="1900.03" y="1365.22" width="9.24" height="7.88" fill="#001f3f"/>
<rect x="1900.03" y="1360.29" width="9.24" height="4.93" fill="#39cccc"/>
<rect x="1900.03" y="1347.88" width="9.24" height="12.41" fill="#01ff70"/>
<rect x="1912.86" y="1381.38" width="9.24" height="85.12" fill="#f56954"/>
<rect x="1912.86" y="1358.72" width="9.24" height="22.66" fill="#3c8dbc"/>
<rect x="1912.86" y="1301.57" width="9.24" height="57.15" fill="#00a65a"/>
<rect x="1912.86" y="1292.31" width="9.24" height="9.26" fill="#00c0ef"/>
<rect x="1912.86" y="1288.96" width="9.24" height="3.35" fill="#001f3f"/>
<rect x="1912.86" y="1285.41" width="9.24" height="3.55" fill="#39cccc"/>
<rect x="1912.86" y="1280.09" width="9.24" height="5.32" fill="#01ff70"/>
<rect x="1925.70" y="1358.91" width="9.24" height="107.59" fill="#f56954"/>
<rect x="1925.70" y="1335.27" width="9.24" height="23.65" fill="#3c8dbc"/>
<rect x="1925.70" y="1290.34" width="9.24" height="44.93" fill="#00a65a"/>
<rect x="1925.70" y="1279.89" width="9.24" height="10.44" fill="#00c0ef"/>
<rect x="1925.70" y="1270.63" width="9.24" height="9.26" fill="#001f3f"/>
<rect x="1925.70" y="1266.10" width="9.24" height="4.53" fill="#01ff70"/>
<rect x="1938.53" y="1409.16" width="9.24" height="57.34" fill="#f56954"/>
<rect x="1938.53" y="1390.44" width="9.24" height="18.72" fill="#3c8dbc"/>
<rect x="1938.53" y="1377.63" width="9.24" height="12.81" fill="#00a65a"/>
<rect x="1938.53" y="1369.75" width="9.24" height="7.88" fill="#00c0ef"/>
<rect x="1938.53" y="1364.23" width="9.24" height="5.52" fill="#001f3f"/>
<rect x="1938.53" y="1361.87" width="9.24" height="2.36" fill="#39cccc"/>
<rect x="1938.53" y="1360.29" width="9.24" height="1.58" fill="#01ff70"/>
<rect x="1951.37" y="1371.13" width="9.24" height="95.37" fill="#f56954"/>
<rect x="1951.37" y="1342.95" width="9.24" height="28.18" fill="#3c8dbc"/>
<rect x="1951.37" y="1274.57" width="9.24" height="68.38" fill="#00a65a"/>
<rect x="1951.37" y="1268.07" width="9.24" height="6.50" fill="#00c0ef"/>
<rect x="1951.37" y="1263.73" width="9.24" height="4.34" fill="#001f3f"/>
<rect x="1951.37" y="1261.76" width="9.24" height="1.97" fill="#39cccc"/>
<rect x="1951.37" y="1259.79" width="9.24" height="1.97" fill="#01ff70"/>
<rect x="1964.20" y="1416.06" width="9.24" height="50.44" fill="#f56954"/>
<rect x="1964.20" y="1393.79" width="9.24" height="22.27" fill="#3c8dbc"/>
<rect x="1964.20" y="1383.55" width="9.24" height="10.25" fill="#00a65a"/>
<rect x="1964.20" y="1377.04" width="9.24" height="6.50" fill="#00c0ef"/>
<rect x="1964.20" y="1373.10" width="9.24" height="3.94" fill="#001f3f"/>
<rect x="1964.20" y="1370.54" width="9.24" height="2.56" fill="#39cccc"/>
<rect x="1964.20" y="1365.22" width="9.24" height="5.32" fill="#01ff70"/>
<rect x="1977.04" y="1396.35" width="9.24" height="70.15" fill="#f56954"/>
<rect x="1977.04" y="1378.03" width="9.24" height="18.33" fill="#3c8dbc"/>
<rect x="1977.04" y="1366.80" width="9.24" height="11.23" fill="#00a65a"/>
<rect x="1977.04" y="1361.28" width="9.24" height="5.52" fill="#00c0ef"/>
<rect x="1977.04" y="1358.32" width="9.24" height="2.96" fill="#001f3f"/>
<rect x="1977.04" y="1355.96" width="9.24" height="2.36" fill="#39cccc"/>
<rect x="1977.04" y="1353.00" width="9.24" height="2.96" fill="#01ff70"/>
<rect x="1989.87" y="1402.66" width="9.24" height="63.84" fill="#f56954"/>
<rect x="1989.87" y="1380.00" width="9.24" height="22.66" fill="#3c8dbc"/>
<rect x="1989.87" y="1369.55" width="9.24" height="10.44" fill="#00a65a"/>
<rect x="1989.87" y="1363.25" width="9.24" height="6.31" fill="#00c0ef"/>
<rect x="1989.87" y="1360.69" width="9.24" height="2.56" fill="#001f3f"/>
<rect x="1989.87" y="1358.32" width="9.24" height="2.36" fill="#39cccc"/>
<rect x="1989.87" y="1351.82" width="9.24" height="6.50" fill="#01ff70"/>
<rect x="2002.71" y="1411.13" width="9.24" height="55.37" fill="#f56954"/>
<rect x="2002.71" y="1384.92" width="9.24" height="26.21" fill="#3c8dbc"/>
<rect x="2002.71" y="1372.71" width="9.24" height="12.22" fill="#00a65a"/>
<rect x="2002.71" y="1356.35" width="9.24" height="16.36" fill="#00c0ef"/>
<rect x="2002.71" y="1353.40" width="9.24" height="2.96" fill="#0073b7"/>
<rect x="2002.71" y="1351.42" width="9.24" height="1.97" fill="#39cccc"/>
<rect x="2002.71" y="1340.00" width="9.24" height="11.43" fill="#01ff70"/>
<rect x="2015.54" y="1314.97" width="9.24" height="151.53" fill="#f56954"/>
<rect x="2015.54" y="1291.72" width="9.24" height="23.25" fill="#3c8dbc"/>
<rect x="2015.54" y="1279.50" width="9.24" height="12.22" fill="#00a65a"/>
<rect x="2015.54" y="1272.60" width="9.24" height="6.90" fill="#00c0ef"/>
<rect x="2015.54" y="1269.65" width="9.24" height="2.96" fill="#0073b7"/>
<rect x="2015.54" y="1267.68" width="9.24" height="1.97" fill="#001f3f"/>
<rect x="2015.54" y="1265.71" width="9.24" height="1.97" fill="#39cccc"/>
<rect x="2015.54" y="1265.11" width="9.24" height="0.59" fill="#01ff70"/>
<rect x="2028.38" y="1380.00" width="9.24" height="86.50" fill="#f56954"/>
<rect x="2028.38" y="1352.02" width="9.24" height="27.98" fill="#3c8dbc"/>
<rect x="2028.38" y="1344.53" width="9.24" height="7.49" fill="#00a65a"/>
<rect x="2028.38" y="1339.01" width="9.24" height="5.52" fill="#00c0ef"/>
<rect x="2028.38" y="1334.67" width="9.24" height="4.34" fill="#001f3f"/>
<rect x="2028.38" y="1332.70" width="9.24" height="1.97" fill="#39cccc"/>
<rect x="2028.38" y="1331.13" width="9.24" height="1.58" fill="#01ff70"/>
<rect x="2041.21" y="1391.23" width="9.24" height="75.27" fill="#f56954"/>
<rect x="2041.21" y="1369.16" width="9.24" height="22.07" fill="#3c8dbc"/>
<rect x="2041.21" y="1353.99" width="9.24" height="15.17" fill="#00a65a"/>
<rect x="2041.21" y="1348.07" width="9.24" height="5.91" fill="#00c0ef"/>
<rect x="2041.21" y="1343.54" width="9.24" height="4.53" fill="#001f3f"/>
<rect x="2041.21" y="1342.16" width="9.24" height="1.38" fill="#39cccc"/>
<rect x="2041.21" y="1336.25" width="9.24" height="5.91" fill="#01ff70"/>
<rect x="2054.05" y="1380.98" width="9.24" height="85.52" fill="#f56954"/>
<rect x="2054.05" y="1357.93" width="9.24" height="23.06" fill="#3c8dbc"/>
<rect x="2054.05" y="1351.82" width="9.24" height="6.11" fill="#00a65a"/>
<rect x="2054.05" y="1346.50" width="9.24" height="5.32" fill="#00c0ef"/>
<rect x="2054.05" y="1344.13" width="9.24" height="2.36" fill="#001f3f"/>
<rect x="2054.05" y="1341.57" width="9.24" height="2.56" fill="#39cccc"/>
<rect x="2054.05" y="1339.21" width="9.24" height="2.36" fill="#01ff70"/>
<rect x="2066.88" y="1295.26" width="9.24" height="171.24" fill="#f56954"/>
<rect x="2066.88" y="1271.22" width="9.24" height="24.04" fill="#3c8dbc"/>
<rect x="2066.88" y="1259.79" width="9.24" height="11.43" fill="#00a65a"/>
<rect x="2066.88" y="1243.04" width="9.24" height="16.75" fill="#00c0ef"/>
<rect x="2066.88" y="1238.12" width="9.24" height="4.93" fill="#001f3f"/>
<rect x="2066.88" y="1235.16" width="9.24" height="2.96" fill="#39cccc"/>
<rect x="2066.88" y="1229.25" width="9.24" height="5.91" fill="#01ff70"/>
<rect x="2079.72" y="1383.35" width="9.24" height="83.15" fill="#f56954"/>
<rect x="2079.72" y="1357.93" width="9.24" height="25.42" fill="#3c8dbc"/>
<rect x="2079.72" y="1345.91" width="9.24" height="12.02" fill="#00a65a"/>
<rect x="2079.72" y="1339.01" width="9.24" height="6.90" fill="#00c0ef"/>
<rect x="2079.72" y="1336.65" width="9.24" height="2.36" fill="#0073b7"/>
<rect x="2079.72" y="1326.40" width="9.24" height="10.25" fill="#001f3f"/>
<rect x="2079.72" y="1320.88" width="9.24" height="5.52" fill="#39cccc"/>
<rect x="2079.72" y="1317.93" width="9.24" height="2.96" fill="#01ff70"/>
<rect x="2092.55" y="1381.97" width="9.24" height="84.53" fill="#f56954"/>
<rect x="2092.55" y="1363.64" width="9.24" height="18.33" fill="#3c8dbc"/>
<rect x="2092.55" y="1298.61" width="9.24" height="65.03" fill="#00a65a"/>
<rect x="2092.55" y="1292.90" width="9.24" height="5.71" fill="#00c0ef"/>
<rect x="2092.55" y="1290.93" width="9.24" height="1.97" fill="#0073b7"/>
<rect x="2092.55" y="1275.16" width="9.24" height="15.76" fill="#001f3f"/>
<rect x="2092.55" y="1273.19" width="9.24" height="1.97" fill="#39cccc"/>
<rect x="2092.55" y="1270.63" width="9.24" height="2.56" fill="#01ff70"/>
<rect x="2105.39" y="1388.87" width="9.24" height="77.63" fill="#f56954"/>
<rect x="2105.39" y="1363.84" width="9.24" height="25.03" fill="#3c8dbc"/>
<rect x="2105.39" y="1318.52" width="9.24" height="45.32" fill="#00a65a"/>
<rect x="2105.39" y="1312.60" width="9.24" height="5.91" fill="#00c0ef"/>
<rect x="2105.39" y="1309.06" width="9.24" height="3.55" fill="#001f3f"/>
<rect x="2105.39" y="1307.09" width="9.24" height="1.97" fill="#39cccc"/>
<rect x="2105.39" y="1297.23" width="9.24" height="9.85" fill="#01ff70"/>
<rect x="2118.22" y="1389.46" width="9.24" height="77.04" fill="#f56954"/>
<rect x="2118.22" y="1364.23" width="9.24" height="25.22" fill="#3c8dbc"/>
<rect x="2118.22" y="1353.79" width="9.24" height="10.44" fill="#00a65a"/>
<rect x="2118.22" y="1347.48" width="9.24" height="6.31" fill="#00c0ef"/>
<rect x="2118.22" y="1342.56" width="9.24" height="4.93" fill="#001f3f"/>
<rect x="2118.22" y="1340.19" width="9.24" height="2.36" fill="#39cccc"/>
<rect x="2118.22" y="1337.63" width="9.24" height="2.56" fill="#01ff70"/>
<rect x="2131.06" y="1405.02" width="9.24" height="61.48" fill="#f56954"/>
<rect x="2131.06" y="1383.94" width="9.24" height="21.09" fill="#3c8dbc"/>
<rect x="2131.06" y="1379.01" width="9.24" height="4.93" fill="#00a65a"/>
<rect x="2131.06" y="1374.68" width="9.24" height="4.34" fill="#00c0ef"/>
<rect x="2131.06" y="1372.12" width="9.24" height="2.56" fill="#001f3f"/>
<rect x="2131.06" y="1369.75" width="9.24" height="2.36" fill="#39cccc"/>
<rect x="2131.06" y="1368.17" width="9.24" height="1.58" fill="#01ff70"/>
<rect x="2143.89" y="1378.03" width="9.24" height="88.47" fill="#f56954"/>
<rect x="2143.89" y="1354.38" width="9.24" height="23.65" fill="#3c8dbc"/>
<rect x="2143.89" y="1345.91" width="9.24" height="8.47" fill="#00a65a"/>
<rect x="2143.89" y="1342.16" width="9.24" height="3.74" fill="#00c0ef"/>
<rect x="2143.89" y="1337.24" width="9.24" height="4.93" fill="#001f3f"/>
<rect x="2143.89" y="1334.67" width="9.24" height="2.56" fill="#39cccc"/>
<rect x="2143.89" y="1328.76" width="9.24" height="5.91" fill="#01ff70"/>
<rect x="2156.73" y="1390.25" width="9.24" height="76.25" fill="#f56954"/>
<rect x="2156.73" y="1361.28" width="9.24" height="28.97" fill="#3c8dbc"/>
<rect x="2156.73" y="1346.10" width="9.24" height="15.17" fill="#00a65a"/>
<rect x="2156.73" y="1337.63" width="9.24" height="8.47" fill="#00c0ef"/>
<rect x="2156.73" y="1335.66" width="9.24" height="1.97" fill="#001f3f"/>
<rect x="2156.73" y="1332.31" width="9.24" height="3.35" fill="#39cccc"/>
<rect x="2156.73" y="1330.14" width="9.24" height="2.17" fill="#01ff70"/>
<rect x="2169.56" y="1394.78" width="9.24" height="71.72" fill="#f56954"/>
<rect x="2169.56" y="1370.54" width="9.24" height="24.24" fill="#3c8dbc"/>
<rect x="2169.56" y="1363.25" width="9.24" height="7.29" fill="#00a65a"/>
<rect x="2169.56" y="1355.37" width="9.24" height="7.88" fill="#00c0ef"/>
<rect x="2169.56" y="1353.40" width="9.24" height="1.97" fill="#39cccc"/>
<rect x="2169.56" y="1351.03" width="9.24" height="2.36" fill="#01ff70"/>
<rect x="2182.40" y="1347.88" width="9.24" height="118.62" fill="#f56954"/>
<rect x="2182.40" y="1327.19" width="9.24" height="20.69" fill="#3c8dbc"/>
<rect x="2182.40" y="1316.94" width="9.24" height="10.25" fill="#00a65a"/>
<rect x="2182.40" y="1312.01" width="9.24" height="4.93" fill="#00c0ef"/>
<rect x="2182.40" y="1308.07" width="9.24" height="3.94" fill="#001f3f"/>
<rect x="2182.40" y="1306.10" width="9.24" height="1.97" fill="#39cccc"/>
<rect x="2182.40" y="1305.12" width="9.24" height="0.99" fill="#01ff70"/>
<rect x="2195.23" y="1369.55" width="9.24" height="96.95" fill="#f56954"/>
<rect x="2195.23" y="1347.88" width="9.24" height="21.68" fill="#3c8dbc"/>
<rect x="2195.23" y="1337.63" width="9.24" height="10.25" fill="#00a65a"/>
<rect x="2195.23" y="1332.31" width="9.24" height="5.32" fill="#00c0ef"/>
<rect x="2195.23" y="1329.75" width="9.24" height="2.56" fill="#001f3f"/>
<rect x="2195.23" y="1327.78" width="9.24" height="1.97" fill="#39cccc"/>
<rect x="2195.23" y="1325.22" width="9.24" height="2.56" fill="#01ff70"/>
<rect x="2208.07" y="1411.53" width="9.24" height="54.97" fill="#f56954"/>
<rect x="2208.07" y="1393.79" width="9.24" height="17.74" fill="#3c8dbc"/>
<rect x="2208.07" y="1379.41" width="9.24" height="14.39" fill="#00a65a"/>
<rect x="2208.07" y="1372.71" width="9.24" height="6.70" fill="#00c0ef"/>
<rect x="2208.07" y="1368.17" width="9.24" height="4.53" fill="#001f3f"/>
<rect x="2208.07" y="1366.60" width="9.24" height="1.58" fill="#39cccc"/>
<rect x="2208.07" y="1355.37" width="9.24" height="11.23" fill="#01ff70"/>
<rect x="2220.90" y="1392.22" width="9.24" height="74.28" fill="#f56954"/>
<rect x="2220.90" y="1364.82" width="9.24" height="27.39" fill="#3c8dbc"/>
<rect x="2220.90" y="1348.86" width="9.24" height="15.96" fill="#00a65a"/>
<rect x="2220.90" y="1342.56" width="9.24" height="6.31" fill="#00c0ef"/>
<rect x="2220.90" y="1336.65" width="9.24" height="5.91" fill="#001f3f"/>
<rect x="2220.90" y="1334.67" width="9.24" height="1.97" fill="#39cccc"/>
<rect x="2220.90" y="1328.76" width="9.24" height="5.91" fill="#01ff70"/>
<rect x="2233.74" y="1391.23" width="9.24" height="75.27" fill="#f56954"/>
<rect x="2233.74" y="1363.25" width="9.24" height="27.98" fill="#3c8dbc"/>
<rect x="2233.74" y="1353.79" width="9.24" height="9.46" fill="#00a65a"/>
<rect x="2233.74" y="1348.47" width="9.24" height="5.32" fill="#00c0ef"/>
<rect x="2233.74" y="1347.09" width="9.24" height="1.38" fill="#001f3f"/>
<rect x="2233.74" y="1345.51" width="9.24" height="1.58" fill="#39cccc"/>
<rect x="2233.74" y="1340.59" width="9.24" height="4.93" fill="#01ff70"/>
<rect x="2246.57" y="1386.90" width="9.24" height="79.60" fill="#f56954"/>
<rect x="2246.57" y="1367.58" width="9.24" height="19.31" fill="#3c8dbc"/>
<rect x="2246.57" y="1357.34" width="9.24" height="10.25" fill="#00a65a"/>
<rect x="2246.57" y="1348.86" width="9.24" height="8.47" fill="#00c0ef"/>
<rect x="2246.57" y="1347.48" width="9.24" height="1.38" fill="#001f3f"/>
<rect x="2246.57" y="1344.92" width="9.24" height="2.56" fill="#01ff70"/>
<rect x="2259.41" y="1388.47" width="9.24" height="78.03" fill="#f56954"/>
<rect x="2259.41" y="1373.50" width="9.24" height="14.98" fill="#3c8dbc"/>
<rect x="2259.41" y="1363.25" width="9.24" height="10.25" fill="#00a65a"/>
<rect x="2259.41" y="1356.35" width="9.24" height="6.90" fill="#001f3f"/>
<rect x="2259.41" y="1352.41" width="9.24" height="3.94" fill="#39cccc"/>
<rect x="2259.41" y="1350.05" width="9.24" height="2.36" fill="#01ff70"/>
<rect x="2272.24" y="1373.10" width="9.24" height="93.40" fill="#f56954"/>
<rect x="2272.24" y="1347.09" width="9.24" height="26.01" fill="#3c8dbc"/>
<rect x="2272.24" y="1340.98" width="9.24" height="6.11" fill="#00a65a"/>
<rect x="2272.24" y="1335.66" width="9.24" height="5.32" fill="#00c0ef"/>
<rect x="2272.24" y="1333.69" width="9.24" height="1.97" fill="#001f3f"/>
<rect x="2272.24" y="1330.34" width="9.24" height="3.35" fill="#01ff70"/>
<rect x="2285.08" y="1384.33" width="9.24" height="82.17" fill="#f56954"/>
<rect x="2285.08" y="1365.81" width="9.24" height="18.52" fill="#3c8dbc"/>
<rect x="2285.08" y="1353.79" width="9.24" height="12.02" fill="#00a65a"/>
<rect x="2285.08" y="1348.07" width="9.24" height="5.71" fill="#00c0ef"/>
<rect x="2285.08" y="1336.65" width="9.24" height="11.43" fill="#001f3f"/>
<rect x="2285.08" y="1334.28" width="9.24" height="2.36" fill="#39cccc"/>
<rect x="2285.08" y="1332.70" width="9.24" height="1.58" fill="#01ff70"/>
<rect x="2297.91" y="1380.59" width="9.24" height="85.91" fill="#f56954"/>
<rect x="2297.91" y="1356.94" width="9.24" height="23.65" fill="#3c8dbc"/>
<rect x="2297.91" y="1340.98" width="9.24" height="15.96" fill="#00a65a"/>
<rect x="2297.91" y="1336.65" width="9.24" height="4.34" fill="#00c0ef"/>
<rect x="2297.91" y="1331.72" width="9.24" height="4.93" fill="#001f3f"/>
<rect x="2297.91" y="1329.16" width="9.24" height="2.56" fill="#39cccc"/>
<rect x="2297.91" y="1322.46" width="9.24" height="6.70" fill="#01ff70"/>
<rect x="2310.74" y="1398.32" width="9.24" height="68.18" fill="#f56954"/>
<rect x="2310.74" y="1372.71" width="9.24" height="25.62" fill="#3c8dbc"/>
<rect x="2310.74" y="1358.32" width="9.24" height="14.39" fill="#00a65a"/>
<rect x="2310.74" y="1350.05" width="9.24" height="8.28" fill="#00c0ef"/>
<rect x="2310.74" y="1343.54" width="9.24" height="6.50" fill="#001f3f"/>
<rect x="2310.74" y="1333.30" width="9.24" height="10.25" fill="#01ff70"/>
<rect x="2323.58" y="1396.71" width="9.24" height="69.79" fill="#f56954"/>
<rect x="2323.58" y="1375.04" width="9.24" height="21.67" fill="#3c8dbc"/>
<rect x="2323.58" y="1363.22" width="9.24" height="11.82" fill="#00a65a"/>
<rect x="2323.58" y="1356.32" width="9.24" height="6.90" fill="#00c0ef"/>
<rect x="2323.58" y="1352.38" width="9.24" height="3.94" fill="#001f3f"/>
<rect x="2323.58" y="1350.81" width="9.24" height="1.58" fill="#39cccc"/>
<rect x="2323.58" y="1350.02" width="9.24" height="0.79" fill="#01ff70"/>
<rect x="2336.41" y="1408.54" width="9.24" height="57.96" fill="#f56954"/>
<rect x="2336.41" y="1388.83" width="9.24" height="19.70" fill="#3c8dbc"/>
<rect x="2336.41" y="1378.98" width="9.24" height="9.85" fill="#00a65a"/>
<rect x="2336.41" y="1373.07" width="9.24" height="5.91" fill="#00c0ef"/>
<rect x="2336.41" y="1370.12" width="9.24" height="2.96" fill="#001f3f"/>
<rect x="2336.41" y="1368.74" width="9.24" height="1.38" fill="#39cccc"/>
<rect x="2336.41" y="1367.75" width="9.24" height="0.99" fill="#01ff70"/>
<rect x="2349.25" y="1377.60" width="9.24" height="88.90" fill="#f56954"/>
<rect x="2349.25" y="1355.34" width="9.24" height="22.26" fill="#3c8dbc"/>
<rect x="2349.25" y="1344.50" width="9.24" height="10.84" fill="#00a65a"/>
<rect x="2349.25" y="1342.14" width="9.24" height="2.36" fill="#00c0ef"/>
<rect x="2349.25" y="1339.58" width="9.24" height="2.56" fill="#001f3f"/>
<rect x="2349.25" y="1337.61" width="9.24" height="1.97" fill="#39cccc"/>
<rect x="2349.25" y="1336.03" width="9.24" height="1.58" fill="#01ff70"/>
<rect x="2362.09" y="1370.12" width="9.24" height="96.38" fill="#f56954"/>
<rect x="2362.09" y="1351.00" width="9.24" height="19.11" fill="#3c8dbc"/>
<rect x="2362.09" y="1342.14" width="9.24" height="8.87" fill="#00a65a"/>
<rect x="2362.09" y="1335.64" width="9.24" height="6.50" fill="#00c0ef"/>
<rect x="2362.09" y="1332.68" width="9.24" height="2.96" fill="#0073b7"/>
<rect x="2362.09" y="1324.80" width="9.24" height="7.88" fill="#39cccc"/>
<rect x="2362.09" y="1320.27" width="9.24" height="4.53" fill="#01ff70"/>
<rect x="2374.92" y="1363.81" width="9.24" height="102.69" fill="#f56954"/>
<rect x="2374.92" y="1342.14" width="9.24" height="21.67" fill="#3c8dbc"/>
<rect x="2374.92" y="1331.70" width="9.24" height="10.44" fill="#00a65a"/>
<rect x="2374.92" y="1325.78" width="9.24" height="5.91" fill="#00c0ef"/>
<rect x="2374.92" y="1317.90" width="9.24" height="7.88" fill="#001f3f"/>
<rect x="2374.92" y="1314.95" width="9.24" height="2.96" fill="#39cccc"/>
<rect x="2374.92" y="1309.43" width="9.24" height="5.52" fill="#01ff70"/>
<rect x="2387.76" y="1385.48" width="9.24" height="81.02" fill="#f56954"/>
<rect x="2387.76" y="1362.63" width="9.24" height="22.86" fill="#3c8dbc"/>
<rect x="2387.76" y="1356.32" width="9.24" height="6.30" fill="#00a65a"/>
<rect x="2387.76" y="1351.40" width="9.24" height="4.93" fill="#00c0ef"/>
<rect x="2387.76" y="1347.46" width="9.24" height="3.94" fill="#0073b7"/>
<rect x="2387.76" y="1345.49" width="9.24" height="1.97" fill="#39cccc"/>
<rect x="2387.76" y="1344.50" width="9.24" height="0.99" fill="#01ff70"/>
<rect x="2400.59" y="1357.90" width="9.24" height="108.60" fill="#f56954"/>
<rect x="2400.59" y="1337.01" width="9.24" height="20.88" fill="#3c8dbc"/>
<rect x="2400.59" y="1319.28" width="9.24" height="17.73" fill="#00a65a"/>
<rect x="2400.59" y="1312.98" width="9.24" height="6.30" fill="#00c0ef"/>
<rect x="2400.59" y="1307.07" width="9.24" height="5.91" fill="#0073b7"/>
<rect x="2400.59" y="1303.13" width="9.24" height="3.94" fill="#001f3f"/>
<rect x="2400.59" y="1300.76" width="9.24" height="2.36" fill="#39cccc"/>
<rect x="2400.59" y="1294.65" width="9.24" height="6.11" fill="#01ff70"/>
<rect x="2413.43" y="1361.84" width="9.24" height="104.66" fill="#f56954"/>
<rect x="2413.43" y="1341.94" width="9.24" height="19.90" fill="#3c8dbc"/>
<rect x="2413.43" y="1297.61" width="9.24" height="44.33" fill="#00a65a"/>
<rect x="2413.43" y="1291.30" width="9.24" height="6.30" fill="#00c0ef"/>
<rect x="2413.43" y="1287.76" width="9.24" height="3.55" fill="#001f3f"/>
<rect x="2413.43" y="1285.39" width="9.24" height="2.36" fill="#39cccc"/>
<rect x="2413.43" y="1283.03" width="9.24" height="2.36" fill="#01ff70"/>
<rect x="2426.26" y="1336.62" width="9.24" height="129.88" fill="#f56954"/>
<rect x="2426.26" y="1317.31" width="9.24" height="19.31" fill="#3c8dbc"/>
<rect x="2426.26" y="1260.77" width="9.24" height="56.55" fill="#00a65a"/>
<rect x="2426.26" y="1254.86" width="9.24" height="5.91" fill="#00c0ef"/>
<rect x="2426.26" y="1249.93" width="9.24" height="4.93" fill="#001f3f"/>
<rect x="2426.26" y="1248.35" width="9.24" height="1.58" fill="#39cccc"/>
<rect x="2426.26" y="1246.97" width="9.24" height="1.38" fill="#01ff70"/>
<rect x="2439.10" y="1404.59" width="9.24" height="61.91" fill="#f56954"/>
<rect x="2439.10" y="1381.94" width="9.24" height="22.66" fill="#3c8dbc"/>
<rect x="2439.10" y="1323.81" width="9.24" height="58.12" fill="#00a65a"/>
<rect x="2439.10" y="1318.49" width="9.24" height="5.32" fill="#00c0ef"/>
<rect x="2439.10" y="1316.52" width="9.24" height="1.97" fill="#001f3f"/>
<rect x="2439.10" y="1314.55" width="9.24" height="1.97" fill="#39cccc"/>
<rect x="2439.10" y="1311.01" width="9.24" height="3.55" fill="#01ff70"/>
<rect x="2451.93" y="1401.25" width="9.24" height="65.25" fill="#f56954"/>
<rect x="2451.93" y="1374.06" width="9.24" height="27.19" fill="#3c8dbc"/>
<rect x="2451.93" y="1317.51" width="9.24" height="56.55" fill="#00a65a"/>
<rect x="2451.93" y="1311.01" width="9.24" height="6.50" fill="#00c0ef"/>
<rect x="2451.93" y="1302.14" width="9.24" height="8.87" fill="#001f3f"/>
<rect x="2451.93" y="1299.19" width="9.24" height="2.96" fill="#39cccc"/>
<rect x="2451.93" y="1293.87" width="9.24" height="5.32" fill="#01ff70"/>
<rect x="2464.77" y="1393.36" width="9.24" height="73.14" fill="#f56954"/>
<rect x="2464.77" y="1368.14" width="9.24" height="25.22" fill="#3c8dbc"/>
<rect x="2464.77" y="1351.99" width="9.24" height="16.16" fill="#00a65a"/>
<rect x="2464.77" y="1339.58" width="9.24" height="12.41" fill="#00c0ef"/>
<rect x="2464.77" y="1336.62" width="9.24" height="2.96" fill="#0073b7"/>
<rect x="2464.77" y="1216.43" width="9.24" height="120.19" fill="#3d9970"/>
<rect x="2464.77" y="1213.48" width="9.24" height="2.96" fill="#01ff70"/>
<rect x="2477.60" y="1407.55" width="9.24" height="58.95" fill="#f56954"/>
<rect x="2477.60" y="1386.86" width="9.24" height="20.69" fill="#3c8dbc"/>
<rect x="2477.60" y="1356.91" width="9.24" height="29.95" fill="#00a65a"/>
<rect x="2477.60" y="1344.50" width="9.24" height="12.41" fill="#00c0ef"/>
<rect x="2477.60" y="1342.93" width="9.24" height="1.58" fill="#001f3f"/>
<rect x="2477.60" y="1250.91" width="9.24" height="92.01" fill="#3d9970"/>
<rect x="2477.60" y="1248.55" width="9.24" height="2.36" fill="#01ff70"/>
<rect x="2490.44" y="1411.88" width="9.24" height="54.62" fill="#f56954"/>
<rect x="2490.44" y="1383.51" width="9.24" height="28.37" fill="#3c8dbc"/>
<rect x="2490.44" y="1324.41" width="9.24" height="59.11" fill="#00a65a"/>
<rect x="2490.44" y="1320.86" width="9.24" height="3.55" fill="#00c0ef"/>
<rect x="2490.44" y="1318.49" width="9.24" height="2.36" fill="#0073b7"/>
<rect x="2490.44" y="1316.92" width="9.24" height="1.58" fill="#001f3f"/>
<rect x="2490.44" y="1299.58" width="9.24" height="17.34" fill="#3d9970"/>
<rect x="2490.44" y="1292.68" width="9.24" height="6.90" fill="#01ff70"/>
<rect x="2503.27" y="1373.07" width="9.24" height="93.43" fill="#f56954"/>
<rect x="2503.27" y="1350.41" width="9.24" height="22.66" fill="#3c8dbc"/>
<rect x="2503.27" y="1318.30" width="9.24" height="32.12" fill="#00a65a"/>
<rect x="2503.27" y="1311.01" width="9.24" height="7.29" fill="#00c0ef"/>
<rect x="2503.27" y="1302.14" width="9.24" height="8.87" fill="#001f3f"/>
<rect x="2503.27" y="1300.17" width="9.24" height="1.97" fill="#39cccc"/>
<rect x="2503.27" y="1294.65" width="9.24" height="5.52" fill="#01ff70"/>
<rect x="2516.11" y="1392.18" width="9.24" height="74.32" fill="#f56954"/>
<rect x="2516.11" y="1373.07" width="9.24" height="19.11" fill="#3c8dbc"/>
<rect x="2516.11" y="1322.83" width="9.24" height="50.24" fill="#00a65a"/>
<rect x="2516.11" y="1317.90" width="9.24" height="4.93" fill="#00c0ef"/>
<rect x="2516.11" y="1312.98" width="9.24" height="4.93" fill="#001f3f"/>
<rect x="2516.11" y="1290.32" width="9.24" height="22.66" fill="#3d9970"/>
<rect x="2516.11" y="1287.96" width="9.24" height="2.36" fill="#01ff70"/>
<rect x="2528.94" y="1387.85" width="9.24" height="78.65" fill="#f56954"/>
<rect x="2528.94" y="1362.83" width="9.24" height="25.02" fill="#3c8dbc"/>
<rect x="2528.94" y="1331.30" width="9.24" height="31.52" fill="#00a65a"/>
<rect x="2528.94" y="1324.80" width="9.24" height="6.50" fill="#00c0ef"/>
<rect x="2528.94" y="1320.46" width="9.24" height="4.33" fill="#001f3f"/>
<rect x="2528.94" y="1316.92" width="9.24" height="3.55" fill="#39cccc"/>
<rect x="2528.94" y="1311.01" width="9.24" height="5.91" fill="#01ff70"/>
<rect x="2541.78" y="1399.08" width="9.24" height="67.42" fill="#f56954"/>
<rect x="2541.78" y="1375.04" width="9.24" height="24.04" fill="#3c8dbc"/>
<rect x="2541.78" y="1335.04" width="9.24" height="40.00" fill="#00a65a"/>
<rect x="2541.78" y="1329.72" width="9.24" height="5.32" fill="#00c0ef"/>
<rect x="2541.78" y="1324.80" width="9.24" height="4.93" fill="#001f3f"/>
<rect x="2541.78" y="1322.43" width="9.24" height="2.36" fill="#39cccc"/>
<rect x="2541.78" y="1318.89" width="9.24" height="3.55" fill="#01ff70"/>
<rect x="2554.61" y="1388.83" width="9.24" height="77.67" fill="#f56954"/>
<rect x="2554.61" y="1326.77" width="9.24" height="62.06" fill="#3c8dbc"/>
<rect x="2554.61" y="1291.70" width="9.24" height="35.07" fill="#00a65a"/>
<rect x="2554.61" y="1283.82" width="9.24" height="7.88" fill="#00c0ef"/>
<rect x="2554.61" y="1278.50" width="9.24" height="5.32" fill="#001f3f"/>
<rect x="2554.61" y="1276.92" width="9.24" height="1.58" fill="#39cccc"/>
<rect x="2554.61" y="1266.68" width="9.24" height="10.25" fill="#3d9970"/>
<rect x="2554.61" y="1265.10" width="9.24" height="1.58" fill="#01ff70"/>
<rect x="2567.45" y="1400.26" width="9.24" height="66.24" fill="#f56954"/>
<rect x="2567.45" y="1379.38" width="9.24" height="20.88" fill="#3c8dbc"/>
<rect x="2567.45" y="1338.20" width="9.24" height="41.18" fill="#00a65a"/>
<rect x="2567.45" y="1332.29" width="9.24" height="5.91" fill="#00c0ef"/>
<rect x="2567.45" y="1329.72" width="9.24" height="2.56" fill="#001f3f"/>
<rect x="2567.45" y="1326.38" width="9.24" height="3.35" fill="#39cccc"/>
<rect x="2567.45" y="1324.21" width="9.24" height="2.17" fill="#01ff70"/>
<rect x="2580.28" y="1398.09" width="9.24" height="68.41" fill="#f56954"/>
<rect x="2580.28" y="1378.00" width="9.24" height="20.10" fill="#3c8dbc"/>
<rect x="2580.28" y="1370.12" width="9.24" height="7.88" fill="#00a65a"/>
<rect x="2580.28" y="1365.19" width="9.24" height="4.93" fill="#00c0ef"/>
<rect x="2580.28" y="1359.87" width="9.24" height="5.32" fill="#001f3f"/>
<rect x="2580.28" y="1357.31" width="9.24" height="2.56" fill="#39cccc"/>
<rect x="2580.28" y="1354.94" width="9.24" height="2.36" fill="#01ff70"/>
<rect x="2593.12" y="1371.69" width="9.24" height="94.81" fill="#f56954"/>
<rect x="2593.12" y="1342.14" width="9.24" height="29.55" fill="#3c8dbc"/>
<rect x="2593.12" y="1325.19" width="9.24" height="16.94" fill="#00a65a"/>
<rect x="2593.12" y="1319.28" width="9.24" height="5.91" fill="#00c0ef"/>
<rect x="2593.12" y="1316.52" width="9.24" height="2.76" fill="#0073b7"/>
<rect x="2593.12" y="1310.02" width="9.24" height="6.50" fill="#001f3f"/>
<rect x="2593.12" y="1307.07" width="9.24" height="2.96" fill="#39cccc"/>
<rect x="2593.12" y="1290.91" width="9.24" height="16.16" fill="#01ff70"/>
<rect x="2605.95" y="1395.14" width="9.24" height="71.36" fill="#f56954"/>
<rect x="2605.95" y="1364.20" width="9.24" height="30.93" fill="#3c8dbc"/>
<rect x="2605.95" y="1351.79" width="9.24" height="12.41" fill="#00a65a"/>
<rect x="2605.95" y="1348.84" width="9.24" height="2.96" fill="#00c0ef"/>
<rect x="2605.95" y="1344.11" width="9.24" height="4.73" fill="#001f3f"/>
<rect x="2605.95" y="1341.55" width="9.24" height="2.56" fill="#39cccc"/>
<rect x="2605.95" y="1334.65" width="9.24" height="6.90" fill="#01ff70"/>
<rect x="2618.79" y="1357.31" width="9.24" height="109.19" fill="#f56954"/>
<rect x="2618.79" y="1336.03" width="9.24" height="21.28" fill="#3c8dbc"/>
<rect x="2618.79" y="1327.36" width="9.24" height="8.67" fill="#00a65a"/>
<rect x="2618.79" y="1319.87" width="9.24" height="7.49" fill="#00c0ef"/>
<rect x="2618.79" y="1317.90" width="9.24" height="1.97" fill="#0073b7"/>
<rect x="2618.79" y="1313.96" width="9.24" height="3.94" fill="#001f3f"/>
<rect x="2618.79" y="1311.01" width="9.24" height="2.96" fill="#39cccc"/>
<rect x="2618.79" y="1309.04" width="9.24" height="1.97" fill="#01ff70"/>
<rect x="2631.62" y="1438.68" width="9.24" height="27.82" fill="#f56954"/>
<rect x="2631.62" y="1435.13" width="9.24" height="3.55" fill="#3c8dbc"/>
<rect x="2631.62" y="1433.16" width="9.24" height="1.97" fill="#00c0ef"/>
<rect x="2631.62" y="1426.27" width="9.24" height="6.90" fill="#3d9970"/>
<rect x="2631.62" y="1424.89" width="9.24" height="1.38" fill="#01ff70"/>
</g></svg>
<div class="t" style="left:752.0px;top:1454.5px;font:400 23.40px/23.40px 'Liberation Sans', sans-serif;color:#2a2a2a;letter-spacing:0.00px;">0</div>
<div class="t" style="left:725.9px;top:1391.7px;font:400 23.40px/23.40px 'Liberation Sans', sans-serif;color:#2a2a2a;letter-spacing:0.00px;">400</div>
<div class="t" style="left:725.9px;top:1329.0px;font:400 23.40px/23.40px 'Liberation Sans', sans-serif;color:#2a2a2a;letter-spacing:0.00px;">800</div>
<div class="t" style="left:706.4px;top:1266.2px;font:400 23.40px/23.40px 'Liberation Sans', sans-serif;color:#2a2a2a;letter-spacing:0.00px;">1.200</div>
<div class="t" style="left:706.4px;top:1203.5px;font:400 23.40px/23.40px 'Liberation Sans', sans-serif;color:#2a2a2a;letter-spacing:0.00px;">1.600</div>
<div class="t" style="left:803.4px;top:1490.6px;font:400 23.60px/23.60px 'Liberation Sans', sans-serif;color:#2a2a2a;letter-spacing:0.00px;">19:00</div>
<div class="t" style="left:880.4px;top:1490.6px;font:400 23.60px/23.60px 'Liberation Sans', sans-serif;color:#2a2a2a;letter-spacing:0.00px;">20:00</div>
<div class="t" style="left:957.4px;top:1490.6px;font:400 23.60px/23.60px 'Liberation Sans', sans-serif;color:#2a2a2a;letter-spacing:0.00px;">21:00</div>
<div class="t" style="left:1034.4px;top:1490.6px;font:400 23.60px/23.60px 'Liberation Sans', sans-serif;color:#2a2a2a;letter-spacing:0.00px;">22:00</div>
<div class="t" style="left:1111.3px;top:1490.6px;font:400 23.60px/23.60px 'Liberation Sans', sans-serif;color:#2a2a2a;letter-spacing:0.00px;">23:00</div>
<div class="t" style="left:1188.3px;top:1490.6px;font:400 23.60px/23.60px 'Liberation Sans', sans-serif;color:#2a2a2a;letter-spacing:0.00px;">00:00</div>
<div class="t" style="left:1265.3px;top:1490.6px;font:400 23.60px/23.60px 'Liberation Sans', sans-serif;color:#2a2a2a;letter-spacing:0.00px;">01:00</div>
<div class="t" style="left:1342.2px;top:1490.6px;font:400 23.60px/23.60px 'Liberation Sans', sans-serif;color:#2a2a2a;letter-spacing:0.00px;">02:00</div>
<div class="t" style="left:1419.2px;top:1490.6px;font:400 23.60px/23.60px 'Liberation Sans', sans-serif;color:#2a2a2a;letter-spacing:0.00px;">03:00</div>
<div class="t" style="left:1496.2px;top:1490.6px;font:400 23.60px/23.60px 'Liberation Sans', sans-serif;color:#2a2a2a;letter-spacing:0.00px;">04:00</div>
<div class="t" style="left:1573.1px;top:1490.6px;font:400 23.60px/23.60px 'Liberation Sans', sans-serif;color:#2a2a2a;letter-spacing:0.00px;">05:00</div>
<div class="t" style="left:1650.1px;top:1490.6px;font:400 23.60px/23.60px 'Liberation Sans', sans-serif;color:#2a2a2a;letter-spacing:0.00px;">06:00</div>
<div class="t" style="left:1727.1px;top:1490.6px;font:400 23.60px/23.60px 'Liberation Sans', sans-serif;color:#2a2a2a;letter-spacing:0.00px;">07:00</div>
<div class="t" style="left:1804.1px;top:1490.6px;font:400 23.60px/23.60px 'Liberation Sans', sans-serif;color:#2a2a2a;letter-spacing:0.00px;">08:00</div>
<div class="t" style="left:1881.0px;top:1490.6px;font:400 23.60px/23.60px 'Liberation Sans', sans-serif;color:#2a2a2a;letter-spacing:0.00px;">09:00</div>
<div class="t" style="left:1958.0px;top:1490.6px;font:400 23.60px/23.60px 'Liberation Sans', sans-serif;color:#2a2a2a;letter-spacing:0.00px;">10:00</div>
<div class="t" style="left:2035.8px;top:1490.6px;font:400 23.60px/23.60px 'Liberation Sans', sans-serif;color:#2a2a2a;letter-spacing:0.00px;">11:00</div>
<div class="t" style="left:2111.9px;top:1490.6px;font:400 23.60px/23.60px 'Liberation Sans', sans-serif;color:#2a2a2a;letter-spacing:0.00px;">12:00</div>
<div class="t" style="left:2188.9px;top:1490.6px;font:400 23.60px/23.60px 'Liberation Sans', sans-serif;color:#2a2a2a;letter-spacing:0.00px;">13:00</div>
<div class="t" style="left:2265.9px;top:1490.6px;font:400 23.60px/23.60px 'Liberation Sans', sans-serif;color:#2a2a2a;letter-spacing:0.00px;">14:00</div>
<div class="t" style="left:2342.8px;top:1490.6px;font:400 23.60px/23.60px 'Liberation Sans', sans-serif;color:#2a2a2a;letter-spacing:0.00px;">15:00</div>
<div class="t" style="left:2419.8px;top:1490.6px;font:400 23.60px/23.60px 'Liberation Sans', sans-serif;color:#2a2a2a;letter-spacing:0.00px;">16:00</div>
<div class="t" style="left:2496.8px;top:1490.6px;font:400 23.60px/23.60px 'Liberation Sans', sans-serif;color:#2a2a2a;letter-spacing:0.00px;">17:00</div>
<div class="t" style="left:2573.8px;top:1490.6px;font:400 23.60px/23.60px 'Liberation Sans', sans-serif;color:#2a2a2a;letter-spacing:0.00px;">18:00</div>
</div></div>
<svg style="left:0;top:0" width="800" height="60" viewBox="0 0 800 60"><g transform="translate(266.645,-42.216) scale(0.21569)"><defs><linearGradient id="fg1" x1="0" x2="1"><stop offset="0" stop-color="#1fae2c"/><stop offset="1" stop-color="#2bdb35"/></linearGradient><linearGradient id="fg2" x1="0" x2="1"><stop offset="0" stop-color="#25d232"/><stop offset="1" stop-color="#2efb38"/></linearGradient></defs><path d="M236 259 Q268 260 279 282 Q283 292 275.5 305 Q250 303 240 282 Q236 272 236 259Z" fill="url(#fg1)"/><path d="M248 270 Q265 286 281 305" stroke="#1a7a20" stroke-width="1.2" fill="none"/><path d="M313.8 275 Q312 296 297 302 Q290 305 282.5 305.5 Q284 290 294 282 Q302 276 313.8 275Z" fill="url(#fg2)"/><path d="M284 307 Q291 307 296 312 L330 346 Q335 351 335 357 Q335 363 330 368 L296 402 Q291 408 284 408 Q277 408 272 402 L238 368 Q233 363 233 357 Q233 351 238 346 L272 312 Q277 307 284 307Z" fill="#960a0e"/><path d="M238 346 L272 312 Q277 307 284 307 Q303.5 307 303.5 326.5 Q303.5 346 284 346 Q276 346 266 342 Q254 337 244 342Z" fill="#f2111a"/><path d="M330 368 L296 402 Q291 408 284 408 Q264.5 408 264.5 388.5 Q264.5 369 284 369 Q292 369 302 373 Q314 378 324 373Z" fill="#f2111a"/><path d="M238 368 Q233 363 233 357 Q233 337.5 252.5 337.5 Q272 337.5 272 357 Q272 365 268 374 Q263 386 270 398Z" fill="#960a0e"/><path d="M330 346 Q335 351 335 357 Q335 376.5 315.5 376.5 Q296 376.5 296 357 Q296 349 300 340 Q305 328 298 316Z" fill="#960a0e"/><path d="M284 346 Q276 346 266 342 Q272 350 272 357 Q272 365 268 374 Q276 369 284 369 Q292 369 302 373 Q296 365 296 357 Q296 349 300 340 Q292 346 284 346Z" fill="#ffffff"/></g></svg>
</div></body></html>
